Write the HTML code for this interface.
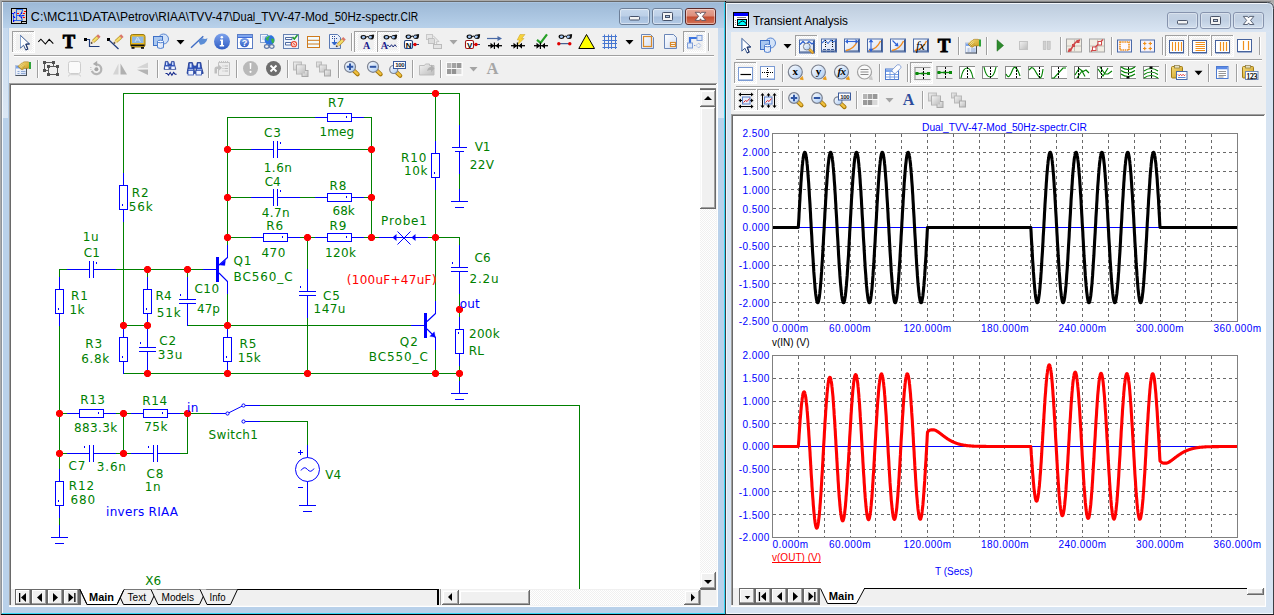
<!DOCTYPE html>
<html><head><meta charset="utf-8"><title>Micro-Cap</title>
<style>
html,body{margin:0;padding:0;background:#ababab;overflow:hidden}
svg{display:block}
.ui{font-family:"Liberation Sans",sans-serif}
.sch{font-family:"DejaVu Sans","Liberation Sans",sans-serif}
.ser{font-family:"Liberation Serif",serif}
text{white-space:pre}
</style></head><body>
<svg width="1274" height="615" viewBox="0 0 1274 615">
<defs>
<linearGradient id="gAct" x1="0" y1="0" x2="0" y2="1"><stop offset="0" stop-color="#9bb7d5"/><stop offset="1" stop-color="#b9d2eb"/></linearGradient>
<linearGradient id="gSide" x1="0" y1="0" x2="0" y2="1"><stop offset="0" stop-color="#c6d9ee"/><stop offset="1" stop-color="#dbe7f4"/></linearGradient>
<linearGradient id="gIna" x1="0" y1="0" x2="0" y2="1"><stop offset="0" stop-color="#bdccdd"/><stop offset="1" stop-color="#d9e5f3"/></linearGradient>
<linearGradient id="gBtnA" x1="0" y1="0" x2="0" y2="1"><stop offset="0" stop-color="#c8d9ed"/><stop offset="0.48" stop-color="#bccfe7"/><stop offset="0.52" stop-color="#a6bedc"/><stop offset="1" stop-color="#b4cbe6"/></linearGradient>
<linearGradient id="gBtnC" x1="0" y1="0" x2="0" y2="1"><stop offset="0" stop-color="#e8a898"/><stop offset="0.48" stop-color="#dc8d7a"/><stop offset="0.52" stop-color="#c44a2e"/><stop offset="1" stop-color="#d4775c"/></linearGradient>
<linearGradient id="gBtnI" x1="0" y1="0" x2="0" y2="1"><stop offset="0" stop-color="#c6d3e3"/><stop offset="0.5" stop-color="#c0cfe2"/><stop offset="1" stop-color="#d3e0ef"/></linearGradient>
<pattern id="dither" width="2" height="2" patternUnits="userSpaceOnUse"><rect width="2" height="2" fill="#ffffff"/><rect width="1" height="1" fill="#f0f0f0"/><rect x="1" y="1" width="1" height="1" fill="#f0f0f0"/></pattern>
</defs>
<rect x="0" y="0" width="1274" height="615" fill="#ababab" />
<rect x="1" y="1" width="725" height="614" fill="#b9d1ea" />
<rect x="1" y="1" width="725" height="28" fill="url(#gAct)" />
<rect x="3" y="28" width="5" height="90" fill="url(#gSide)" />
<rect x="718" y="28" width="6" height="90" fill="url(#gSide)" />
<rect x="1" y="1" width="725" height="1" fill="#696969" />
<rect x="1" y="1" width="1" height="614" fill="#8d949c" />
<rect x="2" y="2" width="723" height="1" fill="#aac4e0" />
<rect x="2" y="2" width="1" height="612" fill="#f4f8fc" />
<rect x="724" y="2" width="1" height="612" fill="#35d6f5" />
<rect x="2" y="613" width="723" height="1" fill="#35d6f5" />
<rect x="725" y="1" width="1" height="614" fill="#000000" />
<rect x="1" y="614" width="725" height="1" fill="#000000" />
<rect x="9" y="28" width="709" height="579" fill="#f0f0f0" />
<rect x="11" y="8" width="16" height="16" fill="#000" />
<rect x="12" y="9" width="14" height="14" fill="#d6d3ce" />
<rect x="21" y="21" width="5" height="2" fill="#000" />
<rect x="22" y="22" width="4" height="1" fill="#d0d0d0" />
<path d="M16.500 9v11.500M16.500 9.500h6.500M22.800 9.500l-1.300 3.500-2 2.500 2 2.500 .800 2M13.500 13v8M13 20.500h9.500M17 15.500h7.500M12 13.500h2" fill="none" stroke="#2d6ae6" stroke-width="1.100"/>
<rect x="12" y="13" width="1.5" height="1" fill="#0000ff" />
<rect x="14" y="12" width="1.3" height="1.3" fill="#0000ff" />
<rect x="13" y="16" width="1.4" height="1.2" fill="#0000ff" />
<rect x="14" y="17" width="1.2" height="1" fill="#0000ff" />
<rect x="13" y="20" width="1.2" height="2" fill="#0000ff" />
<rect x="19" y="15" width="1.2" height="1.5" fill="#0000ff" />
<rect x="21" y="12.4" width="1.2" height="1.6" fill="#0000ff" />
<rect x="21" y="16.5" width="1.2" height="1.6" fill="#0000ff" />
<rect x="22.4" y="15" width="1.3" height="1.2" fill="#0000ff" />
<rect x="17" y="13" width="2" height="1" fill="#ff0000" />
<rect x="24" y="11" width="2" height="1" fill="#ff0000" />
<rect x="23" y="13" width="2" height="1" fill="#ff0000" />
<rect x="23" y="17" width="2" height="1" fill="#ff0000" />
<text x="30.8" y="21" fill="#000" font-size="12" class="ui" text-anchor="start" font-weight="normal" textLength="16.1" lengthAdjust="spacingAndGlyphs">C:\</text>
<text x="46.9" y="21" fill="#000" font-size="12" class="ui" text-anchor="start" font-weight="normal" textLength="35.7" lengthAdjust="spacingAndGlyphs">MC11\</text>
<text x="82.6" y="21" fill="#000" font-size="12" class="ui" text-anchor="start" font-weight="normal" textLength="37.3" lengthAdjust="spacingAndGlyphs">DATA\</text>
<text x="119.9" y="21" fill="#000" font-size="12" class="ui" text-anchor="start" font-weight="normal" textLength="38.4" lengthAdjust="spacingAndGlyphs">Petrov\</text>
<text x="158.3" y="21" fill="#000" font-size="12" class="ui" text-anchor="start" font-weight="normal" textLength="30.7" lengthAdjust="spacingAndGlyphs">RIAA\</text>
<text x="189.0" y="21" fill="#000" font-size="12" class="ui" text-anchor="start" font-weight="normal" textLength="43.6" lengthAdjust="spacingAndGlyphs">TVV-47\</text>
<text x="232.6" y="21" fill="#000" font-size="12" class="ui" text-anchor="start" font-weight="normal" textLength="28.7" lengthAdjust="spacingAndGlyphs">Dual_</text>
<text x="261.3" y="21" fill="#000" font-size="12" class="ui" text-anchor="start" font-weight="normal" textLength="43.6" lengthAdjust="spacingAndGlyphs">TVV-47-</text>
<text x="304.9" y="21" fill="#000" font-size="12" class="ui" text-anchor="start" font-weight="normal" textLength="29.8" lengthAdjust="spacingAndGlyphs">Mod_</text>
<text x="334.7" y="21" fill="#000" font-size="12" class="ui" text-anchor="start" font-weight="normal" textLength="30.6" lengthAdjust="spacingAndGlyphs">50Hz-</text>
<text x="365.3" y="21" fill="#000" font-size="12" class="ui" text-anchor="start" font-weight="normal" textLength="35.3" lengthAdjust="spacingAndGlyphs">spectr.</text>
<text x="400.6" y="21" fill="#000" font-size="12" class="ui" text-anchor="start" font-weight="normal" textLength="17.6" lengthAdjust="spacingAndGlyphs">CIR</text>
<rect x="619.5" y="8.5" width="30" height="16" rx="2.5" fill="url(#gBtnA)" stroke="#6d7f98"/>
<rect x="620.5" y="9.5" width="28" height="14" rx="1.5" fill="none" stroke="#ffffff" stroke-opacity="0.45"/>
<rect x="652.5" y="8.5" width="30" height="16" rx="2.5" fill="url(#gBtnA)" stroke="#6d7f98"/>
<rect x="653.5" y="9.5" width="28" height="14" rx="1.5" fill="none" stroke="#ffffff" stroke-opacity="0.45"/>
<rect x="685.5" y="8.5" width="30" height="16" rx="2.5" fill="url(#gBtnC)" stroke="#5a2a2a"/>
<rect x="686.5" y="9.5" width="28" height="14" rx="1.5" fill="none" stroke="#ffffff" stroke-opacity="0.45"/>
<rect x="629.5" y="16.500" width="10" height="3.500" rx="0.800" fill="#f4f4f4" stroke="#46526a"/>
<rect x="662.5" y="12.500" width="10" height="8" rx="0.800" fill="#f4f4f4" stroke="#46526a"/><rect x="665.5" y="15.500" width="4" height="2" fill="#a9c1de" stroke="#46526a"/>
<path d="M695.200 12.300h4.300l1 1.500 1-1.500h4.300l-3.400 4 3.400 4.100h-4.300l-1-1.600-1 1.600h-4.300l3.400-4.100z" fill="#fff" stroke="#5b4b55" stroke-width="0.9"/>
<rect x="9" y="83" width="709" height="524" fill="#ffffff" />
<rect x="9" y="83" width="708" height="1" fill="#a0a0a0" />
<rect x="9" y="83" width="1" height="523" fill="#a0a0a0" />
<rect x="10" y="84" width="706" height="1" fill="#696969" />
<rect x="10" y="84" width="1" height="521" fill="#696969" />
<rect x="11" y="85" width="705" height="504" fill="#ffffff" />
<rect x="700" y="85" width="16" height="505" fill="url(#dither)" />
<rect x="700" y="85" width="16" height="4" fill="#f4f4f4" />
<rect x="700" y="88" width="16" height="1" fill="#808080" />
<rect x="700" y="89" width="16" height="1" fill="#696969" />
<rect x="700" y="90" width="16" height="17" fill="#f0f0f0" />
<rect x="700" y="90" width="16" height="1" fill="#f8f8f8" />
<rect x="700" y="90" width="1" height="17" fill="#f8f8f8" />
<rect x="701" y="91" width="14" height="1" fill="#ffffff" />
<rect x="701" y="91" width="1" height="15" fill="#ffffff" />
<rect x="700" y="106" width="16" height="1" fill="#696969" />
<rect x="715" y="90" width="1" height="17" fill="#696969" />
<rect x="701" y="105" width="14" height="1" fill="#a0a0a0" />
<rect x="714" y="91" width="1" height="15" fill="#a0a0a0" />
<path d="M704 100h8l-4-4z" fill="#000"/>
<rect x="700" y="107" width="16" height="102" fill="#f0f0f0" />
<rect x="700" y="107" width="16" height="1" fill="#f8f8f8" />
<rect x="700" y="107" width="1" height="102" fill="#f8f8f8" />
<rect x="701" y="108" width="14" height="1" fill="#ffffff" />
<rect x="701" y="108" width="1" height="100" fill="#ffffff" />
<rect x="700" y="208" width="16" height="1" fill="#696969" />
<rect x="715" y="107" width="1" height="102" fill="#696969" />
<rect x="701" y="207" width="14" height="1" fill="#a0a0a0" />
<rect x="714" y="108" width="1" height="100" fill="#a0a0a0" />
<rect x="700" y="572" width="16" height="17" fill="#f0f0f0" />
<rect x="700" y="572" width="16" height="1" fill="#f8f8f8" />
<rect x="700" y="572" width="1" height="17" fill="#f8f8f8" />
<rect x="701" y="573" width="14" height="1" fill="#ffffff" />
<rect x="701" y="573" width="1" height="15" fill="#ffffff" />
<rect x="700" y="588" width="16" height="1" fill="#696969" />
<rect x="715" y="572" width="1" height="17" fill="#696969" />
<rect x="701" y="587" width="14" height="1" fill="#a0a0a0" />
<rect x="714" y="573" width="1" height="15" fill="#a0a0a0" />
<path d="M704 580h8l-4 4z" fill="#000"/>
<rect x="11" y="589" width="706" height="16" fill="#f0f0f0" />
<rect x="11" y="589" width="70" height="1" fill="#f0f0f0" />
<rect x="15" y="589" width="66" height="16" fill="#696969" />
<rect x="16" y="590" width="14" height="14" fill="#f0f0f0" />
<rect x="16" y="590" width="14" height="1" fill="#ffffff" />
<rect x="16" y="590" width="1" height="14" fill="#ffffff" />
<rect x="16" y="603" width="14" height="1" fill="#a0a0a0" />
<rect x="29" y="590" width="1" height="14" fill="#a0a0a0" />
<rect x="32" y="590" width="14" height="14" fill="#f0f0f0" />
<rect x="32" y="590" width="14" height="1" fill="#ffffff" />
<rect x="32" y="590" width="1" height="14" fill="#ffffff" />
<rect x="32" y="603" width="14" height="1" fill="#a0a0a0" />
<rect x="45" y="590" width="1" height="14" fill="#a0a0a0" />
<rect x="48" y="590" width="14" height="14" fill="#f0f0f0" />
<rect x="48" y="590" width="14" height="1" fill="#ffffff" />
<rect x="48" y="590" width="1" height="14" fill="#ffffff" />
<rect x="48" y="603" width="14" height="1" fill="#a0a0a0" />
<rect x="61" y="590" width="1" height="14" fill="#a0a0a0" />
<rect x="64" y="590" width="14" height="14" fill="#f0f0f0" />
<rect x="64" y="590" width="14" height="1" fill="#ffffff" />
<rect x="64" y="590" width="1" height="14" fill="#ffffff" />
<rect x="64" y="603" width="14" height="1" fill="#a0a0a0" />
<rect x="77" y="590" width="1" height="14" fill="#a0a0a0" />
<path d="M19 593h1.300v9h-1.300zM26 593v9l-5-4.500z" fill="#000"/>
<path d="M42 593v9l-5-4.500z" fill="#000"/>
<path d="M53 593v9l5-4.500z" fill="#000"/>
<path d="M68.500 593v9l5-4.500zM74.200 593h1.300v9h-1.300z" fill="#000"/>
<rect x="81" y="589" width="357" height="1" fill="#000" />
<rect x="437" y="589" width="1" height="16" fill="#000" />
<rect x="438" y="589" width="1" height="16" fill="#000" />
<rect x="440" y="589" width="1" height="16" fill="#a0a0a0" />
<rect x="441" y="589" width="1" height="16" fill="#f8f8f8" />
<path d="M116.5 589.5L123.5 604.5H150L157 589.5" fill="#f0f0f0" stroke="#000" stroke-width="1"/>
<text x="127.5" y="600.7" fill="#000" font-size="11" class="ui" text-anchor="start" font-weight="normal" textLength="18.5" lengthAdjust="spacingAndGlyphs">Text</text>
<path d="M151 589.5L158 604.5H199.5L206.5 589.5" fill="#f0f0f0" stroke="#000" stroke-width="1"/>
<text x="161.5" y="600.7" fill="#000" font-size="11" class="ui" text-anchor="start" font-weight="normal" textLength="32.5" lengthAdjust="spacingAndGlyphs">Models</text>
<path d="M200 589.5L207 604.5H230.5L237.5 589.5" fill="#f0f0f0" stroke="#000" stroke-width="1"/>
<text x="209.5" y="600.7" fill="#000" font-size="11" class="ui" text-anchor="start" font-weight="normal" textLength="16" lengthAdjust="spacingAndGlyphs">Info</text>
<path d="M80 589.5L87 604.5H117L124 589.5" fill="#fff" stroke="#000" stroke-width="1"/>
<rect x="81" y="589" width="43" height="1" fill="#fff" />
<path d="M80 589.5L87 604.5H117L124 589.5" fill="none" stroke="#000" stroke-width="1"/>
<text x="89" y="600.7" fill="#000" font-size="11" class="ui" text-anchor="start" font-weight="bold" textLength="25" lengthAdjust="spacingAndGlyphs">Main</text>
<rect x="442" y="590" width="258" height="15" fill="url(#dither)" />
<rect x="442" y="590" width="17" height="15" fill="#f0f0f0" />
<rect x="442" y="590" width="17" height="1" fill="#f8f8f8" />
<rect x="442" y="590" width="1" height="15" fill="#f8f8f8" />
<rect x="443" y="591" width="15" height="1" fill="#ffffff" />
<rect x="443" y="591" width="1" height="13" fill="#ffffff" />
<rect x="442" y="604" width="17" height="1" fill="#696969" />
<rect x="458" y="590" width="1" height="15" fill="#696969" />
<rect x="443" y="603" width="15" height="1" fill="#a0a0a0" />
<rect x="457" y="591" width="1" height="13" fill="#a0a0a0" />
<path d="M452 593v8l-4-4z" fill="#000"/>
<rect x="459" y="590" width="71" height="15" fill="#f0f0f0" />
<rect x="459" y="590" width="71" height="1" fill="#f8f8f8" />
<rect x="459" y="590" width="1" height="15" fill="#f8f8f8" />
<rect x="460" y="591" width="69" height="1" fill="#ffffff" />
<rect x="460" y="591" width="1" height="13" fill="#ffffff" />
<rect x="459" y="604" width="71" height="1" fill="#696969" />
<rect x="529" y="590" width="1" height="15" fill="#696969" />
<rect x="460" y="603" width="69" height="1" fill="#a0a0a0" />
<rect x="528" y="591" width="1" height="13" fill="#a0a0a0" />
<rect x="684" y="590" width="16" height="15" fill="#f0f0f0" />
<rect x="684" y="590" width="16" height="1" fill="#f8f8f8" />
<rect x="684" y="590" width="1" height="15" fill="#f8f8f8" />
<rect x="685" y="591" width="14" height="1" fill="#ffffff" />
<rect x="685" y="591" width="1" height="13" fill="#ffffff" />
<rect x="684" y="604" width="16" height="1" fill="#696969" />
<rect x="699" y="590" width="1" height="15" fill="#696969" />
<rect x="685" y="603" width="14" height="1" fill="#a0a0a0" />
<rect x="698" y="591" width="1" height="13" fill="#a0a0a0" />
<path d="M691 593.5v8l4-4z" fill="#000"/>
<rect x="700" y="590" width="16" height="15" fill="#f0f0f0" />
<rect x="700" y="589" width="16" height="1" fill="#696969" />
<rect x="700" y="589" width="1" height="16" fill="#a0a0a0" />
<rect x="716" y="85" width="1" height="520" fill="#f4f4f4" />
<rect x="9" y="605" width="709" height="1" fill="#f4f4f4" />
<rect x="9" y="606" width="709" height="1" fill="#ffffff" />
<rect x="717" y="83" width="1" height="524" fill="#ffffff" />
<rect x="726" y="1" width="545" height="1" fill="#858585" />
<path d="M725 615V2H1268Q1274 2 1274 8V615Z" fill="#d7e4f2"/>
<path d="M727 32V4H1267Q1272 4 1272 9V32Z" fill="url(#gIna)"/>
<path d="M725.5 615V2.5H1267.5Q1273.5 2.5 1273.5 8.5V615" fill="none" stroke="#3b3f45"/>
<path d="M726.5 613V3.5H1267" fill="none" stroke="#f2f6fb"/>
<rect x="727" y="613" width="546" height="1" fill="#f2f6fb" />
<rect x="725" y="614" width="549" height="1" fill="#1a1c20" />
<rect x="731" y="32" width="535" height="575" fill="#f0f0f0" />
<rect x="733" y="12" width="16" height="16" fill="#000" />
<rect x="734" y="13" width="14" height="3" fill="#0000ff" />
<rect x="734" y="16" width="14" height="11" fill="#ffffff" />
<rect x="737" y="17" width="9" height="1" fill="#808080" />
<rect x="737" y="19" width="10" height="7" fill="#000" />
<rect x="738" y="20" width="8" height="5" fill="#00ffff" />
<path d="M738.5 24q4-6 8 0" fill="none" stroke="#000" stroke-width="1"/>
<rect x="735" y="20" width="1" height="1" fill="#808080" />
<rect x="735" y="22" width="1" height="1" fill="#808080" />
<rect x="735" y="24" width="1" height="1" fill="#808080" />
<text x="753" y="25" fill="#000" font-size="12.3" class="ui" text-anchor="start" font-weight="normal" textLength="95" lengthAdjust="spacingAndGlyphs">Transient Analysis</text>
<rect x="1167.5" y="12.5" width="30" height="16" rx="2.5" fill="url(#gBtnI)" stroke="#8693ad"/>
<rect x="1168.5" y="13.5" width="28" height="14" rx="1.5" fill="none" stroke="#ffffff" stroke-opacity="0.35"/>
<rect x="1200.5" y="12.5" width="30" height="16" rx="2.5" fill="url(#gBtnI)" stroke="#8693ad"/>
<rect x="1201.5" y="13.5" width="28" height="14" rx="1.5" fill="none" stroke="#ffffff" stroke-opacity="0.35"/>
<rect x="1233.5" y="12.5" width="30" height="16" rx="2.5" fill="url(#gBtnI)" stroke="#8693ad"/>
<rect x="1234.5" y="13.5" width="28" height="14" rx="1.5" fill="none" stroke="#ffffff" stroke-opacity="0.35"/>
<rect x="1177.5" y="20.500" width="10" height="3.500" rx="0.800" fill="#f4f4f4" stroke="#4a5468"/>
<rect x="1210.5" y="16.500" width="10" height="8" rx="0.800" fill="#f4f4f4" stroke="#4a5468"/><rect x="1213.5" y="19.5" width="4" height="2" fill="#c0cfe2" stroke="#4a5468"/>
<path d="M1243.300 16.400h4.300l1 1.500 1-1.500h4.300l-3.400 4 3.400 4.100h-4.300l-1-1.600-1 1.600h-4.300l3.400-4.100z" fill="#fff" stroke="#4a5468" stroke-width="0.9"/>
<rect x="731" y="114" width="534" height="1" fill="#a0a0a0" />
<rect x="731" y="114" width="1" height="492" fill="#a0a0a0" />
<rect x="732" y="115" width="532" height="1" fill="#696969" />
<rect x="732" y="115" width="1" height="490" fill="#696969" />
<rect x="733" y="116" width="532" height="473" fill="#ffffff" />
<rect x="731" y="605" width="535" height="1" fill="#f4f4f4" />
<rect x="731" y="606" width="535" height="1" fill="#ffffff" />
<rect x="1265" y="114" width="1" height="493" fill="#ffffff" />
<rect x="733" y="588" width="532" height="17" fill="#f0f0f0" />
<rect x="739" y="588" width="81" height="17" fill="#696969" />
<rect x="740" y="589" width="14" height="14" fill="#f0f0f0" />
<rect x="740" y="589" width="14" height="1" fill="#ffffff" />
<rect x="740" y="589" width="1" height="14" fill="#ffffff" />
<rect x="740" y="602" width="14" height="1" fill="#a0a0a0" />
<rect x="753" y="589" width="1" height="14" fill="#a0a0a0" />
<rect x="756" y="589" width="14" height="14" fill="#f0f0f0" />
<rect x="756" y="589" width="14" height="1" fill="#ffffff" />
<rect x="756" y="589" width="1" height="14" fill="#ffffff" />
<rect x="756" y="602" width="14" height="1" fill="#a0a0a0" />
<rect x="769" y="589" width="1" height="14" fill="#a0a0a0" />
<rect x="772" y="589" width="14" height="14" fill="#f0f0f0" />
<rect x="772" y="589" width="14" height="1" fill="#ffffff" />
<rect x="772" y="589" width="1" height="14" fill="#ffffff" />
<rect x="772" y="602" width="14" height="1" fill="#a0a0a0" />
<rect x="785" y="589" width="1" height="14" fill="#a0a0a0" />
<rect x="788" y="589" width="14" height="14" fill="#f0f0f0" />
<rect x="788" y="589" width="14" height="1" fill="#ffffff" />
<rect x="788" y="589" width="1" height="14" fill="#ffffff" />
<rect x="788" y="602" width="14" height="1" fill="#a0a0a0" />
<rect x="801" y="589" width="1" height="14" fill="#a0a0a0" />
<rect x="804" y="589" width="14" height="14" fill="#f0f0f0" />
<rect x="804" y="589" width="14" height="1" fill="#ffffff" />
<rect x="804" y="589" width="1" height="14" fill="#ffffff" />
<rect x="804" y="602" width="14" height="1" fill="#a0a0a0" />
<rect x="817" y="589" width="1" height="14" fill="#a0a0a0" />
<path d="M744.700 596h5.600l-2.800 3.200z" fill="#000"/>
<path d="M758.800 592h1.300v9h-1.300zM766 592v9l-5-4.500z" fill="#000"/>
<path d="M782 592v9l-5-4.500z" fill="#000"/>
<path d="M793 592v9l5-4.500z" fill="#000"/>
<path d="M808.500 592v9l5-4.500zM814.200 592h1.300v9h-1.300z" fill="#000"/>
<path d="M820.5 588.5L827.5 603.5H856.5L864.5 588.5" fill="#fff" stroke="#000" stroke-width="1"/>
<rect x="821" y="588" width="43" height="1" fill="#fff" />
<text x="828.7" y="599.7" fill="#000" font-size="11" class="ui" text-anchor="start" font-weight="bold" textLength="25.5" lengthAdjust="spacingAndGlyphs">Main</text>
<rect x="864" y="588" width="383" height="1" fill="#000" />
<rect x="1247" y="588" width="17" height="7" fill="#f0f0f0" />
<rect x="1247" y="588" width="17" height="1" fill="#ffffff" />
<rect x="1247" y="588" width="1" height="7" fill="#ffffff" />
<rect x="1247" y="594" width="17" height="1" fill="#696969" />
<rect x="1263" y="588" width="1" height="7" fill="#696969" />
<rect x="1248" y="593" width="15" height="1" fill="#a0a0a0" />
<rect x="1262" y="589" width="1" height="5" fill="#a0a0a0" />
<defs>
<linearGradient id="gLens" x1="0" y1="0" x2="1" y2="1"><stop offset="0" stop-color="#ffffff"/><stop offset="1" stop-color="#a9c9f2"/></linearGradient>
<linearGradient id="gPage" x1="0" y1="0" x2="1" y2="1"><stop offset="0" stop-color="#ffffff"/><stop offset="1" stop-color="#cfdcf2"/></linearGradient>
<linearGradient id="gGray" x1="0" y1="0" x2="1" y2="1"><stop offset="0" stop-color="#f2f2f2"/><stop offset="1" stop-color="#bcbcbc"/></linearGradient>
<linearGradient id="gBall" x1="0" y1="0" x2="0" y2="1"><stop offset="0" stop-color="#7ea3ec"/><stop offset="1" stop-color="#2f5cc4"/></linearGradient>
<linearGradient id="gGold" x1="0" y1="0" x2="1" y2="1"><stop offset="0" stop-color="#f6dc7a"/><stop offset="1" stop-color="#c99a1c"/></linearGradient>
</defs>
<g id="toolbars">
<rect x="14" y="55" width="700" height="1" fill="#a0a0a0" />
<rect x="14" y="56" width="700" height="1" fill="#ffffff" />
<rect x="12" y="31" width="23" height="22" fill="url(#dither)" />
<rect x="16" y="34" width="16" height="16" fill="#f0f0f0" />
<rect x="12" y="31" width="23" height="1" fill="#a0a0a0" />
<rect x="12" y="31" width="1" height="22" fill="#a0a0a0" />
<rect x="12" y="52" width="23" height="1" fill="#ffffff" />
<rect x="34" y="31" width="1" height="22" fill="#ffffff" />
<g transform="translate(20.5,35.4)"><path d="M0 0V12.700L3.100 9.800L5.200 14.500L7.300 13.700L5.400 8.800L9 8.500z" fill="#fdfeff" stroke="#3a5890" stroke-width="1" stroke-linejoin="round"/><path d="M0 0.500V12" stroke="#8aa8d4" stroke-width="1"/><path d="M5.200 14.500L7.300 13.700L5.400 8.800L9 8.500" fill="none" stroke="#22386a" stroke-width="1.100" stroke-linejoin="round"/></g>
<path d="M38.3 41.8L40.9 39.2L45.4 44L49.2 39.3L53.3 43.6" fill="none" stroke="#000" stroke-width="1.05" stroke-linejoin="miter"/>
<text x="68.9" y="47.8" fill="#000" font-size="18.6" class="ser" text-anchor="middle" font-weight="bold" stroke="#000" stroke-width="0.9">T</text>
<rect x="84" y="38" width="3" height="3" fill="#000" />
<path d="M87 39.5h2.5v7h10" fill="none" stroke="#1f3b7a" stroke-width="1.2"/>
<path d="M93.1 41.5L97.7 37.1" stroke="#b8922a" stroke-width="3.6"/><path d="M93.1 41.5L97.7 37.1" stroke="#f3dc6a" stroke-width="2.2"/><path d="M97.6 37.3L99.3 35.6" stroke="#d9776a" stroke-width="3.6"/><path d="M91.3 43.2L93.2 41.4" stroke="#e8cfa0" stroke-width="2.6"/><path d="M91.0 43.5L92.1 42.4" stroke="#333" stroke-width="1.4"/>
<rect x="107" y="38" width="3" height="3" fill="#000" />
<path d="M109.5 40.5L118.5 49" fill="none" stroke="#1f3b7a" stroke-width="1.2"/>
<path d="M115.9 41.5L120.8 37.1" stroke="#b8922a" stroke-width="3.6"/><path d="M115.9 41.5L120.8 37.1" stroke="#f3dc6a" stroke-width="2.2"/><path d="M120.6 37.2L122.4 35.6" stroke="#d9776a" stroke-width="3.6"/><path d="M114.0 43.2L115.9 41.5" stroke="#e8cfa0" stroke-width="2.6"/><path d="M113.7 43.5L114.8 42.5" stroke="#333" stroke-width="1.4"/>
<g transform="translate(130,34)"><rect x="0.5" y="0.5" width="14.5" height="12.5" rx="2" fill="#e9b91f" stroke="#9a7a10"/><rect x="2" y="2.5" width="11.5" height="6.5" fill="#8db6e2"/><path d="M5 8l2.5-5 3 5M6 6h3.5" stroke="#dbe8f6" stroke-width="0.8" fill="none"/><rect x="1" y="10.5" width="13.5" height="1.6" fill="#111"/><rect x="1.5" y="13" width="3" height="1.8" fill="#111"/><rect x="11" y="13" width="3" height="1.8" fill="#111"/></g>
<g transform="translate(153,34)"><circle cx="10.500" cy="5" r="5" fill="#d2e2f8" stroke="#5a86d0"/><rect x="0.500" y="2.500" width="9" height="9" fill="#a9c7f0" stroke="#3f70c6"/><path d="M4.500 7.500v6.200q3 1.600 6 0V7.500z" fill="url(#gPage)" stroke="#4f7fd0"/><ellipse cx="7.500" cy="7.500" rx="3" ry="1.300" fill="#f5f9ff" stroke="#4f7fd0"/></g>
<path d="M176.5 40h8l-4 4.5z" fill="#000"/>
<path d="M191 47.8L203.3 36.2" stroke="#3f6cc4" stroke-width="1.4"/><path d="M198.5 41q2-3.5 4.5-2.5t4.5-.5q-.5 4-3 5.500t-4.500 1z" fill="#5b8dd6"/>
<circle cx="222" cy="41.5" r="8" fill="url(#gBall)"/><path d="M220.200 39.600h2.800v5.400h1.100v1.500h-4.400v-1.500h1.300v-3.900h-.8z" fill="#fff"/><circle cx="221.800" cy="37.200" r="1.250" fill="#fff"/>
<g transform="translate(237,34)"><rect x="0.5" y="0.500" width="15" height="14" fill="#fff" stroke="#5a7cc4"/><rect x="1" y="1" width="14" height="2.500" fill="#7fa6ee"/><path d="M1 3.500h14" stroke="#3f6cd8"/><circle cx="7.500" cy="8.600" r="4.700" fill="url(#gBall)"/></g>
<text x="244.5" y="46" fill="#fff" font-size="9" class="ui" text-anchor="middle" font-weight="bold" >?</text>
<g transform="translate(260,34)"><rect x="0.500" y="0.500" width="7" height="8" fill="#f4f8ff" stroke="#8aa4cf"/><path d="M2 3h4M2 5h4" stroke="#9db4dc" stroke-width="0.800"/><circle cx="9.600" cy="6" r="5" fill="#2f74de"/><path d="M6 3.500q1.500-2 3.500-2.300 1 1.300-.300 2.300t-.200 2.500q-1.500 1.500-3-.500-.500-1 0-2zM11.500 4.500q1.500-.500 2.800 1 .300 2.500-1.300 4-1.500-.500-1.500-2.500-1-1.500 0-2.500z" fill="#38b24a"/><path d="M6.300 3.200q1.700-2 4.300-1.900" fill="none" stroke="#9cc4ff" stroke-width="0.700"/><path d="M4.500 12.500q0-1.800 2.200-1.800t2.300 1.800-2.300 1.800-2.200-1.800zM9.500 12.500q0-1.800 2.300-1.800t2.200 1.800-2.200 1.800-2.300-1.800z" fill="none" stroke="#5f78a8" stroke-width="1.300"/></g>
<g transform="translate(283,34)"><rect x="0.500" y="0.500" width="15" height="14" fill="#eef4fc" stroke="#6682b2"/><path d="M2.500 3.500h6.500v2h-6.500zM2.500 8.500h5.500v2.500h-5.500z" fill="#fff" stroke="#3c5c98" stroke-width="0.900"/><path d="M9.500 3l1.800 2 3.200-4" fill="none" stroke="#1f9a2a" stroke-width="1.500"/><circle cx="11" cy="10.200" r="3.100" fill="#e8442c"/><circle cx="11" cy="10.200" r="1.700" fill="none" stroke="#fff" stroke-width="0.800"/><path d="M9.900 11.300l2.200-2.200" stroke="#fff" stroke-width="0.800"/></g>
<g transform="translate(307,36)"><rect x="0.500" y="0.500" width="12" height="11" fill="#f2fbff" stroke="#cf7a1c"/><path d="M0.500 4.300h12M0.500 8h12" stroke="#cf7a1c"/></g>
<g transform="translate(329,34)"><path d="M0.500 0.500h8l3 3v11h-11z" fill="url(#gPage)" stroke="#5a7ab4"/><path d="M3 2.500h1M5 2.500h1M3 4.500h1M5 4.500h1M7 4.500h1" stroke="#2b4c96" stroke-width="1"/><path d="M5.500 5.500v4.500M3.200 8.500l2.300 2.500 2.300-2.500z" stroke="#2d62c8" fill="#2d62c8" stroke-width="1"/></g>
<path d="M338.2 44.7L343.0 39.9" stroke="#b8922a" stroke-width="3.6"/><path d="M338.2 44.7L343.0 39.9" stroke="#f3dc6a" stroke-width="2.2"/><path d="M342.8 40.0L344.5 38.3" stroke="#d9776a" stroke-width="3.6"/><path d="M336.5 46.5L338.3 44.6" stroke="#e8cfa0" stroke-width="2.6"/><path d="M336.2 46.8L337.3 45.7" stroke="#333" stroke-width="1.4"/>
<rect x="351" y="33" width="1" height="18" fill="#a0a0a0" />
<rect x="352" y="33" width="1" height="18" fill="#ffffff" />
<rect x="354" y="31" width="23" height="22" fill="url(#dither)" />
<rect x="358" y="34" width="16" height="16" fill="#f0f0f0" />
<rect x="354" y="31" width="23" height="1" fill="#a0a0a0" />
<rect x="354" y="31" width="1" height="22" fill="#a0a0a0" />
<rect x="354" y="52" width="23" height="1" fill="#ffffff" />
<rect x="376" y="31" width="1" height="22" fill="#ffffff" />
<rect x="377" y="31" width="23" height="22" fill="url(#dither)" />
<rect x="381" y="34" width="16" height="16" fill="#f0f0f0" />
<rect x="377" y="31" width="23" height="1" fill="#a0a0a0" />
<rect x="377" y="31" width="1" height="22" fill="#a0a0a0" />
<rect x="377" y="52" width="23" height="1" fill="#ffffff" />
<rect x="399" y="31" width="1" height="22" fill="#ffffff" />
<g transform="translate(360,34.5)"><g transform="scale(1.04,0.92)"><path d="M0.500 2.500q0-2 2.500-2t3 1.600q1-.800 2 0 .600-1.600 3-1.600l1.800-.600 .800.600-.300 3q-.200 2-2.700 2t-2.800-2.300q-.800-.800-1.600 0Q6 5.500 3.300 5.500T.500 2.500z" fill="#111"/><path d="M1.900 2.700q0-1.200 1.500-1.200t1.500 1.200-1.500 1.600T1.900 2.700zM8.500 2.700q0-1.200 1.500-1.200t1.500 1.200-1.500 1.600-1.500-1.600z" fill="#a4c8f6"/></g></g>
<text x="366.6" y="48.9" fill="#1c1c8c" font-size="10" class="ser" text-anchor="middle" font-weight="bold" >A</text>
<g transform="translate(383,34.5)"><g transform="scale(1.04,0.92)"><path d="M0.500 2.500q0-2 2.500-2t3 1.600q1-.800 2 0 .600-1.600 3-1.600l1.800-.600 .800.600-.300 3q-.200 2-2.700 2t-2.800-2.300q-.800-.800-1.600 0Q6 5.500 3.300 5.500T.500 2.500z" fill="#111"/><path d="M1.900 2.700q0-1.200 1.500-1.200t1.500 1.200-1.500 1.600T1.900 2.700zM8.500 2.700q0-1.200 1.500-1.200t1.500 1.200-1.500 1.600-1.500-1.600z" fill="#a4c8f6"/></g></g>
<text x="384.3" y="48.9" fill="#1c1c8c" font-size="10" class="ser" text-anchor="middle" font-weight="bold" >A</text>
<path d="M387 45.300h1.300l1.500 1.700 1.700-2.300 1.700 2.300 1.700-2.300 1.600 2" fill="none" stroke="#1c2c7c" stroke-width="1"/>
<g transform="translate(405,34)"><g transform="scale(1.04,0.92)"><path d="M0.500 2.500q0-2 2.500-2t3 1.600q1-.800 2 0 .600-1.600 3-1.600l1.800-.600 .800.600-.300 3q-.200 2-2.700 2t-2.800-2.300q-.800-.800-1.600 0Q6 5.500 3.300 5.500T.500 2.500z" fill="#111"/><path d="M1.900 2.700q0-1.200 1.500-1.200t1.500 1.200-1.500 1.600T1.900 2.700zM8.500 2.700q0-1.200 1.500-1.200t1.500 1.200-1.500 1.600-1.500-1.600z" fill="#a4c8f6"/></g></g>
<rect x="404.500" y="40.500" width="8" height="8" rx="1.500" fill="#fff" stroke="#1f3f7c" stroke-width="1.100"/>
<text x="408.6" y="47.6" fill="#000" font-size="8" class="ui" text-anchor="middle" font-weight="bold" >N</text>
<path d="M413 44.500h6" stroke="#1f3f7c" stroke-width="1"/><circle cx="415" cy="44.500" r="1.700" fill="#e00000"/>
<g transform="translate(426,34)"><rect x="0.500" y="0.500" width="6" height="5" fill="#e6e6e6" stroke="#c8c8c8"/><rect x="2.500" y="4.500" width="6" height="5" fill="#dcdcdc" stroke="#c0c0c0"/><path d="M7 1.500l6 6-3 .500 1.500 3.500" fill="#e8e8e8" stroke="#c4c4c4"/><rect x="7.500" y="10.500" width="8" height="4" fill="#e4e4e4" stroke="#bcbcbc"/></g>
<path d="M449.5 40h8l-4 4.5z" fill="#a4a4a4"/>
<g transform="translate(466,34)"><g transform="scale(1.04,0.92)"><path d="M0.500 2.500q0-2 2.500-2t3 1.600q1-.800 2 0 .600-1.600 3-1.600l1.800-.600 .800.600-.300 3q-.200 2-2.700 2t-2.800-2.300q-.800-.800-1.600 0Q6 5.500 3.300 5.500T.500 2.500z" fill="#111"/><path d="M1.900 2.700q0-1.200 1.500-1.200t1.500 1.200-1.500 1.600T1.900 2.700zM8.500 2.700q0-1.200 1.500-1.200t1.500 1.200-1.500 1.600-1.500-1.600z" fill="#a4c8f6"/></g></g>
<rect x="465.500" y="40.500" width="8" height="8" rx="1.500" fill="#fff" stroke="#a01414" stroke-width="1.100"/>
<text x="469.6" y="47.6" fill="#000" font-size="8" class="ui" text-anchor="middle" font-weight="bold" >V</text>
<path d="M474 44.500h6" stroke="#1f3f7c" stroke-width="1"/><circle cx="476" cy="44.500" r="1.700" fill="#e00000"/>
<path d="M487 38.500h12.500" stroke="#4a6aa6" stroke-width="1.200"/><path d="M502 38.500l-4.500-2.500v5z" fill="#4a6aa6"/>
<path d="M488 45.7h14" stroke="#000" stroke-width="1.3"/><path d="M494.4 42.5v6.4" stroke="#000" stroke-width="1.2"/><path d="M490.5 42.7L494.2 45.7L490.5 48.7zM499 42.7L495.6 45.7L499 48.7z" fill="#000"/>
<path d="M520 34.500h5l-3.300 4h2.300l-6.500 6.500 2-5h-2.300z" fill="#f7d23a" stroke="#c9a020" stroke-width="0.500"/>
<path d="M511 45.7h14" stroke="#000" stroke-width="1.3"/><path d="M517.4 42.5v6.4" stroke="#000" stroke-width="1.2"/><path d="M513.5 42.7L517.2 45.7L513.5 48.7zM522 42.7L518.6 45.7L522 48.7z" fill="#000"/>
<path d="M537 39.800l3.600 3 6.400-8.400" fill="none" stroke="#27a127" stroke-width="2.200"/>
<path d="M534 45.7h14" stroke="#000" stroke-width="1.3"/><path d="M540.4 42.5v6.4" stroke="#000" stroke-width="1.2"/><path d="M536.5 42.7L540.2 45.7L536.5 48.7zM545 42.7L541.6 45.7L545 48.7z" fill="#000"/>
<g transform="translate(558,34)"><g transform="scale(1.04,0.92)"><path d="M0.500 2.500q0-2 2.500-2t3 1.600q1-.800 2 0 .600-1.600 3-1.600l1.800-.600 .800.600-.300 3q-.200 2-2.700 2t-2.800-2.300q-.800-.800-1.600 0Q6 5.500 3.300 5.500T.500 2.500z" fill="#111"/><path d="M1.900 2.700q0-1.200 1.500-1.200t1.500 1.200-1.500 1.600T1.900 2.700zM8.500 2.700q0-1.200 1.500-1.200t1.500 1.200-1.500 1.600-1.500-1.600z" fill="#a4c8f6"/></g></g>
<path d="M558.500 43.700h11.500" stroke="#1f3f7c" stroke-width="1"/><circle cx="558.800" cy="43.700" r="1.700" fill="#e00000"/><circle cx="569.800" cy="43.700" r="1.700" fill="#e00000"/>
<path d="M586.500 34.500L578.800 48.500H594.500z" fill="#ffff00" stroke="#000" stroke-width="1"/>
<path d="M604.500 34.500v14.500M608.500 34.500v14.500M611.500 34.500v14.500M615.500 34.500v14.500M602.500 36.500h14.500M602.500 40.500h14.500M602.500 43.500h14.500M602.500 47.500h14.500" stroke="#4676d0" stroke-width="1"/>
<path d="M625.5 40h8l-4 4.5z" fill="#000"/>
<g transform="translate(641,34)"><path d="M0.500 0.500h9l3 3v11h-12z" fill="url(#gPage)" stroke="#6a86b8"/><rect x="2.500" y="2.500" width="8" height="10" fill="none" stroke="#d98a2a" stroke-width="1.200"/></g>
<g transform="translate(664,34)"><path d="M0.500 0.500h9l3 3v11h-12z" fill="url(#gPage)" stroke="#6a86b8"/><rect x="6.500" y="8.500" width="5" height="4" fill="#fff" stroke="#d98a2a" stroke-width="1.200"/><path d="M7 10.500h4" stroke="#d98a2a"/></g>
<rect x="683" y="31" width="23" height="22" fill="url(#dither)" />
<rect x="687" y="34" width="16" height="16" fill="#f0f0f0" />
<rect x="683" y="31" width="23" height="1" fill="#a0a0a0" />
<rect x="683" y="31" width="1" height="22" fill="#a0a0a0" />
<rect x="683" y="52" width="23" height="1" fill="#ffffff" />
<rect x="705" y="31" width="1" height="22" fill="#ffffff" />
<g transform="translate(687,35)"><path d="M3 8V3h7" fill="none" stroke="#3b74e0" stroke-width="2.200"/><rect x="10" y="0.500" width="5" height="5" fill="#dfe9fa" stroke="#7d9cd6"/><rect x="0.500" y="8" width="5" height="5" fill="#dfe9fa" stroke="#7d9cd6"/><path d="M7 10.500h2M11.500 8l2.500 2.500-2.500 2.500-2.500-2.500z" fill="none" stroke="#6a8fd8" stroke-width="0.900" stroke-dasharray="1 1"/></g>
<rect x="708" y="33" width="1" height="18" fill="#a0a0a0" />
<rect x="709" y="33" width="1" height="18" fill="#ffffff" />
<g transform="translate(14,61)"><rect x="1.500" y="4.500" width="11" height="10" fill="url(#gPage)" stroke="#b4c2dc"/><path d="M12.500 5v10M1.500 14.500h11.500" stroke="#4a525c"/><rect x="2" y="5" width="10" height="2.500" fill="#7aa4ee"/><path d="M3.500 10.500h2M7 10.500h4.500M3.500 12.500h2M7 12.500h4.500" stroke="#8fa8d4" stroke-width="1"/><path d="M8.500 2q.5-1.200 2-1.200h3.500l1.500 .600v5.400l-1.500 .600h-3.500l-2.500 1.500-4-3.500 3-3z" fill="url(#gGold)" stroke="#9a6c10" stroke-width="0.500"/><rect x="15" y="1" width="2" height="7" fill="#2fa23a"/><path d="M5 4.500l3.500 3.500M6.200 3.300l3.800 3.800M7.500 2.300l3.500 3.500M4 5.500l3 3" stroke="#7a5a14" stroke-width="0.600" stroke-dasharray="0.800 0.800"/><path d="M4.500 5l3.500-3.500M5.500 6l3.500-3.500M6.500 7l3.500-3.500" stroke="#fff2a8" stroke-width="0.600"/></g>
<rect x="37" y="60" width="1" height="18" fill="#a0a0a0" />
<rect x="38" y="60" width="1" height="18" fill="#ffffff" />
<path d="M44.500 62.500h9M44.500 62.500v8M53.500 62.500v4M44.500 70.500h4M48.500 66.500h9M48.500 66.500v8M57.500 66.500v8M48.500 74.500h9" fill="none" stroke="#5a5a5a" stroke-width="1"/>
<rect x="43" y="61" width="3" height="3" fill="#505050" />
<rect x="52" y="61" width="3" height="3" fill="#505050" />
<rect x="47" y="65" width="3" height="3" fill="#505050" />
<rect x="56" y="65" width="3" height="3" fill="#505050" />
<rect x="43" y="69" width="3" height="3" fill="#505050" />
<rect x="47" y="73" width="3" height="3" fill="#505050" />
<rect x="56" y="73" width="3" height="3" fill="#505050" />
<rect x="68.500" y="61.500" width="12" height="12" rx="2" fill="#fafafa" stroke="#cdcdcd"/><path d="M68.500 76.500q0-1.800 1.800-1.800h8.400q1.800 0 1.800 1.800" fill="none" stroke="#d0d0d0"/>
<path d="M96.400 64.300A4.900 4.900 0 1 1 91.800 70.900" fill="none" stroke="#b4b4b4" stroke-width="2.200"/><path d="M97.200 60.700l-4.300 3.200 4.300 2.600z" fill="#ababab"/><circle cx="96.400" cy="69.200" r="2" fill="#a4a4a4"/><path d="M90 67.500h1.500M90.300 69.500h1.200" stroke="#c0c0c0" stroke-width="0.8"/>
<path d="M118.500 63.500v11h-5.500z" fill="#d4d4d4"/><path d="M120.500 63.500v11h6.500z" fill="#b0b0b0"/>
<path d="M148 62.500v5.500l-11-.200z" fill="#d4d4d4"/><path d="M148 69.500v5.500l-11-5.300z" fill="#b4b4b4"/>
<rect x="157" y="60" width="1" height="18" fill="#a0a0a0" />
<rect x="158" y="60" width="1" height="18" fill="#ffffff" />
<g transform="translate(164,61)"><g transform="scale(0.88)"><path d="M1.500 0.500h3l1 3.500 1 5.500h-6.500l1-5.500zM8.500 0.500h3l.500 3.500 1.500 5.500h-6.500l1-5.500z" fill="#3558c0" stroke="#1c3488" stroke-width="0.700"/><rect x="5" y="3" width="3.500" height="2.600" fill="#2d4fb0"/><path d="M1.200 6.300h4v2.700h-4zM8.300 6.300h4v2.700h-4z" fill="#f0f5ff"/><path d="M2.300 1.300h1.500v3.200h-1.500zM9.200 1.300h1.500v3.200h-1.500z" fill="#d8e6ff"/></g></g>
<path d="M165.500 73.500h1.500l1.500 1.700 1.700-2.700 1.700 2.700 1.700-2.700 1.500 1.700h1.500" fill="none" stroke="#14288c" stroke-width="1.100"/>
<g transform="translate(187,62)"><g transform="scale(1.2)"><path d="M1.500 0.500h3l1 3.500 1 5.500h-6.500l1-5.500zM8.500 0.500h3l.500 3.500 1.500 5.500h-6.500l1-5.500z" fill="#3558c0" stroke="#1c3488" stroke-width="0.700"/><rect x="5" y="3" width="3.500" height="2.600" fill="#2d4fb0"/><path d="M1.200 6.300h4v2.700h-4zM8.300 6.300h4v2.700h-4z" fill="#f0f5ff"/><path d="M2.300 1.300h1.500v3.200h-1.500zM9.200 1.300h1.500v3.200h-1.500z" fill="#d8e6ff"/></g></g>
<rect x="188" y="70.500" width="5.500" height="4.500" fill="#eef3ff" stroke="#2d4fb0" stroke-width="0.800"/><rect x="196" y="70.500" width="5.500" height="4.500" fill="#eef3ff" stroke="#2d4fb0" stroke-width="0.800"/>
<rect x="208" y="60" width="1" height="18" fill="#a0a0a0" />
<rect x="209" y="60" width="1" height="18" fill="#ffffff" />
<g transform="translate(214,61)"><path d="M4.500 1.500h11v13h-11z" fill="#ececec" stroke="#c2c2c2"/><path d="M8.500 5h1M10.500 5h3.500M8.500 7.500h1M10.500 7.500h3.500M8.500 10h1M10.500 10h3.500" stroke="#bcbcbc"/><path d="M5.500 1.500v-1.500M7.500 1.500v-1.500M9.500 1.500v-1.500M11.500 1.500v-1.500M13.500 1.500v-1.500" stroke="#c4c4c4"/><path d="M0.500 12.500V8q0-2.500 2.500-2.500h1.500v-2l3.500 3.300-3.500 3.200v-2h-1.500v4.500z" fill="#bebebe"/></g>
<rect x="236" y="60" width="1" height="18" fill="#a0a0a0" />
<rect x="237" y="60" width="1" height="18" fill="#ffffff" />
<circle cx="250.500" cy="68.500" r="7.500" fill="#b9b9b9"/><path d="M249.600 63h1.800l-.300 6h-1.200z" fill="#fff"/><circle cx="250.500" cy="71.800" r="1.100" fill="#fff"/>
<circle cx="273.500" cy="68.500" r="7.500" fill="#6e6e6e"/><path d="M270.500 65.500l6 6M276.500 65.500l-6 6" stroke="#fff" stroke-width="1.800"/>
<rect x="287" y="60" width="1" height="18" fill="#a0a0a0" />
<rect x="288" y="60" width="1" height="18" fill="#ffffff" />
<g transform="translate(293,61.5)"><rect x="0.5" y="0.5" width="8" height="8" fill="url(#gGray)" stroke="#bdbdbd"/><rect x="3.5" y="3.5" width="9" height="9" fill="url(#gGray)" stroke="#b0b0b0"/><rect x="9" y="9" width="6" height="6" fill="url(#gGray)" stroke="#a8a8a8"/><rect x="4" y="4" width="8" height="8" fill="url(#gGray)"/></g>
<g transform="translate(316,61.5)"><rect x="0.5" y="0.5" width="5" height="5" fill="url(#gGray)" stroke="#bdbdbd"/><rect x="3.5" y="3.5" width="7" height="7" fill="url(#gGray)" stroke="#b8b8b8"/><rect x="8.5" y="8.5" width="6" height="6" fill="url(#gGray)" stroke="#a8a8a8"/></g>
<rect x="338" y="60" width="1" height="18" fill="#a0a0a0" />
<rect x="339" y="60" width="1" height="18" fill="#ffffff" />
<path d="M354.0 70.8L357.6 74.2" stroke="#a87808" stroke-width="4.2" stroke-linecap="round"/><path d="M354.3 70.9L357.5 73.9" stroke="#efc040" stroke-width="2.4" stroke-linecap="round"/><circle cx="350" cy="66.8" r="5.5" fill="url(#gLens)" stroke="#7c8290" stroke-width="1.2"/><path d="M346.8 66.8h6.4M350 63.599999999999994v6.4" stroke="#2f55a4" stroke-width="2"/>
<path d="M377.0 70.8L380.6 74.2" stroke="#a87808" stroke-width="4.2" stroke-linecap="round"/><path d="M377.3 70.9L380.5 73.9" stroke="#efc040" stroke-width="2.4" stroke-linecap="round"/><circle cx="373" cy="66.8" r="5.5" fill="url(#gLens)" stroke="#7c8290" stroke-width="1.2"/><path d="M369.8 66.8h6.4" stroke="#2f55a4" stroke-width="2"/>
<path d="M396.6 72.4L400.2 75.8" stroke="#a87808" stroke-width="4.2" stroke-linecap="round"/><path d="M396.9 72.5L400.1 75.5" stroke="#efc040" stroke-width="2.4" stroke-linecap="round"/><circle cx="393.7" cy="69.5" r="4" fill="url(#gLens)" stroke="#7c8290" stroke-width="1.2"/>
<rect x="393.5" y="61.5" width="12" height="7" fill="#fff" stroke="#3a5a9c"/>
<text x="399.7" y="67.4" fill="#223" font-size="6" class="ui" text-anchor="middle" font-weight="bold" letter-spacing="-0.3">100</text>
<rect x="412" y="60" width="1" height="18" fill="#a0a0a0" />
<rect x="413" y="60" width="1" height="18" fill="#ffffff" />
<g transform="translate(419,62)"><path d="M0.500 3.500h5l1-1.500h4v1.500h4.500v9.500h-14.500z" fill="url(#gGray)" stroke="#bdbdbd"/><path d="M8 9q1-4 4-4v-2.500l3.500 4-3.500 4v-2.500q-2 0-4 1z" fill="#b0b0b0"/></g>
<rect x="440" y="60" width="1" height="18" fill="#a0a0a0" />
<rect x="441" y="60" width="1" height="18" fill="#ffffff" />
<g transform="translate(447,63)"><rect x="-1" y="-1" width="17" height="14" fill="#fafafa"/><rect x="0" y="0" width="4.4" height="5" fill="#b4b4b4"/><rect x="5" y="0" width="4.4" height="5" fill="#a2a2a2"/><rect x="10" y="0" width="4.4" height="5" fill="#989898"/><rect x="0" y="6" width="4.4" height="5" fill="#9a9a9a"/><rect x="5" y="6" width="4.4" height="5" fill="#929292"/><rect x="10" y="6" width="4.4" height="5" fill="#d8d8d8"/></g>
<path d="M469.5 67h8l-4 4.5z" fill="#a4a4a4"/>
<text x="492.5" y="74.3" fill="#a6a6a6" font-size="16.5" class="ser" text-anchor="middle" font-weight="bold" >A</text>
<rect x="736" y="59" width="526" height="1" fill="#a0a0a0" />
<rect x="736" y="60" width="526" height="1" fill="#ffffff" />
<rect x="736" y="86" width="526" height="1" fill="#a0a0a0" />
<rect x="736" y="87" width="526" height="1" fill="#ffffff" />
<g transform="translate(741.8,38.4)"><path d="M0 0V12.700L3.100 9.800L5.200 14.500L7.300 13.700L5.400 8.800L9 8.500z" fill="#fdfeff" stroke="#3a5890" stroke-width="1" stroke-linejoin="round"/><path d="M0 0.500V12" stroke="#8aa8d4" stroke-width="1"/><path d="M5.200 14.500L7.300 13.700L5.400 8.800L9 8.500" fill="none" stroke="#22386a" stroke-width="1.100" stroke-linejoin="round"/></g>
<g transform="translate(760,38)"><circle cx="10.500" cy="5" r="5" fill="#d2e2f8" stroke="#5a86d0"/><rect x="0.500" y="2.500" width="9" height="9" fill="#a9c7f0" stroke="#3f70c6"/><path d="M4.500 7.500v6.200q3 1.600 6 0V7.500z" fill="url(#gPage)" stroke="#4f7fd0"/><ellipse cx="7.500" cy="7.500" rx="3" ry="1.300" fill="#f5f9ff" stroke="#4f7fd0"/></g>
<path d="M783.5 44h8l-4 4.5z" fill="#000"/>
<rect x="795" y="35" width="23" height="22" fill="url(#dither)" />
<rect x="799" y="38" width="16" height="16" fill="#f0f0f0" />
<rect x="795" y="35" width="23" height="1" fill="#a0a0a0" />
<rect x="795" y="35" width="1" height="22" fill="#a0a0a0" />
<rect x="795" y="56" width="23" height="1" fill="#ffffff" />
<rect x="817" y="35" width="1" height="22" fill="#ffffff" />
<g transform="translate(799,39.5)"><rect x="0.5" y="0.5" width="15" height="13" fill="url(#gPage)" stroke="#4a6aa8"/><path d="M1 12.5h14M14.5 1v12" stroke="#3a5488" stroke-width="1"/><path d="M1 5l3-3 3 3 3-3 3 2.500 2-1.500" fill="none" stroke="#2a5fd0" stroke-width="1.250"/></g>
<path d="M809.300 49.200l3.300 3.200" stroke="#c8881a" stroke-width="2.800" stroke-linecap="round"/><path d="M809.600 49.400l2.800 2.700" stroke="#f2c24a" stroke-width="1.300" stroke-linecap="round"/><circle cx="806.800" cy="46.600" r="3.400" fill="url(#gLens)" stroke="#7c8290" stroke-width="1"/>
<g transform="translate(821,38.5)"><rect x="0.5" y="0.5" width="15" height="13" fill="url(#gPage)" stroke="#4a6aa8"/><path d="M1 12.5h14M14.5 1v12" stroke="#3a5488" stroke-width="1"/><path d="M1 4.500l3-3 3 3.500 3-3.500 2 2 3-1.500" fill="none" stroke="#3b6fd0" stroke-width="1.100"/><path d="M4.500 1v8M11.500 1v8" stroke="#111" stroke-dasharray="1 1" shape-rendering="crispEdges"/><path d="M2 10.500h12M2 12.500h12" stroke="#3a5a98" stroke-dasharray="3 1" shape-rendering="crispEdges"/></g>
<g transform="translate(844,38.5)"><rect x="0.5" y="0.5" width="15" height="13" fill="url(#gPage)" stroke="#4a6aa8"/><path d="M1 12.5h14M14.5 1v12" stroke="#3a5488" stroke-width="1"/><path d="M2 12q8-1.500 11.500-9.500" fill="none" stroke="#f08a1c" stroke-width="1.300"/><path d="M2 3h11" stroke="#2d62d8" stroke-width="1.100"/><path d="M1 3l3-2.200v4.400zM14.500 3l-3-2.200v4.400z" fill="#2d62d8"/></g>
<g transform="translate(867,38.5)"><rect x="0.5" y="0.5" width="15" height="13" fill="url(#gPage)" stroke="#4a6aa8"/><path d="M1 12.5h14M14.5 1v12" stroke="#3a5488" stroke-width="1"/><path d="M2 12q8-1.500 11.500-9.500" fill="none" stroke="#f08a1c" stroke-width="1.300"/><path d="M4 2v10" stroke="#2d62d8" stroke-width="1.100"/><path d="M4 0.500l-2.400 3.200h4.800zM4 13.500l-2.400-3.200h4.800z" fill="#2d62d8"/></g>
<g transform="translate(890,38.5)"><rect x="0.5" y="0.5" width="15" height="13" fill="url(#gPage)" stroke="#4a6aa8"/><path d="M1 12.5h14M14.5 1v12" stroke="#3a5488" stroke-width="1"/><path d="M2 12q8-1.500 11.500-9.500" fill="none" stroke="#f08a1c" stroke-width="1.300"/><path d="M2.500 2l4.500 4.500" stroke="#2d62d8" stroke-width="1.100"/><path d="M8.500 8l-4-.800 3.200-3.200z" fill="#2d62d8"/></g>
<g transform="translate(913,38.5)"><rect x="0.5" y="0.5" width="15" height="13" fill="url(#gPage)" stroke="#4a6aa8"/><path d="M1 12.5h14M14.5 1v12" stroke="#3a5488" stroke-width="1"/><path d="M2 12q8-1.500 11.500-9.500" fill="none" stroke="#f08a1c" stroke-width="1.300"/></g>
<text x="920.3" y="49.5" fill="#000" font-size="12.5" class="ser" text-anchor="middle" font-weight="normal" font-style="italic" letter-spacing="-0.300">fx</text>
<text x="944" y="51.6" fill="#000" font-size="19" class="ser" text-anchor="middle" font-weight="bold" stroke="#000" stroke-width="0.9">T</text>
<rect x="958" y="37" width="1" height="18" fill="#a0a0a0" />
<rect x="959" y="37" width="1" height="18" fill="#ffffff" />
<g transform="translate(964,38.5)"><rect x="1.500" y="4.500" width="11" height="10" fill="url(#gPage)" stroke="#b4c2dc"/><path d="M12.500 5v10M1.500 14.500h11.500" stroke="#4a525c"/><rect x="2" y="5" width="10" height="2.500" fill="#7aa4ee"/><path d="M3.500 10.500h2M7 10.500h4.500M3.500 12.500h2M7 12.500h4.500" stroke="#8fa8d4" stroke-width="1"/><path d="M8.500 2q.5-1.200 2-1.200h3.500l1.500 .600v5.400l-1.500 .600h-3.500l-2.500 1.500-4-3.500 3-3z" fill="url(#gGold)" stroke="#9a6c10" stroke-width="0.500"/><rect x="15" y="1" width="2" height="7" fill="#2fa23a"/><path d="M5 4.500l3.500 3.500M6.200 3.300l3.800 3.800M7.500 2.300l3.500 3.500M4 5.500l3 3" stroke="#7a5a14" stroke-width="0.600" stroke-dasharray="0.800 0.800"/><path d="M4.500 5l3.500-3.500M5.500 6l3.500-3.500M6.500 7l3.500-3.500" stroke="#fff2a8" stroke-width="0.600"/></g>
<rect x="986" y="37" width="1" height="18" fill="#a0a0a0" />
<rect x="987" y="37" width="1" height="18" fill="#ffffff" />
<path d="M997 39.800v11.400l6.600-5.700z" fill="#2c8a2c" stroke="#1f6a1f" stroke-width="0.500"/>
<rect x="1019.500" y="41.500" width="8" height="8" fill="url(#gGray)" stroke="#c4c4c4"/>
<rect x="1043.200" y="41.200" width="2.800" height="8.400" fill="#d0d0d0" stroke="#b8b8b8" stroke-width="0.600"/><rect x="1047.400" y="41.200" width="2.800" height="8.400" fill="#d0d0d0" stroke="#b8b8b8" stroke-width="0.600"/>
<rect x="1060" y="37" width="1" height="18" fill="#a0a0a0" />
<rect x="1061" y="37" width="1" height="18" fill="#ffffff" />
<g transform="translate(1066,38.5)"><rect x="0.500" y="0.500" width="15" height="13" fill="#f1ede3" stroke="#a4a4a4"/><path d="M8.500 1v12M1 7.500h14" stroke="#c4c0b6"/><path d="M2 13q3-1 5-5.500t7-6" fill="none" stroke="#d04848" stroke-width="1.600"/><rect x="2.500" y="10" width="3" height="3" fill="#d04848"/><rect x="6" y="5.500" width="3" height="3" fill="#d04848"/><rect x="10.500" y="1.500" width="3" height="3" fill="#d04848"/></g>
<g transform="translate(1089,38.5)"><rect x="0.500" y="0.500" width="15" height="13" fill="#f1ede3" stroke="#a4a4a4"/><path d="M8.500 1v12M1 7.500h14" stroke="#c4c0b6"/><path d="M2 13l12-12" fill="none" stroke="#d04848" stroke-width="1.400"/><rect x="3.500" y="8.500" width="3.500" height="3.500" fill="#fff" stroke="#d04848"/><rect x="9" y="3" width="3.500" height="3.500" fill="#fff" stroke="#d04848"/></g>
<rect x="1111" y="37" width="1" height="18" fill="#a0a0a0" />
<rect x="1112" y="37" width="1" height="18" fill="#ffffff" />
<g transform="translate(1117,39.5)"><rect x="0.500" y="0.500" width="14" height="12" fill="#f6f2fb" stroke="#4a6aa8"/><rect x="3" y="2.500" width="9" height="8" fill="#fdf8ff" stroke="#f0901c" stroke-width="1.600" stroke-dasharray="1.500 0.700"/></g>
<g transform="translate(1140,39.5)"><rect x="0.500" y="0.500" width="14" height="12" fill="#f6f2fb" stroke="#4a6aa8"/><path d="M3 4h3.400M4.700 2.300v3.400M8.600 4h3.400M10.300 2.300v3.400M3 9h3.400M4.700 7.300v3.400M8.600 9h3.400M10.300 7.300v3.400" stroke="#f0901c" stroke-width="1.200"/></g>
<rect x="1162" y="37" width="1" height="18" fill="#a0a0a0" />
<rect x="1163" y="37" width="1" height="18" fill="#ffffff" />
<rect x="1165" y="35" width="23" height="22" fill="url(#dither)" />
<rect x="1169" y="38" width="16" height="16" fill="#f0f0f0" />
<rect x="1165" y="35" width="23" height="1" fill="#a0a0a0" />
<rect x="1165" y="35" width="1" height="22" fill="#a0a0a0" />
<rect x="1165" y="56" width="23" height="1" fill="#ffffff" />
<rect x="1187" y="35" width="1" height="22" fill="#ffffff" />
<rect x="1188" y="35" width="23" height="22" fill="url(#dither)" />
<rect x="1192" y="38" width="16" height="16" fill="#f0f0f0" />
<rect x="1188" y="35" width="23" height="1" fill="#a0a0a0" />
<rect x="1188" y="35" width="1" height="22" fill="#a0a0a0" />
<rect x="1188" y="56" width="23" height="1" fill="#ffffff" />
<rect x="1210" y="35" width="1" height="22" fill="#ffffff" />
<rect x="1211" y="35" width="23" height="22" fill="url(#dither)" />
<rect x="1215" y="38" width="16" height="16" fill="#f0f0f0" />
<rect x="1211" y="35" width="23" height="1" fill="#a0a0a0" />
<rect x="1211" y="35" width="1" height="22" fill="#a0a0a0" />
<rect x="1211" y="56" width="23" height="1" fill="#ffffff" />
<rect x="1233" y="35" width="1" height="22" fill="#ffffff" />
<g transform="translate(1169,40)"><rect x="0.500" y="0.500" width="14" height="12" fill="#fff" stroke="#46629c"/><path d="M0.500 13.500h14.500" stroke="#9fb0cf"/><path d="M3.500 2v9M6.500 2v9M9.500 2v9M12.500 2v9" stroke="#f0901c" stroke-width="1.100"/></g>
<g transform="translate(1192,40)"><rect x="0.500" y="0.500" width="14" height="12" fill="#fff" stroke="#46629c"/><path d="M0.500 13.500h14.500" stroke="#9fb0cf"/><path d="M3.500 2.500h9.500M3.500 4.500h9.500M3.500 6.500h9.500M3.500 8.500h9.500M3.500 10.500h9.500" stroke="#f0901c" stroke-width="1"/></g>
<g transform="translate(1215,40)"><rect x="0.500" y="0.500" width="14" height="12" fill="#fff" stroke="#46629c"/><path d="M0.500 13.500h14.500" stroke="#9fb0cf"/><path d="M5.500 2v9M8.500 2v9M11.500 2v9" stroke="#f0901c" stroke-width="1.200"/></g>
<g transform="translate(1237,39)"><rect x="0.500" y="0.500" width="14" height="12" fill="#fff" stroke="#46629c"/><path d="M0.500 13.500h14.500" stroke="#9fb0cf"/><path d="M6.500 2v9M11.500 2v9" stroke="#f0901c" stroke-width="1.200"/></g>
<rect x="1259" y="37" width="1" height="18" fill="#a0a0a0" />
<rect x="1260" y="37" width="1" height="18" fill="#ffffff" />
<rect x="734" y="62" width="23" height="22" fill="url(#dither)" />
<rect x="738" y="65" width="16" height="16" fill="#f0f0f0" />
<rect x="734" y="62" width="23" height="1" fill="#a0a0a0" />
<rect x="734" y="62" width="1" height="22" fill="#a0a0a0" />
<rect x="734" y="83" width="23" height="1" fill="#ffffff" />
<rect x="756" y="62" width="1" height="22" fill="#ffffff" />
<g transform="translate(738,67)"><rect x="0.500" y="0.500" width="14" height="13" fill="#fff" stroke="#7b9bd4"/><path d="M1 12.500h13" stroke="#b9c9e6"/><path d="M2.500 7.500h10.500" stroke="#000" stroke-width="1.200"/></g>
<g transform="translate(760,66)"><rect x="0.500" y="0.500" width="14" height="13" fill="#fff" stroke="#7b9bd4"/><path d="M1 12.500h13" stroke="#b9c9e6"/><path d="M2 6.500h11M7.500 2v10" stroke="#000" stroke-width="1" stroke-dasharray="1 1" shape-rendering="crispEdges"/></g>
<rect x="782" y="64" width="1" height="18" fill="#a0a0a0" />
<rect x="783" y="64" width="1" height="18" fill="#ffffff" />
<path d="M799.8 79.1L802.4 76.5L803.2 79.7z" fill="#e89a18" stroke="#e89a18" stroke-width="0.8" stroke-linejoin="round"/><circle cx="795.3" cy="72" r="7" fill="url(#gLens)" stroke="#7c8290" stroke-width="1.2"/>
<text x="795.3" y="75.3" fill="#000" font-size="11" class="ser" text-anchor="middle" font-weight="bold" >x</text>
<path d="M822.9 79.1L825.5 76.5L826.3 79.7z" fill="#e89a18" stroke="#e89a18" stroke-width="0.8" stroke-linejoin="round"/><circle cx="818.4" cy="72" r="7" fill="url(#gLens)" stroke="#7c8290" stroke-width="1.2"/>
<text x="818.4" y="75.3" fill="#000" font-size="11" class="ser" text-anchor="middle" font-weight="bold" >y</text>
<path d="M846.0 79.1L848.6 76.5L849.4 79.7z" fill="#e89a18" stroke="#e89a18" stroke-width="0.8" stroke-linejoin="round"/><circle cx="841.5" cy="72" r="7" fill="url(#gLens)" stroke="#7c8290" stroke-width="1.2"/>
<text x="841.5" y="75.3" fill="#000" font-size="11" class="ser" text-anchor="middle" font-weight="bold" font-style="italic" letter-spacing="-0.500">fx</text>
<path d="M869.0 79.1L871.6 76.5L872.4 79.7z" fill="#c8c8c8" stroke="#c8c8c8" stroke-width="0.8" stroke-linejoin="round"/><circle cx="864.5" cy="72" r="7" fill="#fafafa" stroke="#a2a2a2" stroke-width="1.2"/>
<path d="M860.500 69.500h8M860.500 72h8M860.500 74.500h8" stroke="#8c8c8c" stroke-width="1.100"/>
<rect x="879" y="64" width="1" height="18" fill="#a0a0a0" />
<rect x="880" y="64" width="1" height="18" fill="#ffffff" />
<g transform="translate(885,68.5)"><rect x="0.500" y="0.500" width="13" height="10.500" fill="#fff" stroke="#4d7ad0"/><rect x="1" y="1" width="12" height="2.500" fill="#7ea6ea"/><path d="M1 6h12M1 8.500h12M5 3.500v7.500M9.500 3.500v7.500" stroke="#6d96e0" stroke-width="0.900"/></g>
<path d="M891.800 70.200l5.400-5.300q2.200-.900 3.600 1.300 .600 1.300-.400 2.300l-5.300 5.200q-2.500-.300-3.300-3.500z" fill="#fdfdff" stroke="#7f9cd2" stroke-width="0.900"/>
<rect x="907" y="64" width="1" height="18" fill="#a0a0a0" />
<rect x="908" y="64" width="1" height="18" fill="#ffffff" />
<rect x="910" y="62" width="23" height="22" fill="url(#dither)" />
<rect x="914" y="65" width="16" height="16" fill="#f0f0f0" />
<rect x="910" y="62" width="23" height="1" fill="#a0a0a0" />
<rect x="910" y="62" width="1" height="22" fill="#a0a0a0" />
<rect x="910" y="83" width="23" height="1" fill="#ffffff" />
<rect x="932" y="62" width="1" height="22" fill="#ffffff" />
<g transform="translate(914.5,67)"><path d="M0.500 0v13" stroke="#8a8a8a"/><path d="M0 0.500h16M0 12.500h16" stroke="#9a9a9a"/><path d="M1 6.500h14" stroke="#0a8a0a" stroke-width="1.300"/><rect x="1" y="5" width="3" height="3" fill="#0a8a0a"/><rect x="12.500" y="5" width="3" height="3" fill="#0a8a0a"/><rect x="7" y="5.500" width="2" height="2" fill="#0a8a0a"/><path d="M8.500 1v11" stroke="#000" stroke-dasharray="2 1" shape-rendering="crispEdges"/></g>
<g transform="translate(936.5,66)"><path d="M0.500 0v13" stroke="#8a8a8a"/><path d="M0 0.500h16M0 12.500h16" stroke="#9a9a9a"/><path d="M1 6.500h14" stroke="#0a8a0a" stroke-width="1.300"/><rect x="1" y="5" width="3" height="3" fill="#0a8a0a"/><rect x="12.500" y="5" width="3" height="3" fill="#0a8a0a"/><rect x="7" y="5.500" width="2" height="2" fill="#0a8a0a"/><path d="M8.500 1v11" stroke="#000" stroke-dasharray="2 1" shape-rendering="crispEdges"/></g>
<g transform="translate(959,66)"><rect x="0" y="0" width="16" height="13" fill="#fff"/><path d="M0 0.5h16M0 12.5h16" stroke="#8a8a8a"/><path d="M0.5 0v13" stroke="#8a8a8a"/><path d="M2 12q2-10 6-10t6 10" fill="none" stroke="#008000" stroke-width="1.150"/><path d="M8.5 1v11" stroke="#000" stroke-dasharray="2 1" shape-rendering="crispEdges"/></g>
<g transform="translate(982,66)"><rect x="0" y="0" width="16" height="13" fill="#fff"/><path d="M0 0.5h16M0 12.5h16" stroke="#8a8a8a"/><path d="M0.5 0v13" stroke="#8a8a8a"/><path d="M2 1q2 10 6 10t6-10" fill="none" stroke="#008000" stroke-width="1.150"/><path d="M8.5 1v11" stroke="#000" stroke-dasharray="2 1" shape-rendering="crispEdges"/></g>
<g transform="translate(1005,66)"><rect x="0" y="0" width="16" height="13" fill="#fff"/><path d="M0 0.5h16M0 12.5h16" stroke="#8a8a8a"/><path d="M0.5 0v13" stroke="#8a8a8a"/><path d="M1 8q2 4 3.500 2t3-6 3.500-2 4 8" fill="none" stroke="#008000" stroke-width="1.150"/><path d="M11.5 1v11" stroke="#000" stroke-dasharray="2 1" shape-rendering="crispEdges"/></g>
<g transform="translate(1028,66)"><rect x="0" y="0" width="16" height="13" fill="#fff"/><path d="M0 0.5h16M0 12.5h16" stroke="#8a8a8a"/><path d="M0.5 0v13" stroke="#8a8a8a"/><path d="M1 4l2.500-2.500q2 0 3.500 3t4 6.500 4-8" fill="none" stroke="#008000" stroke-width="1.150"/><path d="M11.5 1v11" stroke="#000" stroke-dasharray="2 1" shape-rendering="crispEdges"/></g>
<g transform="translate(1051,66)"><rect x="0" y="0" width="16" height="13" fill="#fff"/><path d="M0 0.5h16M0 12.5h16" stroke="#8a8a8a"/><path d="M0.5 0v13" stroke="#8a8a8a"/><path d="M1 12h2l9-10h3" fill="none" stroke="#008000" stroke-width="1.150"/><path d="M7.5 1v11" stroke="#000" stroke-dasharray="2 1" shape-rendering="crispEdges"/></g>
<g transform="translate(1074,66)"><rect x="0" y="0" width="16" height="13" fill="#fff"/><path d="M0 0.5h16M0 12.5h16" stroke="#8a8a8a"/><path d="M0.5 0v13" stroke="#8a8a8a"/><path d="M1 9l4-6.500 4 3 3-1.500 3 3M3 12l5-7 3 5.500" fill="none" stroke="#008000" stroke-width="1.150"/><path d="M4.5 1v11" stroke="#000" stroke-dasharray="2 1" shape-rendering="crispEdges"/></g>
<g transform="translate(1097,66)"><rect x="0" y="0" width="16" height="13" fill="#fff"/><path d="M0 0.5h16M0 12.5h16" stroke="#8a8a8a"/><path d="M0.5 0v13" stroke="#8a8a8a"/><path d="M1 3l5 7 5-8M3 1l5 7h3l4-3" fill="none" stroke="#008000" stroke-width="1.150"/><path d="M4.5 1v11" stroke="#000" stroke-dasharray="2 1" shape-rendering="crispEdges"/></g>
<g transform="translate(1120,66)"><rect x="0" y="0" width="16" height="13" fill="#fff"/><path d="M0 0.5h16M0 12.5h16" stroke="#8a8a8a"/><path d="M0.5 0v13" stroke="#8a8a8a"/><path d="M1 1q7 5 14 0M1 4.500q7 5 14 0M1 8q7 5 14 0" fill="none" stroke="#008000" stroke-width="1.150"/><path d="M8.5 1v11" stroke="#000" stroke-dasharray="2 1" shape-rendering="crispEdges"/><rect x="6.500" y="10.500" width="3" height="2" fill="#000"/></g>
<g transform="translate(1143,66)"><rect x="0" y="0" width="16" height="13" fill="#fff"/><path d="M0 0.5h16M0 12.5h16" stroke="#8a8a8a"/><path d="M0.5 0v13" stroke="#8a8a8a"/><path d="M1 5q7-5 14 0M1 8.500q7-5 14 0M1 12q7-5 14 0" fill="none" stroke="#008000" stroke-width="1.150"/><path d="M8.5 1v11" stroke="#000" stroke-dasharray="2 1" shape-rendering="crispEdges"/><rect x="6.500" y="0.500" width="3" height="2" fill="#000"/></g>
<rect x="1165" y="64" width="1" height="18" fill="#a0a0a0" />
<rect x="1166" y="64" width="1" height="18" fill="#ffffff" />
<g transform="translate(1171,65)"><rect x="0.500" y="1.500" width="11" height="11.500" rx="1" fill="url(#gGold)" stroke="#a07c18"/><rect x="3.500" y="0.500" width="5" height="2.500" fill="#e8e0c0" stroke="#8a7a40" stroke-width="0.700"/><rect x="5.500" y="6.500" width="10.500" height="8" fill="#fff" stroke="#4a6aa8"/><path d="M7 9.500l1.200 1.200 1.300-1.400 1.300 1.400 1.300-1.400 1.300 1.400 1-1" fill="none" stroke="#e02020" stroke-width="0.900"/><path d="M7 12.500h7.500" stroke="#4d7ad0" stroke-width="0.900"/></g>
<path d="M1194.5 70.8h8l-4 4.5z" fill="#000"/>
<rect x="1208" y="64" width="1" height="18" fill="#a0a0a0" />
<rect x="1209" y="64" width="1" height="18" fill="#ffffff" />
<g transform="translate(1216,66)"><rect x="0.500" y="0.500" width="11.500" height="12" fill="#fff" stroke="#4d7ad0"/><rect x="1" y="1" width="10.500" height="2.300" fill="#5b8ae8"/><path d="M2.500 5.500h7.500M2.500 7.500h7.500M2.500 9.500h7.500M2.500 11h5" stroke="#8a8a8a" stroke-width="0.900"/></g>
<rect x="1236" y="64" width="1" height="18" fill="#a0a0a0" />
<rect x="1237" y="64" width="1" height="18" fill="#ffffff" />
<g transform="translate(1242,65)"><rect x="0.500" y="1.500" width="11" height="11.500" rx="1" fill="url(#gGold)" stroke="#a07c18"/><rect x="3.500" y="0.500" width="5" height="2.500" fill="#e8e0c0" stroke="#8a7a40" stroke-width="0.700"/><rect x="3.500" y="6.500" width="12.500" height="8" fill="#fff" stroke="#7088b8"/></g>
<text x="1251.8" y="78.5" fill="#000" font-size="7.5" class="ser" text-anchor="middle" font-weight="normal" letter-spacing="-0.200" stroke="#000" stroke-width="0.250">123</text>
<rect x="734" y="89" width="23" height="22" fill="url(#dither)" />
<rect x="738" y="92" width="16" height="16" fill="#f0f0f0" />
<rect x="734" y="89" width="23" height="1" fill="#a0a0a0" />
<rect x="734" y="89" width="1" height="22" fill="#a0a0a0" />
<rect x="734" y="110" width="23" height="1" fill="#ffffff" />
<rect x="756" y="89" width="1" height="22" fill="#ffffff" />
<rect x="757" y="89" width="23" height="22" fill="url(#dither)" />
<rect x="761" y="92" width="16" height="16" fill="#f0f0f0" />
<rect x="757" y="89" width="23" height="1" fill="#a0a0a0" />
<rect x="757" y="89" width="1" height="22" fill="#a0a0a0" />
<rect x="757" y="110" width="23" height="1" fill="#ffffff" />
<rect x="779" y="89" width="1" height="22" fill="#ffffff" />
<g transform="translate(738.5,93)"><path d="M1 1.5h13" stroke="#000"/><path d="M0 1.5l2.500-2v4zM15 1.5l-2.500-2v4z" fill="#000"/><path d="M1 7.5h13" stroke="#000"/><path d="M0 7.5l2.500-2v4zM15 7.5l-2.500-2v4z" fill="#000"/><path d="M1 13.5h13" stroke="#000"/><path d="M0 13.5l2.500-2v4zM15 13.5l-2.500-2v4z" fill="#000"/><rect x="4" y="4" width="7.500" height="7" fill="#e6eefb" stroke="#5a7fc8"/><path d="M5 9.5l2-2 1.500 1 2.500-3" fill="none" stroke="#e02828" stroke-width="1"/></g>
<g transform="translate(761,93)"><path d="M1.5 1v13" stroke="#000"/><path d="M1.5 0l-2 2.500h4zM1.5 15l-2-2.500h4z" fill="#000"/><path d="M7.5 1v13" stroke="#000"/><path d="M7.5 0l-2 2.500h4zM7.5 15l-2-2.500h4z" fill="#000"/><path d="M13.5 1v13" stroke="#000"/><path d="M13.5 0l-2 2.500h4zM13.5 15l-2-2.500h4z" fill="#000"/><rect x="3.5" y="4" width="7.500" height="7" fill="#e6eefb" stroke="#5a7fc8"/><path d="M4.5 9.5l2-2 1.500 1 2.500-3" fill="none" stroke="#e02828" stroke-width="1"/></g>
<rect x="782" y="91" width="1" height="18" fill="#a0a0a0" />
<rect x="783" y="91" width="1" height="18" fill="#ffffff" />
<path d="M797.8 101.8L801.4 105.2" stroke="#a87808" stroke-width="4.2" stroke-linecap="round"/><path d="M798.1 101.9L801.3 104.9" stroke="#efc040" stroke-width="2.4" stroke-linecap="round"/><circle cx="794" cy="98" r="5.3" fill="url(#gLens)" stroke="#7c8290" stroke-width="1.2"/><path d="M790.8 98h6.4M794 94.8v6.4" stroke="#2f55a4" stroke-width="2"/>
<path d="M820.8 101.8L824.4 105.2" stroke="#a87808" stroke-width="4.2" stroke-linecap="round"/><path d="M821.1 101.9L824.3 104.9" stroke="#efc040" stroke-width="2.4" stroke-linecap="round"/><circle cx="817" cy="98" r="5.3" fill="url(#gLens)" stroke="#7c8290" stroke-width="1.2"/><path d="M813.8 98h6.4" stroke="#2f55a4" stroke-width="2"/>
<path d="M840.9 103.7L844.5 107.1" stroke="#a87808" stroke-width="4.2" stroke-linecap="round"/><path d="M841.2 103.8L844.4 106.8" stroke="#efc040" stroke-width="2.4" stroke-linecap="round"/><circle cx="838" cy="100.8" r="4" fill="url(#gLens)" stroke="#7c8290" stroke-width="1.2"/>
<rect x="838.5" y="93.0" width="12" height="7" fill="#fff" stroke="#3a5a9c"/>
<text x="844.7" y="98.9" fill="#223" font-size="6" class="ui" text-anchor="middle" font-weight="bold" letter-spacing="-0.3">100</text>
<rect x="856" y="91" width="1" height="18" fill="#a0a0a0" />
<rect x="857" y="91" width="1" height="18" fill="#ffffff" />
<g transform="translate(863,94)"><rect x="-1" y="-1" width="17" height="14" fill="#fafafa"/><rect x="0" y="0" width="4.4" height="5" fill="#b4b4b4"/><rect x="5" y="0" width="4.4" height="5" fill="#a2a2a2"/><rect x="10" y="0" width="4.4" height="5" fill="#989898"/><rect x="0" y="6" width="4.4" height="5" fill="#9a9a9a"/><rect x="5" y="6" width="4.4" height="5" fill="#929292"/><rect x="10" y="6" width="4.4" height="5" fill="#d8d8d8"/></g>
<path d="M885.5 98h8l-4 4.5z" fill="#a4a4a4"/>
<text x="908.5" y="105" fill="#2d4c9c" font-size="16" class="ser" text-anchor="middle" font-weight="bold" >A</text>
<rect x="922" y="91" width="1" height="18" fill="#a0a0a0" />
<rect x="923" y="91" width="1" height="18" fill="#ffffff" />
<g transform="translate(928,92.5)"><rect x="0.5" y="0.5" width="8" height="8" fill="url(#gGray)" stroke="#bdbdbd"/><rect x="3.5" y="3.5" width="9" height="9" fill="url(#gGray)" stroke="#b0b0b0"/><rect x="9" y="9" width="6" height="6" fill="url(#gGray)" stroke="#a8a8a8"/><rect x="4" y="4" width="8" height="8" fill="url(#gGray)"/></g>
<g transform="translate(951,92.5)"><rect x="0.5" y="0.5" width="5" height="5" fill="url(#gGray)" stroke="#bdbdbd"/><rect x="3.5" y="3.5" width="7" height="7" fill="url(#gGray)" stroke="#b8b8b8"/><rect x="8.5" y="8.5" width="6" height="6" fill="url(#gGray)" stroke="#a8a8a8"/></g>
</g>
<g id="schematic">
<rect x="123" y="93" width="337" height="1" fill="#008000" />
<rect x="123" y="93" width="1" height="81" fill="#008000" />
<rect x="123" y="221" width="1" height="105" fill="#008000" />
<rect x="459" y="93" width="1" height="33" fill="#008000" />
<rect x="459" y="173" width="1" height="17" fill="#008000" />
<rect x="435" y="93" width="1" height="49" fill="#008000" />
<rect x="435" y="189" width="1" height="113" fill="#008000" />
<rect x="227" y="117" width="89" height="1" fill="#008000" />
<rect x="363" y="117" width="9" height="1" fill="#008000" />
<rect x="371" y="117" width="1" height="121" fill="#008000" />
<rect x="227" y="117" width="1" height="129" fill="#008000" />
<rect x="227" y="149" width="25" height="1" fill="#008000" />
<rect x="299" y="149" width="73" height="1" fill="#008000" />
<rect x="227" y="197" width="25" height="1" fill="#008000" />
<rect x="299" y="197" width="17" height="1" fill="#008000" />
<rect x="363" y="197" width="9" height="1" fill="#008000" />
<rect x="227" y="237" width="25" height="1" fill="#008000" />
<rect x="299" y="237" width="17" height="1" fill="#008000" />
<rect x="363" y="237" width="17" height="1" fill="#008000" />
<rect x="427" y="237" width="33" height="1" fill="#008000" />
<rect x="459" y="237" width="1" height="9" fill="#008000" />
<rect x="459" y="293" width="1" height="25" fill="#008000" />
<rect x="459" y="365" width="1" height="17" fill="#008000" />
<rect x="307" y="237" width="1" height="33" fill="#008000" />
<rect x="307" y="317" width="1" height="57" fill="#008000" />
<rect x="59" y="269" width="9" height="1" fill="#008000" />
<rect x="115" y="269" width="89" height="1" fill="#008000" />
<rect x="59" y="269" width="1" height="9" fill="#008000" />
<rect x="59" y="325" width="1" height="145" fill="#008000" />
<rect x="59" y="517" width="1" height="9" fill="#008000" />
<rect x="147" y="269" width="1" height="9" fill="#008000" />
<rect x="187" y="269" width="1" height="9" fill="#008000" />
<rect x="187" y="325" width="225" height="1" fill="#008000" />
<rect x="123" y="325" width="25" height="1" fill="#008000" />
<rect x="227" y="293" width="1" height="33" fill="#008000" />
<rect x="123" y="373" width="337" height="1" fill="#008000" />
<rect x="435" y="349" width="1" height="25" fill="#008000" />
<rect x="59" y="413" width="9" height="1" fill="#008000" />
<rect x="115" y="413" width="17" height="1" fill="#008000" />
<rect x="179" y="413" width="33" height="1" fill="#008000" />
<rect x="59" y="453" width="9" height="1" fill="#008000" />
<rect x="115" y="453" width="17" height="1" fill="#008000" />
<rect x="179" y="453" width="9" height="1" fill="#008000" />
<rect x="187" y="413" width="1" height="41" fill="#008000" />
<rect x="123" y="413" width="1" height="41" fill="#008000" />
<rect x="259" y="405" width="321" height="1" fill="#008000" />
<rect x="579" y="405" width="1" height="184" fill="#008000" />
<rect x="259" y="421" width="49" height="1" fill="#008000" />
<rect x="307" y="421" width="1" height="25" fill="#008000" />
<rect x="123" y="173" width="1" height="13" fill="#0000ff" />
<rect x="123" y="209" width="1" height="13" fill="#0000ff" />
<rect x="119.5" y="185.5" width="8" height="24" fill="#fff" stroke="#0000ff" stroke-width="1"/>
<rect x="122" y="204" width="1" height="2" fill="#0000ff" />
<rect x="435" y="141" width="1" height="13" fill="#0000ff" />
<rect x="435" y="177" width="1" height="13" fill="#0000ff" />
<rect x="431.5" y="153.5" width="8" height="24" fill="#fff" stroke="#0000ff" stroke-width="1"/>
<rect x="434" y="172" width="1" height="2" fill="#0000ff" />
<rect x="315" y="117" width="13" height="1" fill="#0000ff" />
<rect x="351" y="117" width="13" height="1" fill="#0000ff" />
<rect x="327.5" y="113.5" width="24" height="8" fill="#fff" stroke="#0000ff" stroke-width="1"/>
<rect x="346" y="116" width="1" height="2" fill="#0000ff" />
<rect x="251" y="149" width="23" height="1" fill="#0000ff" />
<rect x="277" y="149" width="23" height="1" fill="#0000ff" />
<rect x="273" y="141" width="1" height="17" fill="#0000ff" />
<rect x="277" y="141" width="1" height="17" fill="#0000ff" />
<rect x="280" y="142" width="1" height="2" fill="#0000ff" />
<rect x="251" y="197" width="23" height="1" fill="#0000ff" />
<rect x="277" y="197" width="23" height="1" fill="#0000ff" />
<rect x="273" y="189" width="1" height="17" fill="#0000ff" />
<rect x="277" y="189" width="1" height="17" fill="#0000ff" />
<rect x="280" y="190" width="1" height="2" fill="#0000ff" />
<rect x="315" y="197" width="13" height="1" fill="#0000ff" />
<rect x="351" y="197" width="13" height="1" fill="#0000ff" />
<rect x="327.5" y="193.5" width="24" height="8" fill="#fff" stroke="#0000ff" stroke-width="1"/>
<rect x="346" y="196" width="1" height="2" fill="#0000ff" />
<rect x="251" y="237" width="13" height="1" fill="#0000ff" />
<rect x="287" y="237" width="13" height="1" fill="#0000ff" />
<rect x="263.5" y="233.5" width="24" height="8" fill="#fff" stroke="#0000ff" stroke-width="1"/>
<rect x="282" y="236" width="1" height="2" fill="#0000ff" />
<rect x="315" y="237" width="13" height="1" fill="#0000ff" />
<rect x="351" y="237" width="13" height="1" fill="#0000ff" />
<rect x="327.5" y="233.5" width="24" height="8" fill="#fff" stroke="#0000ff" stroke-width="1"/>
<rect x="346" y="236" width="1" height="2" fill="#0000ff" />
<rect x="459" y="245" width="1" height="23" fill="#0000ff" />
<rect x="459" y="271" width="1" height="23" fill="#0000ff" />
<rect x="451" y="267" width="17" height="1" fill="#0000ff" />
<rect x="451" y="271" width="17" height="1" fill="#0000ff" />
<rect x="452" y="262" width="1" height="2" fill="#0000ff" />
<rect x="459" y="317" width="1" height="13" fill="#0000ff" />
<rect x="459" y="353" width="1" height="13" fill="#0000ff" />
<rect x="455.5" y="329.5" width="8" height="24" fill="#fff" stroke="#0000ff" stroke-width="1"/>
<rect x="458" y="332" width="1" height="2" fill="#0000ff" />
<rect x="307" y="269" width="1" height="23" fill="#0000ff" />
<rect x="307" y="295" width="1" height="23" fill="#0000ff" />
<rect x="299" y="291" width="17" height="1" fill="#0000ff" />
<rect x="299" y="295" width="17" height="1" fill="#0000ff" />
<rect x="300" y="286" width="1" height="2" fill="#0000ff" />
<rect x="67" y="269" width="23" height="1" fill="#0000ff" />
<rect x="93" y="269" width="23" height="1" fill="#0000ff" />
<rect x="89" y="261" width="1" height="17" fill="#0000ff" />
<rect x="93" y="261" width="1" height="17" fill="#0000ff" />
<rect x="96" y="262" width="1" height="2" fill="#0000ff" />
<rect x="59" y="277" width="1" height="13" fill="#0000ff" />
<rect x="59" y="313" width="1" height="13" fill="#0000ff" />
<rect x="55.5" y="289.5" width="8" height="24" fill="#fff" stroke="#0000ff" stroke-width="1"/>
<rect x="58" y="308" width="1" height="2" fill="#0000ff" />
<rect x="147" y="277" width="1" height="13" fill="#0000ff" />
<rect x="147" y="313" width="1" height="13" fill="#0000ff" />
<rect x="143.5" y="289.5" width="8" height="24" fill="#fff" stroke="#0000ff" stroke-width="1"/>
<rect x="146" y="308" width="1" height="2" fill="#0000ff" />
<rect x="187" y="277" width="1" height="23" fill="#0000ff" />
<rect x="187" y="303" width="1" height="23" fill="#0000ff" />
<rect x="179" y="299" width="17" height="1" fill="#0000ff" />
<rect x="179" y="303" width="17" height="1" fill="#0000ff" />
<rect x="180" y="294" width="1" height="2" fill="#0000ff" />
<rect x="123" y="325" width="1" height="13" fill="#0000ff" />
<rect x="123" y="361" width="1" height="13" fill="#0000ff" />
<rect x="119.5" y="337.5" width="8" height="24" fill="#fff" stroke="#0000ff" stroke-width="1"/>
<rect x="122" y="356" width="1" height="2" fill="#0000ff" />
<rect x="147" y="325" width="1" height="23" fill="#0000ff" />
<rect x="147" y="351" width="1" height="23" fill="#0000ff" />
<rect x="139" y="347" width="17" height="1" fill="#0000ff" />
<rect x="139" y="351" width="17" height="1" fill="#0000ff" />
<rect x="140" y="342" width="1" height="2" fill="#0000ff" />
<rect x="227" y="325" width="1" height="13" fill="#0000ff" />
<rect x="227" y="361" width="1" height="13" fill="#0000ff" />
<rect x="223.5" y="337.5" width="8" height="24" fill="#fff" stroke="#0000ff" stroke-width="1"/>
<rect x="226" y="356" width="1" height="2" fill="#0000ff" />
<rect x="67" y="413" width="13" height="1" fill="#0000ff" />
<rect x="103" y="413" width="13" height="1" fill="#0000ff" />
<rect x="79.5" y="409.5" width="24" height="8" fill="#fff" stroke="#0000ff" stroke-width="1"/>
<rect x="98" y="412" width="1" height="2" fill="#0000ff" />
<rect x="131" y="413" width="13" height="1" fill="#0000ff" />
<rect x="167" y="413" width="13" height="1" fill="#0000ff" />
<rect x="143.5" y="409.5" width="24" height="8" fill="#fff" stroke="#0000ff" stroke-width="1"/>
<rect x="162" y="412" width="1" height="2" fill="#0000ff" />
<rect x="67" y="453" width="23" height="1" fill="#0000ff" />
<rect x="93" y="453" width="23" height="1" fill="#0000ff" />
<rect x="89" y="445" width="1" height="17" fill="#0000ff" />
<rect x="93" y="445" width="1" height="17" fill="#0000ff" />
<rect x="84" y="446" width="1" height="2" fill="#0000ff" />
<rect x="131" y="453" width="23" height="1" fill="#0000ff" />
<rect x="157" y="453" width="23" height="1" fill="#0000ff" />
<rect x="153" y="445" width="1" height="17" fill="#0000ff" />
<rect x="157" y="445" width="1" height="17" fill="#0000ff" />
<rect x="148" y="446" width="1" height="2" fill="#0000ff" />
<rect x="59" y="469" width="1" height="13" fill="#0000ff" />
<rect x="59" y="505" width="1" height="13" fill="#0000ff" />
<rect x="55.5" y="481.5" width="8" height="24" fill="#fff" stroke="#0000ff" stroke-width="1"/>
<rect x="58" y="500" width="1" height="2" fill="#0000ff" />
<rect x="459" y="189" width="1" height="13" fill="#0000ff" />
<rect x="451" y="201" width="17" height="1" fill="#0000ff" />
<rect x="455" y="207" width="9" height="1" fill="#0000ff" />
<rect x="459" y="381" width="1" height="13" fill="#0000ff" />
<rect x="451" y="393" width="17" height="1" fill="#0000ff" />
<rect x="455" y="399" width="9" height="1" fill="#0000ff" />
<rect x="59" y="525" width="1" height="13" fill="#0000ff" />
<rect x="51" y="537" width="17" height="1" fill="#0000ff" />
<rect x="55" y="543" width="9" height="1" fill="#0000ff" />
<rect x="307" y="493" width="1" height="13" fill="#0000ff" />
<rect x="299" y="505" width="17" height="1" fill="#0000ff" />
<rect x="303" y="511" width="9" height="1" fill="#0000ff" />
<rect x="459" y="125" width="1" height="23" fill="#0000ff" />
<rect x="452" y="147" width="15" height="1" fill="#0000ff" />
<rect x="455" y="151" width="9" height="1" fill="#0000ff" />
<rect x="459" y="151" width="1" height="23" fill="#0000ff" />
<rect x="379" y="237" width="49" height="1" fill="#0000ff" />
<path d="M397.5 231.5L410.5 244.5M410.5 231.5L397.5 244.5" stroke="#0000ff" stroke-width="1" fill="none"/>
<path d="M392.5 237.5L396.5 234V241Z" fill="#0000ff"/><path d="M411.5 237.5L415.5 234V241Z" fill="#0000ff"/>
<rect x="203" y="269" width="14" height="1" fill="#0000ff" />
<rect x="216" y="257" width="3" height="25" fill="#0000ff" />
<rect x="227" y="245" width="1" height="13" fill="#0000ff" />
<rect x="227" y="281" width="1" height="13" fill="#0000ff" />
<path d="M227.5 257.5L219 265M219 273L227.5 281.5" stroke="#0000ff" stroke-width="1.1" fill="none"/>
<path d="M219.5 265L225.5 260.2L224.8 265.6Z" fill="#0000ff" stroke="#0000ff" stroke-width="0.3"/>
<rect x="411" y="325" width="14" height="1" fill="#0000ff" />
<rect x="424" y="313" width="3" height="25" fill="#0000ff" />
<rect x="435" y="301" width="1" height="13" fill="#0000ff" />
<rect x="435" y="337" width="1" height="13" fill="#0000ff" />
<path d="M435.5 313.5L427 321.5M427 329L435.5 337.5" stroke="#0000ff" stroke-width="1.1" fill="none"/>
<path d="M435.3 337.3L429.8 336.3L434.3 331.8Z" fill="#0000ff" stroke="#0000ff" stroke-width="0.3"/>
<rect x="211" y="413" width="15" height="1" fill="#0000ff" />
<rect x="245" y="405" width="15" height="1" fill="#0000ff" />
<rect x="245" y="421" width="15" height="1" fill="#0000ff" />
<circle cx="227.5" cy="413.5" r="1.6" fill="#fff" stroke="#0000ff"/><circle cx="243.5" cy="405.5" r="1.6" fill="#fff" stroke="#0000ff"/><circle cx="243.5" cy="421.5" r="1.6" fill="#fff" stroke="#0000ff"/>
<path d="M229 412.7L242 406.2" stroke="#0000ff" fill="none"/>
<rect x="307" y="445" width="1" height="13" fill="#0000ff" />
<rect x="307" y="481" width="1" height="13" fill="#0000ff" />
<circle cx="307.5" cy="469.5" r="12" fill="#fff" stroke="#0000ff"/>
<path d="M301 470.5q3.2-5 6.5-1t6.5-1" fill="none" stroke="#0000ff"/>
<rect x="298" y="452" width="5" height="1" fill="#0000ff" />
<rect x="300" y="450" width="1" height="5" fill="#0000ff" />
<rect x="298" y="487" width="5" height="1" fill="#0000ff" />
<path d="M434 90h3l2 2v3l-2 2h-3l-2-2v-3z" fill="#ff0000"/>
<rect x="432" y="92" width="7" height="3" fill="#ff0000" />
<rect x="434" y="90" width="3" height="7" fill="#ff0000" />
<rect x="433" y="91" width="5" height="5" fill="#ff0000" />
<path d="M226 146h3l2 2v3l-2 2h-3l-2-2v-3z" fill="#ff0000"/>
<rect x="224" y="148" width="7" height="3" fill="#ff0000" />
<rect x="226" y="146" width="3" height="7" fill="#ff0000" />
<rect x="225" y="147" width="5" height="5" fill="#ff0000" />
<path d="M370 146h3l2 2v3l-2 2h-3l-2-2v-3z" fill="#ff0000"/>
<rect x="368" y="148" width="7" height="3" fill="#ff0000" />
<rect x="370" y="146" width="3" height="7" fill="#ff0000" />
<rect x="369" y="147" width="5" height="5" fill="#ff0000" />
<path d="M226 194h3l2 2v3l-2 2h-3l-2-2v-3z" fill="#ff0000"/>
<rect x="224" y="196" width="7" height="3" fill="#ff0000" />
<rect x="226" y="194" width="3" height="7" fill="#ff0000" />
<rect x="225" y="195" width="5" height="5" fill="#ff0000" />
<path d="M370 194h3l2 2v3l-2 2h-3l-2-2v-3z" fill="#ff0000"/>
<rect x="368" y="196" width="7" height="3" fill="#ff0000" />
<rect x="370" y="194" width="3" height="7" fill="#ff0000" />
<rect x="369" y="195" width="5" height="5" fill="#ff0000" />
<path d="M226 234h3l2 2v3l-2 2h-3l-2-2v-3z" fill="#ff0000"/>
<rect x="224" y="236" width="7" height="3" fill="#ff0000" />
<rect x="226" y="234" width="3" height="7" fill="#ff0000" />
<rect x="225" y="235" width="5" height="5" fill="#ff0000" />
<path d="M306 234h3l2 2v3l-2 2h-3l-2-2v-3z" fill="#ff0000"/>
<rect x="304" y="236" width="7" height="3" fill="#ff0000" />
<rect x="306" y="234" width="3" height="7" fill="#ff0000" />
<rect x="305" y="235" width="5" height="5" fill="#ff0000" />
<path d="M370 234h3l2 2v3l-2 2h-3l-2-2v-3z" fill="#ff0000"/>
<rect x="368" y="236" width="7" height="3" fill="#ff0000" />
<rect x="370" y="234" width="3" height="7" fill="#ff0000" />
<rect x="369" y="235" width="5" height="5" fill="#ff0000" />
<path d="M434 234h3l2 2v3l-2 2h-3l-2-2v-3z" fill="#ff0000"/>
<rect x="432" y="236" width="7" height="3" fill="#ff0000" />
<rect x="434" y="234" width="3" height="7" fill="#ff0000" />
<rect x="433" y="235" width="5" height="5" fill="#ff0000" />
<path d="M146 266h3l2 2v3l-2 2h-3l-2-2v-3z" fill="#ff0000"/>
<rect x="144" y="268" width="7" height="3" fill="#ff0000" />
<rect x="146" y="266" width="3" height="7" fill="#ff0000" />
<rect x="145" y="267" width="5" height="5" fill="#ff0000" />
<path d="M186 266h3l2 2v3l-2 2h-3l-2-2v-3z" fill="#ff0000"/>
<rect x="184" y="268" width="7" height="3" fill="#ff0000" />
<rect x="186" y="266" width="3" height="7" fill="#ff0000" />
<rect x="185" y="267" width="5" height="5" fill="#ff0000" />
<path d="M122 322h3l2 2v3l-2 2h-3l-2-2v-3z" fill="#ff0000"/>
<rect x="120" y="324" width="7" height="3" fill="#ff0000" />
<rect x="122" y="322" width="3" height="7" fill="#ff0000" />
<rect x="121" y="323" width="5" height="5" fill="#ff0000" />
<path d="M146 322h3l2 2v3l-2 2h-3l-2-2v-3z" fill="#ff0000"/>
<rect x="144" y="324" width="7" height="3" fill="#ff0000" />
<rect x="146" y="322" width="3" height="7" fill="#ff0000" />
<rect x="145" y="323" width="5" height="5" fill="#ff0000" />
<path d="M226 322h3l2 2v3l-2 2h-3l-2-2v-3z" fill="#ff0000"/>
<rect x="224" y="324" width="7" height="3" fill="#ff0000" />
<rect x="226" y="322" width="3" height="7" fill="#ff0000" />
<rect x="225" y="323" width="5" height="5" fill="#ff0000" />
<path d="M146 370h3l2 2v3l-2 2h-3l-2-2v-3z" fill="#ff0000"/>
<rect x="144" y="372" width="7" height="3" fill="#ff0000" />
<rect x="146" y="370" width="3" height="7" fill="#ff0000" />
<rect x="145" y="371" width="5" height="5" fill="#ff0000" />
<path d="M226 370h3l2 2v3l-2 2h-3l-2-2v-3z" fill="#ff0000"/>
<rect x="224" y="372" width="7" height="3" fill="#ff0000" />
<rect x="226" y="370" width="3" height="7" fill="#ff0000" />
<rect x="225" y="371" width="5" height="5" fill="#ff0000" />
<path d="M306 370h3l2 2v3l-2 2h-3l-2-2v-3z" fill="#ff0000"/>
<rect x="304" y="372" width="7" height="3" fill="#ff0000" />
<rect x="306" y="370" width="3" height="7" fill="#ff0000" />
<rect x="305" y="371" width="5" height="5" fill="#ff0000" />
<path d="M434 370h3l2 2v3l-2 2h-3l-2-2v-3z" fill="#ff0000"/>
<rect x="432" y="372" width="7" height="3" fill="#ff0000" />
<rect x="434" y="370" width="3" height="7" fill="#ff0000" />
<rect x="433" y="371" width="5" height="5" fill="#ff0000" />
<path d="M458 370h3l2 2v3l-2 2h-3l-2-2v-3z" fill="#ff0000"/>
<rect x="456" y="372" width="7" height="3" fill="#ff0000" />
<rect x="458" y="370" width="3" height="7" fill="#ff0000" />
<rect x="457" y="371" width="5" height="5" fill="#ff0000" />
<path d="M458 306h3l2 2v3l-2 2h-3l-2-2v-3z" fill="#ff0000"/>
<rect x="456" y="308" width="7" height="3" fill="#ff0000" />
<rect x="458" y="306" width="3" height="7" fill="#ff0000" />
<rect x="457" y="307" width="5" height="5" fill="#ff0000" />
<path d="M58 410h3l2 2v3l-2 2h-3l-2-2v-3z" fill="#ff0000"/>
<rect x="56" y="412" width="7" height="3" fill="#ff0000" />
<rect x="58" y="410" width="3" height="7" fill="#ff0000" />
<rect x="57" y="411" width="5" height="5" fill="#ff0000" />
<path d="M122 410h3l2 2v3l-2 2h-3l-2-2v-3z" fill="#ff0000"/>
<rect x="120" y="412" width="7" height="3" fill="#ff0000" />
<rect x="122" y="410" width="3" height="7" fill="#ff0000" />
<rect x="121" y="411" width="5" height="5" fill="#ff0000" />
<path d="M186 410h3l2 2v3l-2 2h-3l-2-2v-3z" fill="#ff0000"/>
<rect x="184" y="412" width="7" height="3" fill="#ff0000" />
<rect x="186" y="410" width="3" height="7" fill="#ff0000" />
<rect x="185" y="411" width="5" height="5" fill="#ff0000" />
<path d="M58 450h3l2 2v3l-2 2h-3l-2-2v-3z" fill="#ff0000"/>
<rect x="56" y="452" width="7" height="3" fill="#ff0000" />
<rect x="58" y="450" width="3" height="7" fill="#ff0000" />
<rect x="57" y="451" width="5" height="5" fill="#ff0000" />
<path d="M122 450h3l2 2v3l-2 2h-3l-2-2v-3z" fill="#ff0000"/>
<rect x="120" y="452" width="7" height="3" fill="#ff0000" />
<rect x="122" y="450" width="3" height="7" fill="#ff0000" />
<rect x="121" y="451" width="5" height="5" fill="#ff0000" />
<text x="328.1" y="106.5" fill="#008000" font-size="12" class="sch" text-anchor="start" font-weight="normal" letter-spacing="0.30">R7</text>
<text x="319.6" y="135.5" fill="#008000" font-size="12" class="sch" text-anchor="start" font-weight="normal" letter-spacing="0.03">1meg</text>
<text x="264.0" y="136.5" fill="#008000" font-size="12" class="sch" text-anchor="start" font-weight="normal" letter-spacing="0.90">C3</text>
<text x="263.7" y="171.5" fill="#008000" font-size="12" class="sch" text-anchor="start" font-weight="normal" letter-spacing="0.53">1.6n</text>
<text x="264.8" y="185.5" fill="#008000" font-size="12" class="sch" text-anchor="start" font-weight="normal" letter-spacing="-0.15">C4</text>
<text x="261.8" y="216.5" fill="#008000" font-size="12" class="sch" text-anchor="start" font-weight="normal" letter-spacing="0.40">4.7n</text>
<text x="329.6" y="190.0" fill="#008000" font-size="12" class="sch" text-anchor="start" font-weight="normal" letter-spacing="0.90">R8</text>
<text x="332.6" y="214.5" fill="#008000" font-size="12" class="sch" text-anchor="start" font-weight="normal" letter-spacing="-0.10">68k</text>
<text x="266.3" y="230.0" fill="#008000" font-size="12" class="sch" text-anchor="start" font-weight="normal" letter-spacing="0.90">R6</text>
<text x="261.4" y="256.5" fill="#008000" font-size="12" class="sch" text-anchor="start" font-weight="normal" letter-spacing="0.55">470</text>
<text x="329.6" y="230.0" fill="#008000" font-size="12" class="sch" text-anchor="start" font-weight="normal" letter-spacing="0.90">R9</text>
<text x="325.0" y="256.5" fill="#008000" font-size="12" class="sch" text-anchor="start" font-weight="normal" letter-spacing="0.40">120k</text>
<text x="381.1" y="224.5" fill="#008000" font-size="12" class="sch" text-anchor="start" font-weight="normal" letter-spacing="0.84">Probe1</text>
<text x="401.1" y="161.5" fill="#008000" font-size="12" class="sch" text-anchor="start" font-weight="normal" letter-spacing="0.90">R10</text>
<text x="404.0" y="175.0" fill="#008000" font-size="12" class="sch" text-anchor="start" font-weight="normal" letter-spacing="0.60">10k</text>
<text x="474.8" y="150.5" fill="#008000" font-size="12" class="sch" text-anchor="start" font-weight="normal" letter-spacing="-0.15">V1</text>
<text x="469.8" y="168.5" fill="#008000" font-size="12" class="sch" text-anchor="start" font-weight="normal" letter-spacing="0.30">22V</text>
<text x="131.8" y="197.0" fill="#008000" font-size="12" class="sch" text-anchor="start" font-weight="normal" letter-spacing="0.90">R2</text>
<text x="128.8" y="211.0" fill="#008000" font-size="12" class="sch" text-anchor="start" font-weight="normal" letter-spacing="0.80">56k</text>
<text x="82.7" y="241.0" fill="#008000" font-size="12" class="sch" text-anchor="start" font-weight="normal" letter-spacing="0.70">1u</text>
<text x="83.7" y="256.5" fill="#008000" font-size="12" class="sch" text-anchor="start" font-weight="normal" letter-spacing="0.20">C1</text>
<text x="71.0" y="299.5" fill="#008000" font-size="12" class="sch" text-anchor="start" font-weight="normal" letter-spacing="0.90">R1</text>
<text x="69.6" y="313.5" fill="#008000" font-size="12" class="sch" text-anchor="start" font-weight="normal" letter-spacing="0.30">1k</text>
<text x="155.4" y="300.0" fill="#008000" font-size="12" class="sch" text-anchor="start" font-weight="normal" letter-spacing="0.20">R4</text>
<text x="156.8" y="317.0" fill="#008000" font-size="12" class="sch" text-anchor="start" font-weight="normal" letter-spacing="0.80">51k</text>
<text x="194.4" y="293.0" fill="#008000" font-size="12" class="sch" text-anchor="start" font-weight="normal" letter-spacing="0.50">C10</text>
<text x="197.1" y="313.0" fill="#008000" font-size="12" class="sch" text-anchor="start" font-weight="normal" letter-spacing="-0.00">47p</text>
<text x="233.5" y="265.0" fill="#008000" font-size="12" class="sch" text-anchor="start" font-weight="normal" letter-spacing="0.90">Q1</text>
<text x="233.5" y="280.5" fill="#008000" font-size="12" class="sch" text-anchor="start" font-weight="normal" letter-spacing="0.90">BC560_C</text>
<text x="323.0" y="299.5" fill="#008000" font-size="12" class="sch" text-anchor="start" font-weight="normal" letter-spacing="0.90">C5</text>
<text x="313.6" y="313.0" fill="#008000" font-size="12" class="sch" text-anchor="start" font-weight="normal" letter-spacing="0.40">147u</text>
<text x="474.4" y="262.0" fill="#008000" font-size="12" class="sch" text-anchor="start" font-weight="normal" letter-spacing="0.20">C6</text>
<text x="469.5" y="282.5" fill="#008000" font-size="12" class="sch" text-anchor="start" font-weight="normal" letter-spacing="0.77">2.2u</text>
<text x="469.0" y="338.0" fill="#008000" font-size="12" class="sch" text-anchor="start" font-weight="normal" letter-spacing="0.30">200k</text>
<text x="468.7" y="354.5" fill="#008000" font-size="12" class="sch" text-anchor="start" font-weight="normal" letter-spacing="0.20">RL</text>
<text x="399.8" y="346.0" fill="#008000" font-size="12" class="sch" text-anchor="start" font-weight="normal" letter-spacing="0.90">Q2</text>
<text x="368.8" y="360.5" fill="#008000" font-size="12" class="sch" text-anchor="start" font-weight="normal" letter-spacing="0.90">BC550_C</text>
<text x="85.2" y="347.5" fill="#008000" font-size="12" class="sch" text-anchor="start" font-weight="normal" letter-spacing="0.90">R3</text>
<text x="81.3" y="362.5" fill="#008000" font-size="12" class="sch" text-anchor="start" font-weight="normal" letter-spacing="0.60">6.8k</text>
<text x="159.2" y="345.0" fill="#008000" font-size="12" class="sch" text-anchor="start" font-weight="normal" letter-spacing="0.90">C2</text>
<text x="157.8" y="359.0" fill="#008000" font-size="12" class="sch" text-anchor="start" font-weight="normal" letter-spacing="0.90">33u</text>
<text x="239.4" y="347.5" fill="#008000" font-size="12" class="sch" text-anchor="start" font-weight="normal" letter-spacing="0.90">R5</text>
<text x="237.8" y="361.5" fill="#008000" font-size="12" class="sch" text-anchor="start" font-weight="normal" letter-spacing="0.30">15k</text>
<text x="80.2" y="403.5" fill="#008000" font-size="12" class="sch" text-anchor="start" font-weight="normal" letter-spacing="0.60">R13</text>
<text x="73.9" y="431.5" fill="#008000" font-size="12" class="sch" text-anchor="start" font-weight="normal" letter-spacing="0.40">883.3k</text>
<text x="142.2" y="404.5" fill="#008000" font-size="12" class="sch" text-anchor="start" font-weight="normal" letter-spacing="0.70">R14</text>
<text x="144.2" y="430.5" fill="#008000" font-size="12" class="sch" text-anchor="start" font-weight="normal" letter-spacing="0.50">75k</text>
<text x="208.6" y="439.0" fill="#008000" font-size="12" class="sch" text-anchor="start" font-weight="normal" letter-spacing="0.33">Switch1</text>
<text x="68.5" y="470.0" fill="#008000" font-size="12" class="sch" text-anchor="start" font-weight="normal" letter-spacing="0.90">C7</text>
<text x="96.8" y="470.5" fill="#008000" font-size="12" class="sch" text-anchor="start" font-weight="normal" letter-spacing="0.83">3.6n</text>
<text x="146.6" y="477.5" fill="#008000" font-size="12" class="sch" text-anchor="start" font-weight="normal" letter-spacing="0.80">C8</text>
<text x="144.8" y="491.0" fill="#008000" font-size="12" class="sch" text-anchor="start" font-weight="normal" letter-spacing="0.60">1n</text>
<text x="68.8" y="489.5" fill="#008000" font-size="12" class="sch" text-anchor="start" font-weight="normal" letter-spacing="0.90">R12</text>
<text x="70.4" y="503.5" fill="#008000" font-size="12" class="sch" text-anchor="start" font-weight="normal" letter-spacing="0.90">680</text>
<text x="325.2" y="478.5" fill="#008000" font-size="12" class="sch" text-anchor="start" font-weight="normal" letter-spacing="0.20">V4</text>
<text x="145.2" y="584.5" fill="#008000" font-size="12" class="sch" text-anchor="start" font-weight="normal" letter-spacing="0.20">X6</text>
<text x="346.8" y="283.5" fill="#ff0000" font-size="12" class="sch" text-anchor="start" font-weight="normal" letter-spacing="0.27">(100uF+47uF)</text>
<text x="459.8" y="308.0" fill="#0000ff" font-size="12" class="sch" text-anchor="start" font-weight="normal" letter-spacing="0.10">out</text>
<text x="187.1" y="411.5" fill="#0000ff" font-size="12" class="sch" text-anchor="start" font-weight="normal" letter-spacing="0.30">in</text>
<text x="106.1" y="515.5" fill="#0000ff" font-size="12" class="sch" text-anchor="start" font-weight="normal" letter-spacing="0.29">invers RIAA</text>
</g>
<g id="plots">
<text x="922" y="131" fill="#0000ff" font-size="10" class="ui" text-anchor="start" font-weight="normal" textLength="165" lengthAdjust="spacingAndGlyphs">Dual_TVV-47-Mod_50Hz-spectr.CIR</text>
<line x1="798.5" y1="134" x2="798.5" y2="321" stroke="#6a6a6a" stroke-width="1" stroke-dasharray="3 3" shape-rendering="crispEdges"/>
<line x1="824.5" y1="134" x2="824.5" y2="321" stroke="#6a6a6a" stroke-width="1" stroke-dasharray="3 3" shape-rendering="crispEdges"/>
<line x1="850.5" y1="134" x2="850.5" y2="321" stroke="#6a6a6a" stroke-width="1" stroke-dasharray="3 3" shape-rendering="crispEdges"/>
<line x1="875.5" y1="134" x2="875.5" y2="321" stroke="#6a6a6a" stroke-width="1" stroke-dasharray="3 3" shape-rendering="crispEdges"/>
<line x1="901.5" y1="134" x2="901.5" y2="321" stroke="#6a6a6a" stroke-width="1" stroke-dasharray="3 3" shape-rendering="crispEdges"/>
<line x1="927.5" y1="134" x2="927.5" y2="321" stroke="#6a6a6a" stroke-width="1" stroke-dasharray="3 3" shape-rendering="crispEdges"/>
<line x1="953.5" y1="134" x2="953.5" y2="321" stroke="#6a6a6a" stroke-width="1" stroke-dasharray="3 3" shape-rendering="crispEdges"/>
<line x1="979.5" y1="134" x2="979.5" y2="321" stroke="#6a6a6a" stroke-width="1" stroke-dasharray="3 3" shape-rendering="crispEdges"/>
<line x1="1004.5" y1="134" x2="1004.5" y2="321" stroke="#6a6a6a" stroke-width="1" stroke-dasharray="3 3" shape-rendering="crispEdges"/>
<line x1="1030.5" y1="134" x2="1030.5" y2="321" stroke="#6a6a6a" stroke-width="1" stroke-dasharray="3 3" shape-rendering="crispEdges"/>
<line x1="1056.5" y1="134" x2="1056.5" y2="321" stroke="#6a6a6a" stroke-width="1" stroke-dasharray="3 3" shape-rendering="crispEdges"/>
<line x1="1082.5" y1="134" x2="1082.5" y2="321" stroke="#6a6a6a" stroke-width="1" stroke-dasharray="3 3" shape-rendering="crispEdges"/>
<line x1="1108.5" y1="134" x2="1108.5" y2="321" stroke="#6a6a6a" stroke-width="1" stroke-dasharray="3 3" shape-rendering="crispEdges"/>
<line x1="1134.5" y1="134" x2="1134.5" y2="321" stroke="#6a6a6a" stroke-width="1" stroke-dasharray="3 3" shape-rendering="crispEdges"/>
<line x1="1160.5" y1="134" x2="1160.5" y2="321" stroke="#6a6a6a" stroke-width="1" stroke-dasharray="3 3" shape-rendering="crispEdges"/>
<line x1="1185.5" y1="134" x2="1185.5" y2="321" stroke="#6a6a6a" stroke-width="1" stroke-dasharray="3 3" shape-rendering="crispEdges"/>
<line x1="1211.5" y1="134" x2="1211.5" y2="321" stroke="#6a6a6a" stroke-width="1" stroke-dasharray="3 3" shape-rendering="crispEdges"/>
<line x1="773" y1="152.5" x2="1237" y2="152.5" stroke="#6a6a6a" stroke-width="1" stroke-dasharray="3 3" shape-rendering="crispEdges"/>
<line x1="773" y1="171.5" x2="1237" y2="171.5" stroke="#6a6a6a" stroke-width="1" stroke-dasharray="3 3" shape-rendering="crispEdges"/>
<line x1="773" y1="189.5" x2="1237" y2="189.5" stroke="#6a6a6a" stroke-width="1" stroke-dasharray="3 3" shape-rendering="crispEdges"/>
<line x1="773" y1="208.5" x2="1237" y2="208.5" stroke="#6a6a6a" stroke-width="1" stroke-dasharray="3 3" shape-rendering="crispEdges"/>
<line x1="773" y1="227.5" x2="1237" y2="227.5" stroke="#6a6a6a" stroke-width="1" stroke-dasharray="3 3" shape-rendering="crispEdges"/>
<line x1="773" y1="246.5" x2="1237" y2="246.5" stroke="#6a6a6a" stroke-width="1" stroke-dasharray="3 3" shape-rendering="crispEdges"/>
<line x1="773" y1="265.5" x2="1237" y2="265.5" stroke="#6a6a6a" stroke-width="1" stroke-dasharray="3 3" shape-rendering="crispEdges"/>
<line x1="773" y1="283.5" x2="1237" y2="283.5" stroke="#6a6a6a" stroke-width="1" stroke-dasharray="3 3" shape-rendering="crispEdges"/>
<line x1="773" y1="302.5" x2="1237" y2="302.5" stroke="#6a6a6a" stroke-width="1" stroke-dasharray="3 3" shape-rendering="crispEdges"/>
<rect x="772" y="227" width="466" height="1" fill="#0000ff" />
<polyline points="772.5,227.5 772.8,227.5 773.0,227.5 773.3,227.5 773.5,227.5 773.8,227.5 774.0,227.5 774.3,227.5 774.6,227.5 774.8,227.5 775.1,227.5 775.3,227.5 775.6,227.5 775.9,227.5 776.1,227.5 776.4,227.5 776.6,227.5 776.9,227.5 777.1,227.5 777.4,227.5 777.7,227.5 777.9,227.5 778.2,227.5 778.4,227.5 778.7,227.5 779.0,227.5 779.2,227.5 779.5,227.5 779.7,227.5 780.0,227.5 780.2,227.5 780.5,227.5 780.8,227.5 781.0,227.5 781.3,227.5 781.5,227.5 781.8,227.5 782.1,227.5 782.3,227.5 782.6,227.5 782.8,227.5 783.1,227.5 783.4,227.5 783.6,227.5 783.9,227.5 784.1,227.5 784.4,227.5 784.6,227.5 784.9,227.5 785.2,227.5 785.4,227.5 785.7,227.5 785.9,227.5 786.2,227.5 786.5,227.5 786.7,227.5 787.0,227.5 787.2,227.5 787.5,227.5 787.7,227.5 788.0,227.5 788.3,227.5 788.5,227.5 788.8,227.5 789.0,227.5 789.3,227.5 789.5,227.5 789.8,227.5 790.1,227.5 790.3,227.5 790.6,227.5 790.8,227.5 791.1,227.5 791.4,227.5 791.6,227.5 791.9,227.5 792.1,227.5 792.4,227.5 792.6,227.5 792.9,227.5 793.2,227.5 793.4,227.5 793.7,227.5 793.9,227.5 794.2,227.5 794.5,227.5 794.7,227.5 795.0,227.5 795.2,227.5 795.5,227.5 795.8,227.5 796.0,227.5 796.3,227.5 796.5,227.5 796.8,227.5 797.0,227.5 797.3,227.5 797.6,227.5 797.8,227.5 798.1,227.5 798.3,227.5 798.6,222.8 798.9,218.1 799.1,213.4 799.4,208.8 799.6,204.3 799.9,199.8 800.1,195.5 800.4,191.3 800.7,187.2 800.9,183.3 801.2,179.6 801.4,176.0 801.7,172.7 802.0,169.6 802.2,166.7 802.5,164.0 802.7,161.6 803.0,159.5 803.2,157.6 803.5,156.0 803.8,154.7 804.0,153.6 804.3,152.9 804.5,152.4 804.8,152.3 805.0,152.4 805.3,152.9 805.6,153.6 805.8,154.7 806.1,156.0 806.3,157.6 806.6,159.5 806.9,161.6 807.1,164.0 807.4,166.7 807.6,169.6 807.9,172.7 808.1,176.0 808.4,179.6 808.7,183.3 808.9,187.2 809.2,191.3 809.4,195.5 809.7,199.8 810.0,204.3 810.2,208.8 810.5,213.4 810.7,218.1 811.0,222.8 811.2,227.5 811.5,232.2 811.8,236.9 812.0,241.6 812.3,246.2 812.5,250.7 812.8,255.2 813.1,259.5 813.3,263.7 813.6,267.8 813.8,271.7 814.1,275.4 814.4,279.0 814.6,282.3 814.9,285.4 815.1,288.3 815.4,291.0 815.6,293.4 815.9,295.5 816.2,297.4 816.4,299.0 816.7,300.3 816.9,301.4 817.2,302.1 817.5,302.6 817.7,302.7 818.0,302.6 818.2,302.1 818.5,301.4 818.7,300.3 819.0,299.0 819.3,297.4 819.5,295.5 819.8,293.4 820.0,291.0 820.3,288.3 820.5,285.4 820.8,282.3 821.1,279.0 821.3,275.4 821.6,271.7 821.8,267.8 822.1,263.7 822.4,259.5 822.6,255.2 822.9,250.7 823.1,246.2 823.4,241.6 823.6,236.9 823.9,232.2 824.2,227.5 824.4,222.8 824.7,218.1 824.9,213.4 825.2,208.8 825.5,204.3 825.7,199.8 826.0,195.5 826.2,191.3 826.5,187.2 826.8,183.3 827.0,179.6 827.3,176.0 827.5,172.7 827.8,169.6 828.0,166.7 828.3,164.0 828.6,161.6 828.8,159.5 829.1,157.6 829.3,156.0 829.6,154.7 829.9,153.6 830.1,152.9 830.4,152.4 830.6,152.3 830.9,152.4 831.1,152.9 831.4,153.6 831.7,154.7 831.9,156.0 832.2,157.6 832.4,159.5 832.7,161.6 833.0,164.0 833.2,166.7 833.5,169.6 833.7,172.7 834.0,176.0 834.2,179.6 834.5,183.3 834.8,187.2 835.0,191.3 835.3,195.5 835.5,199.8 835.8,204.3 836.0,208.8 836.3,213.4 836.6,218.1 836.8,222.8 837.1,227.5 837.3,232.2 837.6,236.9 837.9,241.6 838.1,246.2 838.4,250.7 838.6,255.2 838.9,259.5 839.1,263.7 839.4,267.8 839.7,271.7 839.9,275.4 840.2,279.0 840.4,282.3 840.7,285.4 841.0,288.3 841.2,291.0 841.5,293.4 841.7,295.5 842.0,297.4 842.2,299.0 842.5,300.3 842.8,301.4 843.0,302.1 843.3,302.6 843.5,302.7 843.8,302.6 844.1,302.1 844.3,301.4 844.6,300.3 844.8,299.0 845.1,297.4 845.4,295.5 845.6,293.4 845.9,291.0 846.1,288.3 846.4,285.4 846.6,282.3 846.9,279.0 847.2,275.4 847.4,271.7 847.7,267.8 847.9,263.7 848.2,259.5 848.5,255.2 848.7,250.7 849.0,246.2 849.2,241.6 849.5,236.9 849.7,232.2 850.0,227.5 850.3,222.8 850.5,218.1 850.8,213.4 851.0,208.8 851.3,204.3 851.5,199.8 851.8,195.5 852.1,191.3 852.3,187.2 852.6,183.3 852.8,179.6 853.1,176.0 853.4,172.7 853.6,169.6 853.9,166.7 854.1,164.0 854.4,161.6 854.6,159.5 854.9,157.6 855.2,156.0 855.4,154.7 855.7,153.6 855.9,152.9 856.2,152.4 856.5,152.3 856.7,152.4 857.0,152.9 857.2,153.6 857.5,154.7 857.8,156.0 858.0,157.6 858.3,159.5 858.5,161.6 858.8,164.0 859.0,166.7 859.3,169.6 859.6,172.7 859.8,176.0 860.1,179.6 860.3,183.3 860.6,187.2 860.9,191.3 861.1,195.5 861.4,199.8 861.6,204.3 861.9,208.8 862.1,213.4 862.4,218.1 862.7,222.8 862.9,227.5 863.2,232.2 863.4,236.9 863.7,241.6 864.0,246.2 864.2,250.7 864.5,255.2 864.7,259.5 865.0,263.7 865.2,267.8 865.5,271.7 865.8,275.4 866.0,279.0 866.3,282.3 866.5,285.4 866.8,288.3 867.0,291.0 867.3,293.4 867.6,295.5 867.8,297.4 868.1,299.0 868.3,300.3 868.6,301.4 868.9,302.1 869.1,302.6 869.4,302.7 869.6,302.6 869.9,302.1 870.1,301.4 870.4,300.3 870.7,299.0 870.9,297.4 871.2,295.5 871.4,293.4 871.7,291.0 872.0,288.3 872.2,285.4 872.5,282.3 872.7,279.0 873.0,275.4 873.2,271.7 873.5,267.8 873.8,263.7 874.0,259.5 874.3,255.2 874.5,250.7 874.8,246.2 875.1,241.6 875.3,236.9 875.6,232.2 875.8,227.5 876.1,222.8 876.4,218.1 876.6,213.4 876.9,208.8 877.1,204.3 877.4,199.8 877.6,195.5 877.9,191.3 878.2,187.2 878.4,183.3 878.7,179.6 878.9,176.0 879.2,172.7 879.5,169.6 879.7,166.7 880.0,164.0 880.2,161.6 880.5,159.5 880.7,157.6 881.0,156.0 881.3,154.7 881.5,153.6 881.8,152.9 882.0,152.4 882.3,152.3 882.5,152.4 882.8,152.9 883.1,153.6 883.3,154.7 883.6,156.0 883.8,157.6 884.1,159.5 884.4,161.6 884.6,164.0 884.9,166.7 885.1,169.6 885.4,172.7 885.6,176.0 885.9,179.6 886.2,183.3 886.4,187.2 886.7,191.3 886.9,195.5 887.2,199.8 887.5,204.3 887.7,208.8 888.0,213.4 888.2,218.1 888.5,222.8 888.8,227.5 889.0,232.2 889.3,236.9 889.5,241.6 889.8,246.2 890.0,250.7 890.3,255.2 890.6,259.5 890.8,263.7 891.1,267.8 891.3,271.7 891.6,275.4 891.9,279.0 892.1,282.3 892.4,285.4 892.6,288.3 892.9,291.0 893.1,293.4 893.4,295.5 893.7,297.4 893.9,299.0 894.2,300.3 894.4,301.4 894.7,302.1 895.0,302.6 895.2,302.7 895.5,302.6 895.7,302.1 896.0,301.4 896.2,300.3 896.5,299.0 896.8,297.4 897.0,295.5 897.3,293.4 897.5,291.0 897.8,288.3 898.0,285.4 898.3,282.3 898.6,279.0 898.8,275.4 899.1,271.7 899.3,267.8 899.6,263.7 899.9,259.5 900.1,255.2 900.4,250.7 900.6,246.2 900.9,241.6 901.1,236.9 901.4,232.2 901.7,227.5 901.9,222.8 902.2,218.1 902.4,213.4 902.7,208.8 903.0,204.3 903.2,199.8 903.5,195.5 903.7,191.3 904.0,187.2 904.2,183.3 904.5,179.6 904.8,176.0 905.0,172.7 905.3,169.6 905.5,166.7 905.8,164.0 906.1,161.6 906.3,159.5 906.6,157.6 906.8,156.0 907.1,154.7 907.4,153.6 907.6,152.9 907.9,152.4 908.1,152.3 908.4,152.4 908.6,152.9 908.9,153.6 909.2,154.7 909.4,156.0 909.7,157.6 909.9,159.5 910.2,161.6 910.5,164.0 910.7,166.7 911.0,169.6 911.2,172.7 911.5,176.0 911.7,179.6 912.0,183.3 912.3,187.2 912.5,191.3 912.8,195.5 913.0,199.8 913.3,204.3 913.5,208.8 913.8,213.4 914.1,218.1 914.3,222.8 914.6,227.5 914.8,232.2 915.1,236.9 915.4,241.6 915.6,246.2 915.9,250.7 916.1,255.2 916.4,259.5 916.6,263.7 916.9,267.8 917.2,271.7 917.4,275.4 917.7,279.0 917.9,282.3 918.2,285.4 918.5,288.3 918.7,291.0 919.0,293.4 919.2,295.5 919.5,297.4 919.8,299.0 920.0,300.3 920.3,301.4 920.5,302.1 920.8,302.6 921.0,302.7 921.3,302.6 921.6,302.1 921.8,301.4 922.1,300.3 922.3,299.0 922.6,297.4 922.9,295.5 923.1,293.4 923.4,291.0 923.6,288.3 923.9,285.4 924.1,282.3 924.4,279.0 924.7,275.4 924.9,271.7 925.2,267.8 925.4,263.7 925.7,259.5 926.0,255.2 926.2,250.7 926.5,246.2 926.7,241.6 927.0,236.9 927.2,232.2 927.5,227.5 927.8,227.5 928.0,227.5 928.3,227.5 928.5,227.5 928.8,227.5 929.0,227.5 929.3,227.5 929.6,227.5 929.8,227.5 930.1,227.5 930.3,227.5 930.6,227.5 930.9,227.5 931.1,227.5 931.4,227.5 931.6,227.5 931.9,227.5 932.1,227.5 932.4,227.5 932.7,227.5 932.9,227.5 933.2,227.5 933.4,227.5 933.7,227.5 934.0,227.5 934.2,227.5 934.5,227.5 934.7,227.5 935.0,227.5 935.2,227.5 935.5,227.5 935.8,227.5 936.0,227.5 936.3,227.5 936.5,227.5 936.8,227.5 937.1,227.5 937.3,227.5 937.6,227.5 937.8,227.5 938.1,227.5 938.4,227.5 938.6,227.5 938.9,227.5 939.1,227.5 939.4,227.5 939.6,227.5 939.9,227.5 940.2,227.5 940.4,227.5 940.7,227.5 940.9,227.5 941.2,227.5 941.5,227.5 941.7,227.5 942.0,227.5 942.2,227.5 942.5,227.5 942.7,227.5 943.0,227.5 943.3,227.5 943.5,227.5 943.8,227.5 944.0,227.5 944.3,227.5 944.5,227.5 944.8,227.5 945.1,227.5 945.3,227.5 945.6,227.5 945.8,227.5 946.1,227.5 946.4,227.5 946.6,227.5 946.9,227.5 947.1,227.5 947.4,227.5 947.6,227.5 947.9,227.5 948.2,227.5 948.4,227.5 948.7,227.5 948.9,227.5 949.2,227.5 949.5,227.5 949.7,227.5 950.0,227.5 950.2,227.5 950.5,227.5 950.8,227.5 951.0,227.5 951.3,227.5 951.5,227.5 951.8,227.5 952.0,227.5 952.3,227.5 952.6,227.5 952.8,227.5 953.1,227.5 953.3,227.5 953.6,227.5 953.9,227.5 954.1,227.5 954.4,227.5 954.6,227.5 954.9,227.5 955.1,227.5 955.4,227.5 955.7,227.5 955.9,227.5 956.2,227.5 956.4,227.5 956.7,227.5 957.0,227.5 957.2,227.5 957.5,227.5 957.7,227.5 958.0,227.5 958.2,227.5 958.5,227.5 958.8,227.5 959.0,227.5 959.3,227.5 959.5,227.5 959.8,227.5 960.0,227.5 960.3,227.5 960.6,227.5 960.8,227.5 961.1,227.5 961.3,227.5 961.6,227.5 961.9,227.5 962.1,227.5 962.4,227.5 962.6,227.5 962.9,227.5 963.1,227.5 963.4,227.5 963.7,227.5 963.9,227.5 964.2,227.5 964.4,227.5 964.7,227.5 965.0,227.5 965.2,227.5 965.5,227.5 965.7,227.5 966.0,227.5 966.2,227.5 966.5,227.5 966.8,227.5 967.0,227.5 967.3,227.5 967.5,227.5 967.8,227.5 968.1,227.5 968.3,227.5 968.6,227.5 968.8,227.5 969.1,227.5 969.4,227.5 969.6,227.5 969.9,227.5 970.1,227.5 970.4,227.5 970.6,227.5 970.9,227.5 971.2,227.5 971.4,227.5 971.7,227.5 971.9,227.5 972.2,227.5 972.5,227.5 972.7,227.5 973.0,227.5 973.2,227.5 973.5,227.5 973.7,227.5 974.0,227.5 974.3,227.5 974.5,227.5 974.8,227.5 975.0,227.5 975.3,227.5 975.5,227.5 975.8,227.5 976.1,227.5 976.3,227.5 976.6,227.5 976.8,227.5 977.1,227.5 977.4,227.5 977.6,227.5 977.9,227.5 978.1,227.5 978.4,227.5 978.6,227.5 978.9,227.5 979.2,227.5 979.4,227.5 979.7,227.5 979.9,227.5 980.2,227.5 980.5,227.5 980.7,227.5 981.0,227.5 981.2,227.5 981.5,227.5 981.8,227.5 982.0,227.5 982.3,227.5 982.5,227.5 982.8,227.5 983.0,227.5 983.3,227.5 983.6,227.5 983.8,227.5 984.1,227.5 984.3,227.5 984.6,227.5 984.9,227.5 985.1,227.5 985.4,227.5 985.6,227.5 985.9,227.5 986.1,227.5 986.4,227.5 986.7,227.5 986.9,227.5 987.2,227.5 987.4,227.5 987.7,227.5 988.0,227.5 988.2,227.5 988.5,227.5 988.7,227.5 989.0,227.5 989.2,227.5 989.5,227.5 989.8,227.5 990.0,227.5 990.3,227.5 990.5,227.5 990.8,227.5 991.0,227.5 991.3,227.5 991.6,227.5 991.8,227.5 992.1,227.5 992.3,227.5 992.6,227.5 992.9,227.5 993.1,227.5 993.4,227.5 993.6,227.5 993.9,227.5 994.1,227.5 994.4,227.5 994.7,227.5 994.9,227.5 995.2,227.5 995.4,227.5 995.7,227.5 996.0,227.5 996.2,227.5 996.5,227.5 996.7,227.5 997.0,227.5 997.2,227.5 997.5,227.5 997.8,227.5 998.0,227.5 998.3,227.5 998.5,227.5 998.8,227.5 999.1,227.5 999.3,227.5 999.6,227.5 999.8,227.5 1000.1,227.5 1000.4,227.5 1000.6,227.5 1000.9,227.5 1001.1,227.5 1001.4,227.5 1001.6,227.5 1001.9,227.5 1002.2,227.5 1002.4,227.5 1002.7,227.5 1002.9,227.5 1003.2,227.5 1003.5,227.5 1003.7,227.5 1004.0,227.5 1004.2,227.5 1004.5,227.5 1004.7,227.5 1005.0,227.5 1005.3,227.5 1005.5,227.5 1005.8,227.5 1006.0,227.5 1006.3,227.5 1006.5,227.5 1006.8,227.5 1007.1,227.5 1007.3,227.5 1007.6,227.5 1007.8,227.5 1008.1,227.5 1008.4,227.5 1008.6,227.5 1008.9,227.5 1009.1,227.5 1009.4,227.5 1009.6,227.5 1009.9,227.5 1010.2,227.5 1010.4,227.5 1010.7,227.5 1010.9,227.5 1011.2,227.5 1011.5,227.5 1011.7,227.5 1012.0,227.5 1012.2,227.5 1012.5,227.5 1012.8,227.5 1013.0,227.5 1013.3,227.5 1013.5,227.5 1013.8,227.5 1014.0,227.5 1014.3,227.5 1014.6,227.5 1014.8,227.5 1015.1,227.5 1015.3,227.5 1015.6,227.5 1015.9,227.5 1016.1,227.5 1016.4,227.5 1016.6,227.5 1016.9,227.5 1017.1,227.5 1017.4,227.5 1017.7,227.5 1017.9,227.5 1018.2,227.5 1018.4,227.5 1018.7,227.5 1019.0,227.5 1019.2,227.5 1019.5,227.5 1019.7,227.5 1020.0,227.5 1020.2,227.5 1020.5,227.5 1020.8,227.5 1021.0,227.5 1021.3,227.5 1021.5,227.5 1021.8,227.5 1022.0,227.5 1022.3,227.5 1022.6,227.5 1022.8,227.5 1023.1,227.5 1023.3,227.5 1023.6,227.5 1023.9,227.5 1024.1,227.5 1024.4,227.5 1024.6,227.5 1024.9,227.5 1025.2,227.5 1025.4,227.5 1025.7,227.5 1025.9,227.5 1026.2,227.5 1026.4,227.5 1026.7,227.5 1027.0,227.5 1027.2,227.5 1027.5,227.5 1027.7,227.5 1028.0,227.5 1028.2,227.5 1028.5,227.5 1028.8,227.5 1029.0,227.5 1029.3,227.5 1029.5,227.5 1029.8,227.5 1030.1,227.5 1030.3,227.5 1030.6,227.5 1030.8,227.5 1031.1,232.2 1031.3,236.9 1031.6,241.6 1031.9,246.2 1032.1,250.7 1032.4,255.2 1032.6,259.5 1032.9,263.7 1033.2,267.8 1033.4,271.7 1033.7,275.4 1033.9,279.0 1034.2,282.3 1034.5,285.4 1034.7,288.3 1035.0,291.0 1035.2,293.4 1035.5,295.5 1035.7,297.4 1036.0,299.0 1036.3,300.3 1036.5,301.4 1036.8,302.1 1037.0,302.6 1037.3,302.7 1037.5,302.6 1037.8,302.1 1038.1,301.4 1038.3,300.3 1038.6,299.0 1038.8,297.4 1039.1,295.5 1039.4,293.4 1039.6,291.0 1039.9,288.3 1040.1,285.4 1040.4,282.3 1040.7,279.0 1040.9,275.4 1041.2,271.7 1041.4,267.8 1041.7,263.7 1041.9,259.5 1042.2,255.2 1042.5,250.7 1042.7,246.2 1043.0,241.6 1043.2,236.9 1043.5,232.2 1043.8,227.5 1044.0,222.8 1044.3,218.1 1044.5,213.4 1044.8,208.8 1045.0,204.3 1045.3,199.8 1045.6,195.5 1045.8,191.3 1046.1,187.2 1046.3,183.3 1046.6,179.6 1046.8,176.0 1047.1,172.7 1047.4,169.6 1047.6,166.7 1047.9,164.0 1048.1,161.6 1048.4,159.5 1048.7,157.6 1048.9,156.0 1049.2,154.7 1049.4,153.6 1049.7,152.9 1050.0,152.4 1050.2,152.3 1050.5,152.4 1050.7,152.9 1051.0,153.6 1051.2,154.7 1051.5,156.0 1051.8,157.6 1052.0,159.5 1052.3,161.6 1052.5,164.0 1052.8,166.7 1053.0,169.6 1053.3,172.7 1053.6,176.0 1053.8,179.6 1054.1,183.3 1054.3,187.2 1054.6,191.3 1054.9,195.5 1055.1,199.8 1055.4,204.3 1055.6,208.8 1055.9,213.4 1056.2,218.1 1056.4,222.8 1056.7,227.5 1056.9,232.2 1057.2,236.9 1057.4,241.6 1057.7,246.2 1058.0,250.7 1058.2,255.2 1058.5,259.5 1058.7,263.7 1059.0,267.8 1059.2,271.7 1059.5,275.4 1059.8,279.0 1060.0,282.3 1060.3,285.4 1060.5,288.3 1060.8,291.0 1061.1,293.4 1061.3,295.5 1061.6,297.4 1061.8,299.0 1062.1,300.3 1062.3,301.4 1062.6,302.1 1062.9,302.6 1063.1,302.7 1063.4,302.6 1063.6,302.1 1063.9,301.4 1064.2,300.3 1064.4,299.0 1064.7,297.4 1064.9,295.5 1065.2,293.4 1065.5,291.0 1065.7,288.3 1066.0,285.4 1066.2,282.3 1066.5,279.0 1066.7,275.4 1067.0,271.7 1067.3,267.8 1067.5,263.7 1067.8,259.5 1068.0,255.2 1068.3,250.7 1068.5,246.2 1068.8,241.6 1069.1,236.9 1069.3,232.2 1069.6,227.5 1069.8,222.8 1070.1,218.1 1070.4,213.4 1070.6,208.8 1070.9,204.3 1071.1,199.8 1071.4,195.5 1071.7,191.3 1071.9,187.2 1072.2,183.3 1072.4,179.6 1072.7,176.0 1072.9,172.7 1073.2,169.6 1073.5,166.7 1073.7,164.0 1074.0,161.6 1074.2,159.5 1074.5,157.6 1074.8,156.0 1075.0,154.7 1075.3,153.6 1075.5,152.9 1075.8,152.4 1076.0,152.3 1076.3,152.4 1076.6,152.9 1076.8,153.6 1077.1,154.7 1077.3,156.0 1077.6,157.6 1077.8,159.5 1078.1,161.6 1078.4,164.0 1078.6,166.7 1078.9,169.6 1079.1,172.7 1079.4,176.0 1079.7,179.6 1079.9,183.3 1080.2,187.2 1080.4,191.3 1080.7,195.5 1081.0,199.8 1081.2,204.3 1081.5,208.8 1081.7,213.4 1082.0,218.1 1082.2,222.8 1082.5,227.5 1082.8,232.2 1083.0,236.9 1083.3,241.6 1083.5,246.2 1083.8,250.7 1084.0,255.2 1084.3,259.5 1084.6,263.7 1084.8,267.8 1085.1,271.7 1085.3,275.4 1085.6,279.0 1085.9,282.3 1086.1,285.4 1086.4,288.3 1086.6,291.0 1086.9,293.4 1087.2,295.5 1087.4,297.4 1087.7,299.0 1087.9,300.3 1088.2,301.4 1088.4,302.1 1088.7,302.6 1089.0,302.7 1089.2,302.6 1089.5,302.1 1089.7,301.4 1090.0,300.3 1090.2,299.0 1090.5,297.4 1090.8,295.5 1091.0,293.4 1091.3,291.0 1091.5,288.3 1091.8,285.4 1092.1,282.3 1092.3,279.0 1092.6,275.4 1092.8,271.7 1093.1,267.8 1093.3,263.7 1093.6,259.5 1093.9,255.2 1094.1,250.7 1094.4,246.2 1094.6,241.6 1094.9,236.9 1095.2,232.2 1095.4,227.5 1095.7,222.8 1095.9,218.1 1096.2,213.4 1096.5,208.8 1096.7,204.3 1097.0,199.8 1097.2,195.5 1097.5,191.3 1097.7,187.2 1098.0,183.3 1098.3,179.6 1098.5,176.0 1098.8,172.7 1099.0,169.6 1099.3,166.7 1099.5,164.0 1099.8,161.6 1100.1,159.5 1100.3,157.6 1100.6,156.0 1100.8,154.7 1101.1,153.6 1101.4,152.9 1101.6,152.4 1101.9,152.3 1102.1,152.4 1102.4,152.9 1102.7,153.6 1102.9,154.7 1103.2,156.0 1103.4,157.6 1103.7,159.5 1103.9,161.6 1104.2,164.0 1104.5,166.7 1104.7,169.6 1105.0,172.7 1105.2,176.0 1105.5,179.6 1105.8,183.3 1106.0,187.2 1106.3,191.3 1106.5,195.5 1106.8,199.8 1107.0,204.3 1107.3,208.8 1107.6,213.4 1107.8,218.1 1108.1,222.8 1108.3,227.5 1108.6,232.2 1108.8,236.9 1109.1,241.6 1109.4,246.2 1109.6,250.7 1109.9,255.2 1110.1,259.5 1110.4,263.7 1110.7,267.8 1110.9,271.7 1111.2,275.4 1111.4,279.0 1111.7,282.3 1112.0,285.4 1112.2,288.3 1112.5,291.0 1112.7,293.4 1113.0,295.5 1113.2,297.4 1113.5,299.0 1113.8,300.3 1114.0,301.4 1114.3,302.1 1114.5,302.6 1114.8,302.7 1115.0,302.6 1115.3,302.1 1115.6,301.4 1115.8,300.3 1116.1,299.0 1116.3,297.4 1116.6,295.5 1116.9,293.4 1117.1,291.0 1117.4,288.3 1117.6,285.4 1117.9,282.3 1118.2,279.0 1118.4,275.4 1118.7,271.7 1118.9,267.8 1119.2,263.7 1119.4,259.5 1119.7,255.2 1120.0,250.7 1120.2,246.2 1120.5,241.6 1120.7,236.9 1121.0,232.2 1121.2,227.5 1121.5,222.8 1121.8,218.1 1122.0,213.4 1122.3,208.8 1122.5,204.3 1122.8,199.8 1123.1,195.5 1123.3,191.3 1123.6,187.2 1123.8,183.3 1124.1,179.6 1124.3,176.0 1124.6,172.7 1124.9,169.6 1125.1,166.7 1125.4,164.0 1125.6,161.6 1125.9,159.5 1126.2,157.6 1126.4,156.0 1126.7,154.7 1126.9,153.6 1127.2,152.9 1127.5,152.4 1127.7,152.3 1128.0,152.4 1128.2,152.9 1128.5,153.6 1128.7,154.7 1129.0,156.0 1129.3,157.6 1129.5,159.5 1129.8,161.6 1130.0,164.0 1130.3,166.7 1130.5,169.6 1130.8,172.7 1131.1,176.0 1131.3,179.6 1131.6,183.3 1131.8,187.2 1132.1,191.3 1132.4,195.5 1132.6,199.8 1132.9,204.3 1133.1,208.8 1133.4,213.4 1133.7,218.1 1133.9,222.8 1134.2,227.5 1134.4,232.2 1134.7,236.9 1134.9,241.6 1135.2,246.2 1135.5,250.7 1135.7,255.2 1136.0,259.5 1136.2,263.7 1136.5,267.8 1136.8,271.7 1137.0,275.4 1137.3,279.0 1137.5,282.3 1137.8,285.4 1138.0,288.3 1138.3,291.0 1138.6,293.4 1138.8,295.5 1139.1,297.4 1139.3,299.0 1139.6,300.3 1139.8,301.4 1140.1,302.1 1140.4,302.6 1140.6,302.7 1140.9,302.6 1141.1,302.1 1141.4,301.4 1141.7,300.3 1141.9,299.0 1142.2,297.4 1142.4,295.5 1142.7,293.4 1143.0,291.0 1143.2,288.3 1143.5,285.4 1143.7,282.3 1144.0,279.0 1144.2,275.4 1144.5,271.7 1144.8,267.8 1145.0,263.7 1145.3,259.5 1145.5,255.2 1145.8,250.7 1146.0,246.2 1146.3,241.6 1146.6,236.9 1146.8,232.2 1147.1,227.5 1147.3,222.8 1147.6,218.1 1147.9,213.4 1148.1,208.8 1148.4,204.3 1148.6,199.8 1148.9,195.5 1149.2,191.3 1149.4,187.2 1149.7,183.3 1149.9,179.6 1150.2,176.0 1150.4,172.7 1150.7,169.6 1151.0,166.7 1151.2,164.0 1151.5,161.6 1151.7,159.5 1152.0,157.6 1152.2,156.0 1152.5,154.7 1152.8,153.6 1153.0,152.9 1153.3,152.4 1153.5,152.3 1153.8,152.4 1154.1,152.9 1154.3,153.6 1154.6,154.7 1154.8,156.0 1155.1,157.6 1155.3,159.5 1155.6,161.6 1155.9,164.0 1156.1,166.7 1156.4,169.6 1156.6,172.7 1156.9,176.0 1157.2,179.6 1157.4,183.3 1157.7,187.2 1157.9,191.3 1158.2,195.5 1158.5,199.8 1158.7,204.3 1159.0,208.8 1159.2,213.4 1159.5,218.1 1159.7,222.8 1160.0,227.5 1160.3,227.5 1160.5,227.5 1160.8,227.5 1161.0,227.5 1161.3,227.5 1161.5,227.5 1161.8,227.5 1162.1,227.5 1162.3,227.5 1162.6,227.5 1162.8,227.5 1163.1,227.5 1163.4,227.5 1163.6,227.5 1163.9,227.5 1164.1,227.5 1164.4,227.5 1164.7,227.5 1164.9,227.5 1165.2,227.5 1165.4,227.5 1165.7,227.5 1165.9,227.5 1166.2,227.5 1166.5,227.5 1166.7,227.5 1167.0,227.5 1167.2,227.5 1167.5,227.5 1167.8,227.5 1168.0,227.5 1168.3,227.5 1168.5,227.5 1168.8,227.5 1169.0,227.5 1169.3,227.5 1169.6,227.5 1169.8,227.5 1170.1,227.5 1170.3,227.5 1170.6,227.5 1170.8,227.5 1171.1,227.5 1171.4,227.5 1171.6,227.5 1171.9,227.5 1172.1,227.5 1172.4,227.5 1172.7,227.5 1172.9,227.5 1173.2,227.5 1173.4,227.5 1173.7,227.5 1174.0,227.5 1174.2,227.5 1174.5,227.5 1174.7,227.5 1175.0,227.5 1175.2,227.5 1175.5,227.5 1175.8,227.5 1176.0,227.5 1176.3,227.5 1176.5,227.5 1176.8,227.5 1177.0,227.5 1177.3,227.5 1177.6,227.5 1177.8,227.5 1178.1,227.5 1178.3,227.5 1178.6,227.5 1178.9,227.5 1179.1,227.5 1179.4,227.5 1179.6,227.5 1179.9,227.5 1180.2,227.5 1180.4,227.5 1180.7,227.5 1180.9,227.5 1181.2,227.5 1181.4,227.5 1181.7,227.5 1182.0,227.5 1182.2,227.5 1182.5,227.5 1182.7,227.5 1183.0,227.5 1183.2,227.5 1183.5,227.5 1183.8,227.5 1184.0,227.5 1184.3,227.5 1184.5,227.5 1184.8,227.5 1185.1,227.5 1185.3,227.5 1185.6,227.5 1185.8,227.5 1186.1,227.5 1186.3,227.5 1186.6,227.5 1186.9,227.5 1187.1,227.5 1187.4,227.5 1187.6,227.5 1187.9,227.5 1188.2,227.5 1188.4,227.5 1188.7,227.5 1188.9,227.5 1189.2,227.5 1189.5,227.5 1189.7,227.5 1190.0,227.5 1190.2,227.5 1190.5,227.5 1190.7,227.5 1191.0,227.5 1191.3,227.5 1191.5,227.5 1191.8,227.5 1192.0,227.5 1192.3,227.5 1192.5,227.5 1192.8,227.5 1193.1,227.5 1193.3,227.5 1193.6,227.5 1193.8,227.5 1194.1,227.5 1194.4,227.5 1194.6,227.5 1194.9,227.5 1195.1,227.5 1195.4,227.5 1195.7,227.5 1195.9,227.5 1196.2,227.5 1196.4,227.5 1196.7,227.5 1196.9,227.5 1197.2,227.5 1197.5,227.5 1197.7,227.5 1198.0,227.5 1198.2,227.5 1198.5,227.5 1198.8,227.5 1199.0,227.5 1199.3,227.5 1199.5,227.5 1199.8,227.5 1200.0,227.5 1200.3,227.5 1200.6,227.5 1200.8,227.5 1201.1,227.5 1201.3,227.5 1201.6,227.5 1201.8,227.5 1202.1,227.5 1202.4,227.5 1202.6,227.5 1202.9,227.5 1203.1,227.5 1203.4,227.5 1203.7,227.5 1203.9,227.5 1204.2,227.5 1204.4,227.5 1204.7,227.5 1205.0,227.5 1205.2,227.5 1205.5,227.5 1205.7,227.5 1206.0,227.5 1206.2,227.5 1206.5,227.5 1206.8,227.5 1207.0,227.5 1207.3,227.5 1207.5,227.5 1207.8,227.5 1208.0,227.5 1208.3,227.5 1208.6,227.5 1208.8,227.5 1209.1,227.5 1209.3,227.5 1209.6,227.5 1209.9,227.5 1210.1,227.5 1210.4,227.5 1210.6,227.5 1210.9,227.5 1211.2,227.5 1211.4,227.5 1211.7,227.5 1211.9,227.5 1212.2,227.5 1212.4,227.5 1212.7,227.5 1213.0,227.5 1213.2,227.5 1213.5,227.5 1213.7,227.5 1214.0,227.5 1214.2,227.5 1214.5,227.5 1214.8,227.5 1215.0,227.5 1215.3,227.5 1215.5,227.5 1215.8,227.5 1216.1,227.5 1216.3,227.5 1216.6,227.5 1216.8,227.5 1217.1,227.5 1217.3,227.5 1217.6,227.5 1217.9,227.5 1218.1,227.5 1218.4,227.5 1218.6,227.5 1218.9,227.5 1219.2,227.5 1219.4,227.5 1219.7,227.5 1219.9,227.5 1220.2,227.5 1220.5,227.5 1220.7,227.5 1221.0,227.5 1221.2,227.5 1221.5,227.5 1221.7,227.5 1222.0,227.5 1222.3,227.5 1222.5,227.5 1222.8,227.5 1223.0,227.5 1223.3,227.5 1223.5,227.5 1223.8,227.5 1224.1,227.5 1224.3,227.5 1224.6,227.5 1224.8,227.5 1225.1,227.5 1225.4,227.5 1225.6,227.5 1225.9,227.5 1226.1,227.5 1226.4,227.5 1226.7,227.5 1226.9,227.5 1227.2,227.5 1227.4,227.5 1227.7,227.5 1227.9,227.5 1228.2,227.5 1228.5,227.5 1228.7,227.5 1229.0,227.5 1229.2,227.5 1229.5,227.5 1229.8,227.5 1230.0,227.5 1230.3,227.5 1230.5,227.5 1230.8,227.5 1231.0,227.5 1231.3,227.5 1231.6,227.5 1231.8,227.5 1232.1,227.5 1232.3,227.5 1232.6,227.5 1232.8,227.5 1233.1,227.5 1233.4,227.5 1233.6,227.5 1233.9,227.5 1234.1,227.5 1234.4,227.5 1234.7,227.5 1234.9,227.5 1235.2,227.5 1235.4,227.5 1235.7,227.5 1236.0,227.5 1236.2,227.5 1236.5,227.5 1236.7,227.5 1237.0,227.5 1237.2,227.5 1237.5,227.5" fill="none" stroke="#000000" stroke-width="3.1" stroke-linejoin="round" stroke-linecap="butt"/>
<rect x="772.5" y="133.5" width="465" height="188" fill="none" stroke="#808080" stroke-width="1" shape-rendering="crispEdges"/>
<text x="769.9" y="137.4" fill="#0000ff" font-size="10" class="ui" text-anchor="end" font-weight="normal" letter-spacing="0.45">2.500</text>
<text x="769.9" y="156.2" fill="#0000ff" font-size="10" class="ui" text-anchor="end" font-weight="normal" letter-spacing="0.45">2.000</text>
<text x="769.9" y="175.0" fill="#0000ff" font-size="10" class="ui" text-anchor="end" font-weight="normal" letter-spacing="0.45">1.500</text>
<text x="769.9" y="193.8" fill="#0000ff" font-size="10" class="ui" text-anchor="end" font-weight="normal" letter-spacing="0.45">1.000</text>
<text x="769.9" y="212.6" fill="#0000ff" font-size="10" class="ui" text-anchor="end" font-weight="normal" letter-spacing="0.45">0.500</text>
<text x="769.9" y="231.4" fill="#0000ff" font-size="10" class="ui" text-anchor="end" font-weight="normal" letter-spacing="0.45">0.000</text>
<text x="769.9" y="250.2" fill="#0000ff" font-size="10" class="ui" text-anchor="end" font-weight="normal" letter-spacing="0.45">-0.500</text>
<text x="769.9" y="269.0" fill="#0000ff" font-size="10" class="ui" text-anchor="end" font-weight="normal" letter-spacing="0.45">-1.000</text>
<text x="769.9" y="287.8" fill="#0000ff" font-size="10" class="ui" text-anchor="end" font-weight="normal" letter-spacing="0.45">-1.500</text>
<text x="769.9" y="306.6" fill="#0000ff" font-size="10" class="ui" text-anchor="end" font-weight="normal" letter-spacing="0.45">-2.000</text>
<text x="769.9" y="325.4" fill="#0000ff" font-size="10" class="ui" text-anchor="end" font-weight="normal" letter-spacing="0.45">-2.500</text>
<text x="772.5" y="332" fill="#0000ff" font-size="10" class="ui" text-anchor="start" font-weight="normal" letter-spacing="0.45">0.000m</text>
<text x="850.0" y="332" fill="#0000ff" font-size="10" class="ui" text-anchor="middle" font-weight="normal" letter-spacing="0.45">60.000m</text>
<text x="927.5" y="332" fill="#0000ff" font-size="10" class="ui" text-anchor="middle" font-weight="normal" letter-spacing="0.45">120.000m</text>
<text x="1005.0" y="332" fill="#0000ff" font-size="10" class="ui" text-anchor="middle" font-weight="normal" letter-spacing="0.45">180.000m</text>
<text x="1082.5" y="332" fill="#0000ff" font-size="10" class="ui" text-anchor="middle" font-weight="normal" letter-spacing="0.45">240.000m</text>
<text x="1160.0" y="332" fill="#0000ff" font-size="10" class="ui" text-anchor="middle" font-weight="normal" letter-spacing="0.45">300.000m</text>
<text x="1237.5" y="332" fill="#0000ff" font-size="10" class="ui" text-anchor="middle" font-weight="normal" letter-spacing="0.45">360.000m</text>
<text x="772" y="345.5" fill="#000" font-size="10" class="ui" text-anchor="start" font-weight="normal" textLength="37.5" lengthAdjust="spacingAndGlyphs">v(IN) (V)</text>
<line x1="798.5" y1="356" x2="798.5" y2="537" stroke="#6a6a6a" stroke-width="1" stroke-dasharray="3 3" shape-rendering="crispEdges"/>
<line x1="824.5" y1="356" x2="824.5" y2="537" stroke="#6a6a6a" stroke-width="1" stroke-dasharray="3 3" shape-rendering="crispEdges"/>
<line x1="850.5" y1="356" x2="850.5" y2="537" stroke="#6a6a6a" stroke-width="1" stroke-dasharray="3 3" shape-rendering="crispEdges"/>
<line x1="875.5" y1="356" x2="875.5" y2="537" stroke="#6a6a6a" stroke-width="1" stroke-dasharray="3 3" shape-rendering="crispEdges"/>
<line x1="901.5" y1="356" x2="901.5" y2="537" stroke="#6a6a6a" stroke-width="1" stroke-dasharray="3 3" shape-rendering="crispEdges"/>
<line x1="927.5" y1="356" x2="927.5" y2="537" stroke="#6a6a6a" stroke-width="1" stroke-dasharray="3 3" shape-rendering="crispEdges"/>
<line x1="953.5" y1="356" x2="953.5" y2="537" stroke="#6a6a6a" stroke-width="1" stroke-dasharray="3 3" shape-rendering="crispEdges"/>
<line x1="979.5" y1="356" x2="979.5" y2="537" stroke="#6a6a6a" stroke-width="1" stroke-dasharray="3 3" shape-rendering="crispEdges"/>
<line x1="1004.5" y1="356" x2="1004.5" y2="537" stroke="#6a6a6a" stroke-width="1" stroke-dasharray="3 3" shape-rendering="crispEdges"/>
<line x1="1030.5" y1="356" x2="1030.5" y2="537" stroke="#6a6a6a" stroke-width="1" stroke-dasharray="3 3" shape-rendering="crispEdges"/>
<line x1="1056.5" y1="356" x2="1056.5" y2="537" stroke="#6a6a6a" stroke-width="1" stroke-dasharray="3 3" shape-rendering="crispEdges"/>
<line x1="1082.5" y1="356" x2="1082.5" y2="537" stroke="#6a6a6a" stroke-width="1" stroke-dasharray="3 3" shape-rendering="crispEdges"/>
<line x1="1108.5" y1="356" x2="1108.5" y2="537" stroke="#6a6a6a" stroke-width="1" stroke-dasharray="3 3" shape-rendering="crispEdges"/>
<line x1="1134.5" y1="356" x2="1134.5" y2="537" stroke="#6a6a6a" stroke-width="1" stroke-dasharray="3 3" shape-rendering="crispEdges"/>
<line x1="1160.5" y1="356" x2="1160.5" y2="537" stroke="#6a6a6a" stroke-width="1" stroke-dasharray="3 3" shape-rendering="crispEdges"/>
<line x1="1185.5" y1="356" x2="1185.5" y2="537" stroke="#6a6a6a" stroke-width="1" stroke-dasharray="3 3" shape-rendering="crispEdges"/>
<line x1="1211.5" y1="356" x2="1211.5" y2="537" stroke="#6a6a6a" stroke-width="1" stroke-dasharray="3 3" shape-rendering="crispEdges"/>
<line x1="773" y1="378.5" x2="1237" y2="378.5" stroke="#6a6a6a" stroke-width="1" stroke-dasharray="3 3" shape-rendering="crispEdges"/>
<line x1="773" y1="401.5" x2="1237" y2="401.5" stroke="#6a6a6a" stroke-width="1" stroke-dasharray="3 3" shape-rendering="crispEdges"/>
<line x1="773" y1="423.5" x2="1237" y2="423.5" stroke="#6a6a6a" stroke-width="1" stroke-dasharray="3 3" shape-rendering="crispEdges"/>
<line x1="773" y1="446.5" x2="1237" y2="446.5" stroke="#6a6a6a" stroke-width="1" stroke-dasharray="3 3" shape-rendering="crispEdges"/>
<line x1="773" y1="469.5" x2="1237" y2="469.5" stroke="#6a6a6a" stroke-width="1" stroke-dasharray="3 3" shape-rendering="crispEdges"/>
<line x1="773" y1="491.5" x2="1237" y2="491.5" stroke="#6a6a6a" stroke-width="1" stroke-dasharray="3 3" shape-rendering="crispEdges"/>
<line x1="773" y1="514.5" x2="1237" y2="514.5" stroke="#6a6a6a" stroke-width="1" stroke-dasharray="3 3" shape-rendering="crispEdges"/>
<rect x="772" y="446" width="466" height="1" fill="#0000ff" />
<polyline points="772.5,446.5 772.8,446.5 773.0,446.5 773.3,446.5 773.5,446.5 773.8,446.5 774.0,446.5 774.3,446.5 774.6,446.5 774.8,446.5 775.1,446.5 775.3,446.5 775.6,446.5 775.9,446.5 776.1,446.5 776.4,446.5 776.6,446.5 776.9,446.5 777.1,446.5 777.4,446.5 777.7,446.5 777.9,446.5 778.2,446.5 778.4,446.5 778.7,446.5 779.0,446.5 779.2,446.5 779.5,446.5 779.7,446.5 780.0,446.5 780.2,446.5 780.5,446.5 780.8,446.5 781.0,446.5 781.3,446.5 781.5,446.5 781.8,446.5 782.1,446.5 782.3,446.5 782.6,446.5 782.8,446.5 783.1,446.5 783.4,446.5 783.6,446.5 783.9,446.5 784.1,446.5 784.4,446.5 784.6,446.5 784.9,446.5 785.2,446.5 785.4,446.5 785.7,446.5 785.9,446.5 786.2,446.5 786.5,446.5 786.7,446.5 787.0,446.5 787.2,446.5 787.5,446.5 787.7,446.5 788.0,446.5 788.3,446.5 788.5,446.5 788.8,446.5 789.0,446.5 789.3,446.5 789.5,446.5 789.8,446.5 790.1,446.5 790.3,446.5 790.6,446.5 790.8,446.5 791.1,446.5 791.4,446.5 791.6,446.5 791.9,446.5 792.1,446.5 792.4,446.5 792.6,446.5 792.9,446.5 793.2,446.5 793.4,446.5 793.7,446.5 793.9,446.5 794.2,446.5 794.5,446.5 794.7,446.5 795.0,446.5 795.2,446.5 795.5,446.5 795.8,446.5 796.0,446.5 796.3,446.5 796.5,446.5 796.8,446.5 797.0,446.5 797.3,446.5 797.6,446.5 797.8,446.5 798.1,446.5 798.3,446.5 798.6,442.6 798.9,438.8 799.1,435.0 799.4,431.2 799.6,427.5 799.9,423.9 800.1,420.4 800.4,417.1 800.7,413.9 800.9,410.9 801.2,408.0 801.4,405.4 801.7,402.9 802.0,400.7 802.2,398.7 802.5,396.9 802.7,395.4 803.0,394.2 803.2,393.2 803.5,392.4 803.8,392.0 804.0,391.8 804.3,391.9 804.5,392.2 804.8,392.9 805.0,393.8 805.3,395.0 805.6,396.4 805.8,398.1 806.1,400.0 806.3,402.2 806.6,404.7 806.9,407.3 807.1,410.2 807.4,413.3 807.6,416.5 807.9,420.0 808.1,423.6 808.4,427.3 808.7,431.2 808.9,435.2 809.2,439.3 809.4,443.5 809.7,447.8 810.0,452.1 810.2,456.4 810.5,460.8 810.7,465.2 811.0,469.5 811.2,473.8 811.5,478.1 811.8,482.2 812.0,486.3 812.3,490.3 812.5,494.1 812.8,497.8 813.1,501.4 813.3,504.8 813.6,508.0 813.8,511.0 814.1,513.8 814.4,516.4 814.6,518.7 814.9,520.8 815.1,522.7 815.4,524.3 815.6,525.6 815.9,526.6 816.2,527.4 816.4,527.9 816.7,528.1 816.9,528.1 817.2,527.7 817.5,527.1 817.7,526.2 818.0,525.0 818.2,523.5 818.5,521.7 818.7,519.7 819.0,517.5 819.3,515.0 819.5,512.2 819.8,509.2 820.0,506.0 820.3,502.6 820.5,499.1 820.8,495.3 821.1,491.4 821.3,487.3 821.6,483.1 821.8,478.7 822.1,474.3 822.4,469.8 822.6,465.2 822.9,460.6 823.1,455.9 823.4,451.2 823.6,446.6 823.9,441.9 824.2,437.3 824.4,432.8 824.7,428.3 824.9,423.9 825.2,419.7 825.5,415.5 825.7,411.5 826.0,407.7 826.2,404.0 826.5,400.6 826.8,397.3 827.0,394.2 827.3,391.4 827.5,388.8 827.8,386.4 828.0,384.3 828.3,382.5 828.6,380.9 828.8,379.6 829.1,378.6 829.3,377.9 829.6,377.4 829.9,377.3 830.1,377.4 830.4,377.8 830.6,378.6 830.9,379.5 831.1,380.8 831.4,382.4 831.7,384.2 831.9,386.2 832.2,388.6 832.4,391.1 832.7,393.9 833.0,396.9 833.2,400.2 833.5,403.6 833.7,407.2 834.0,410.9 834.2,414.9 834.5,418.9 834.8,423.1 835.0,427.4 835.3,431.7 835.5,436.2 835.8,440.7 836.0,445.2 836.3,449.7 836.6,454.2 836.8,458.7 837.1,463.2 837.3,467.6 837.6,472.0 837.9,476.2 838.1,480.4 838.4,484.4 838.6,488.3 838.9,492.0 839.1,495.5 839.4,498.9 839.7,502.1 839.9,505.0 840.2,507.8 840.4,510.2 840.7,512.5 841.0,514.5 841.2,516.2 841.5,517.7 841.7,518.9 842.0,519.8 842.2,520.5 842.5,520.8 842.8,520.9 843.0,520.7 843.3,520.2 843.5,519.4 843.8,518.3 844.1,517.0 844.3,515.3 844.6,513.5 844.8,511.3 845.1,508.9 845.4,506.3 845.6,503.4 845.9,500.3 846.1,497.0 846.4,493.6 846.6,489.9 846.9,486.1 847.2,482.1 847.4,478.0 847.7,473.7 847.9,469.4 848.2,465.0 848.5,460.5 848.7,455.9 849.0,451.4 849.2,446.8 849.5,442.2 849.7,437.6 850.0,433.1 850.3,428.6 850.5,424.2 850.8,419.9 851.0,415.7 851.3,411.7 851.5,407.8 851.8,404.0 852.1,400.4 852.3,397.0 852.6,393.8 852.8,390.8 853.1,388.0 853.4,385.5 853.6,383.2 853.9,381.1 854.1,379.4 854.4,377.8 854.6,376.6 854.9,375.6 855.2,375.0 855.4,374.6 855.7,374.5 855.9,374.7 856.2,375.1 856.5,375.9 856.7,376.9 857.0,378.2 857.2,379.8 857.5,381.7 857.8,383.8 858.0,386.2 858.3,388.8 858.5,391.6 858.8,394.7 859.0,397.9 859.3,401.4 859.6,405.0 859.8,408.8 860.1,412.8 860.3,416.9 860.6,421.1 860.9,425.4 861.1,429.8 861.4,434.3 861.6,438.8 861.9,443.3 862.1,447.9 862.4,452.4 862.7,457.0 862.9,461.5 863.2,465.9 863.4,470.3 863.7,474.6 864.0,478.7 864.2,482.8 864.5,486.7 864.7,490.4 865.0,494.0 865.2,497.4 865.5,500.6 865.8,503.6 866.0,506.3 866.3,508.9 866.5,511.1 866.8,513.2 867.0,514.9 867.3,516.4 867.6,517.6 867.8,518.6 868.1,519.2 868.3,519.6 868.6,519.7 868.9,519.5 869.1,519.0 869.4,518.2 869.6,517.2 869.9,515.8 870.1,514.2 870.4,512.4 870.7,510.2 870.9,507.9 871.2,505.2 871.4,502.4 871.7,499.3 872.0,496.0 872.2,492.6 872.5,488.9 872.7,485.1 873.0,481.1 873.2,477.0 873.5,472.8 873.8,468.5 874.0,464.1 874.3,459.6 874.5,455.1 874.8,450.5 875.1,445.9 875.3,441.4 875.6,436.8 875.8,432.3 876.1,427.8 876.4,423.5 876.6,419.2 876.9,415.0 877.1,410.9 877.4,407.0 877.6,403.3 877.9,399.7 878.2,396.3 878.4,393.1 878.7,390.1 878.9,387.3 879.2,384.8 879.5,382.5 879.7,380.5 880.0,378.7 880.2,377.2 880.5,376.0 880.7,375.0 881.0,374.4 881.3,374.0 881.5,373.9 881.8,374.1 882.0,374.6 882.3,375.3 882.5,376.4 882.8,377.7 883.1,379.3 883.3,381.2 883.6,383.3 883.8,385.7 884.1,388.3 884.4,391.1 884.6,394.2 884.9,397.4 885.1,400.9 885.4,404.6 885.6,408.4 885.9,412.3 886.2,416.4 886.4,420.6 886.7,425.0 886.9,429.4 887.2,433.8 887.5,438.4 887.7,442.9 888.0,447.5 888.2,452.0 888.5,456.6 888.8,461.1 889.0,465.5 889.3,469.9 889.5,474.2 889.8,478.4 890.0,482.4 890.3,486.3 890.6,490.1 890.8,493.7 891.1,497.1 891.3,500.3 891.6,503.2 891.9,506.0 892.1,508.5 892.4,510.8 892.6,512.8 892.9,514.6 893.1,516.1 893.4,517.3 893.7,518.3 893.9,518.9 894.2,519.3 894.4,519.4 894.7,519.2 895.0,518.7 895.2,517.9 895.5,516.9 895.7,515.6 896.0,514.0 896.2,512.1 896.5,510.0 896.8,507.6 897.0,505.0 897.3,502.1 897.5,499.1 897.8,495.8 898.0,492.3 898.3,488.7 898.6,484.9 898.8,480.9 899.1,476.8 899.3,472.6 899.6,468.3 899.9,463.9 900.1,459.4 900.4,454.9 900.6,450.3 900.9,445.7 901.1,441.2 901.4,436.6 901.7,432.1 901.9,427.7 902.2,423.3 902.4,419.0 902.7,414.8 903.0,410.8 903.2,406.9 903.5,403.1 903.7,399.5 904.0,396.1 904.2,392.9 904.5,389.9 904.8,387.2 905.0,384.6 905.3,382.4 905.5,380.3 905.8,378.6 906.1,377.1 906.3,375.8 906.6,374.9 906.8,374.2 907.1,373.8 907.4,373.8 907.6,374.0 907.9,374.4 908.1,375.2 908.4,376.2 908.6,377.6 908.9,379.2 909.2,381.0 909.4,383.2 909.7,385.5 909.9,388.1 910.2,391.0 910.5,394.1 910.7,397.3 911.0,400.8 911.2,404.4 911.5,408.2 911.7,412.2 912.0,416.3 912.3,420.5 912.5,424.8 912.8,429.2 913.0,433.7 913.3,438.2 913.5,442.8 913.8,447.4 914.1,451.9 914.3,456.5 914.6,461.0 914.8,465.4 915.1,469.8 915.4,474.1 915.6,478.3 915.9,482.3 916.1,486.2 916.4,490.0 916.6,493.6 916.9,497.0 917.2,500.2 917.4,503.2 917.7,505.9 917.9,508.4 918.2,510.7 918.5,512.8 918.7,514.5 919.0,516.0 919.2,517.2 919.5,518.2 919.8,518.9 920.0,519.2 920.3,519.3 920.5,519.1 920.8,518.6 921.0,517.9 921.3,516.8 921.6,515.5 921.8,513.9 922.1,512.0 922.3,509.9 922.6,507.5 922.9,504.9 923.1,502.1 923.4,499.0 923.6,495.7 923.9,492.3 924.1,488.6 924.4,484.8 924.7,480.9 924.9,476.8 925.2,472.5 925.4,468.2 925.7,463.8 926.0,459.3 926.2,454.8 926.5,450.3 926.7,445.7 927.0,441.1 927.2,436.6 927.5,432.1 927.8,431.8 928.0,431.5 928.3,431.3 928.5,431.0 928.8,430.8 929.0,430.7 929.3,430.5 929.6,430.4 929.8,430.2 930.1,430.1 930.3,430.0 930.6,430.0 930.9,429.9 931.1,429.9 931.4,429.9 931.6,429.9 931.9,429.9 932.1,429.9 932.4,429.9 932.7,429.9 932.9,429.9 933.2,429.9 933.4,429.9 933.7,429.9 934.0,429.9 934.2,429.9 934.5,430.0 934.7,430.1 935.0,430.2 935.2,430.3 935.5,430.4 935.8,430.5 936.0,430.6 936.3,430.8 936.5,430.9 936.8,431.1 937.1,431.2 937.3,431.4 937.6,431.6 937.8,431.7 938.1,431.9 938.4,432.1 938.6,432.3 938.9,432.5 939.1,432.6 939.4,432.8 939.6,433.0 939.9,433.2 940.2,433.4 940.4,433.6 940.7,433.8 940.9,434.0 941.2,434.2 941.5,434.4 941.7,434.6 942.0,434.8 942.2,435.0 942.5,435.2 942.7,435.4 943.0,435.6 943.3,435.8 943.5,436.0 943.8,436.2 944.0,436.4 944.3,436.5 944.5,436.7 944.8,436.9 945.1,437.1 945.3,437.3 945.6,437.5 945.8,437.7 946.1,437.8 946.4,438.0 946.6,438.2 946.9,438.4 947.1,438.6 947.4,438.7 947.6,438.9 947.9,439.1 948.2,439.2 948.4,439.4 948.7,439.5 948.9,439.7 949.2,439.9 949.5,440.0 949.7,440.2 950.0,440.3 950.2,440.5 950.5,440.6 950.8,440.7 951.0,440.9 951.3,441.0 951.5,441.2 951.8,441.3 952.0,441.4 952.3,441.6 952.6,441.7 952.8,441.8 953.1,441.9 953.3,442.0 953.6,442.2 953.9,442.3 954.1,442.4 954.4,442.5 954.6,442.6 954.9,442.7 955.1,442.8 955.4,442.9 955.7,443.0 955.9,443.1 956.2,443.2 956.4,443.3 956.7,443.4 957.0,443.5 957.2,443.5 957.5,443.6 957.7,443.7 958.0,443.8 958.2,443.9 958.5,444.0 958.8,444.0 959.0,444.1 959.3,444.2 959.5,444.2 959.8,444.3 960.0,444.4 960.3,444.4 960.6,444.5 960.8,444.6 961.1,444.6 961.3,444.7 961.6,444.7 961.9,444.8 962.1,444.8 962.4,444.9 962.6,444.9 962.9,445.0 963.1,445.0 963.4,445.1 963.7,445.1 963.9,445.2 964.2,445.2 964.4,445.3 964.7,445.3 965.0,445.3 965.2,445.4 965.5,445.4 965.7,445.4 966.0,445.5 966.2,445.5 966.5,445.6 966.8,445.6 967.0,445.6 967.3,445.6 967.5,445.7 967.8,445.7 968.1,445.7 968.3,445.8 968.6,445.8 968.8,445.8 969.1,445.8 969.4,445.9 969.6,445.9 969.9,445.9 970.1,445.9 970.4,445.9 970.6,446.0 970.9,446.0 971.2,446.0 971.4,446.0 971.7,446.0 971.9,446.0 972.2,446.1 972.5,446.1 972.7,446.1 973.0,446.1 973.2,446.1 973.5,446.1 973.7,446.2 974.0,446.2 974.3,446.2 974.5,446.2 974.8,446.2 975.0,446.2 975.3,446.2 975.5,446.2 975.8,446.2 976.1,446.3 976.3,446.3 976.6,446.3 976.8,446.3 977.1,446.3 977.4,446.3 977.6,446.3 977.9,446.3 978.1,446.3 978.4,446.3 978.6,446.3 978.9,446.3 979.2,446.3 979.4,446.4 979.7,446.4 979.9,446.4 980.2,446.4 980.5,446.4 980.7,446.4 981.0,446.4 981.2,446.4 981.5,446.4 981.8,446.4 982.0,446.4 982.3,446.4 982.5,446.4 982.8,446.4 983.0,446.4 983.3,446.4 983.6,446.4 983.8,446.4 984.1,446.4 984.3,446.4 984.6,446.4 984.9,446.4 985.1,446.4 985.4,446.4 985.6,446.4 985.9,446.4 986.1,446.5 986.4,446.5 986.7,446.5 986.9,446.5 987.2,446.5 987.4,446.5 987.7,446.5 988.0,446.5 988.2,446.5 988.5,446.5 988.7,446.5 989.0,446.5 989.2,446.5 989.5,446.5 989.8,446.5 990.0,446.5 990.3,446.5 990.5,446.5 990.8,446.5 991.0,446.5 991.3,446.5 991.6,446.5 991.8,446.5 992.1,446.5 992.3,446.5 992.6,446.5 992.9,446.5 993.1,446.5 993.4,446.5 993.6,446.5 993.9,446.5 994.1,446.5 994.4,446.5 994.7,446.5 994.9,446.5 995.2,446.5 995.4,446.5 995.7,446.5 996.0,446.5 996.2,446.5 996.5,446.5 996.7,446.5 997.0,446.5 997.2,446.5 997.5,446.5 997.8,446.5 998.0,446.5 998.3,446.5 998.5,446.5 998.8,446.5 999.1,446.5 999.3,446.5 999.6,446.5 999.8,446.5 1000.1,446.5 1000.4,446.5 1000.6,446.5 1000.9,446.5 1001.1,446.5 1001.4,446.5 1001.6,446.5 1001.9,446.5 1002.2,446.5 1002.4,446.5 1002.7,446.5 1002.9,446.5 1003.2,446.5 1003.5,446.5 1003.7,446.5 1004.0,446.5 1004.2,446.5 1004.5,446.5 1004.7,446.5 1005.0,446.5 1005.3,446.5 1005.5,446.5 1005.8,446.5 1006.0,446.5 1006.3,446.5 1006.5,446.5 1006.8,446.5 1007.1,446.5 1007.3,446.5 1007.6,446.5 1007.8,446.5 1008.1,446.5 1008.4,446.5 1008.6,446.5 1008.9,446.5 1009.1,446.5 1009.4,446.5 1009.6,446.5 1009.9,446.5 1010.2,446.5 1010.4,446.5 1010.7,446.5 1010.9,446.5 1011.2,446.5 1011.5,446.5 1011.7,446.5 1012.0,446.5 1012.2,446.5 1012.5,446.5 1012.8,446.5 1013.0,446.5 1013.3,446.5 1013.5,446.5 1013.8,446.5 1014.0,446.5 1014.3,446.5 1014.6,446.5 1014.8,446.5 1015.1,446.5 1015.3,446.5 1015.6,446.5 1015.9,446.5 1016.1,446.5 1016.4,446.5 1016.6,446.5 1016.9,446.5 1017.1,446.5 1017.4,446.5 1017.7,446.5 1017.9,446.5 1018.2,446.5 1018.4,446.5 1018.7,446.5 1019.0,446.5 1019.2,446.5 1019.5,446.5 1019.7,446.5 1020.0,446.5 1020.2,446.5 1020.5,446.5 1020.8,446.5 1021.0,446.5 1021.3,446.5 1021.5,446.5 1021.8,446.5 1022.0,446.5 1022.3,446.5 1022.6,446.5 1022.8,446.5 1023.1,446.5 1023.3,446.5 1023.6,446.5 1023.9,446.5 1024.1,446.5 1024.4,446.5 1024.6,446.5 1024.9,446.5 1025.2,446.5 1025.4,446.5 1025.7,446.5 1025.9,446.5 1026.2,446.5 1026.4,446.5 1026.7,446.5 1027.0,446.5 1027.2,446.5 1027.5,446.5 1027.7,446.5 1028.0,446.5 1028.2,446.5 1028.5,446.5 1028.8,446.5 1029.0,446.5 1029.3,446.5 1029.5,446.5 1029.8,446.5 1030.1,446.5 1030.3,446.5 1030.6,446.5 1030.8,446.5 1031.1,450.4 1031.3,454.2 1031.6,458.0 1031.9,461.8 1032.1,465.5 1032.4,469.1 1032.6,472.6 1032.9,475.9 1033.2,479.1 1033.4,482.1 1033.7,485.0 1033.9,487.6 1034.2,490.1 1034.5,492.3 1034.7,494.3 1035.0,496.1 1035.2,497.6 1035.5,498.8 1035.7,499.8 1036.0,500.6 1036.3,501.0 1036.5,501.2 1036.8,501.1 1037.0,500.8 1037.3,500.1 1037.5,499.2 1037.8,498.0 1038.1,496.6 1038.3,494.9 1038.6,493.0 1038.8,490.8 1039.1,488.3 1039.4,485.7 1039.6,482.8 1039.9,479.7 1040.1,476.5 1040.4,473.0 1040.7,469.4 1040.9,465.7 1041.2,461.8 1041.4,457.8 1041.7,453.7 1041.9,449.5 1042.2,445.2 1042.5,440.9 1042.7,436.6 1043.0,432.2 1043.2,427.8 1043.5,423.5 1043.8,419.2 1044.0,414.9 1044.3,410.8 1044.5,406.7 1044.8,402.7 1045.0,398.9 1045.3,395.2 1045.6,391.6 1045.8,388.2 1046.1,385.0 1046.3,382.0 1046.6,379.2 1046.8,376.6 1047.1,374.3 1047.4,372.2 1047.6,370.3 1047.9,368.7 1048.1,367.4 1048.4,366.4 1048.7,365.6 1048.9,365.1 1049.2,364.9 1049.4,364.9 1049.7,365.3 1050.0,365.9 1050.2,366.8 1050.5,368.0 1050.7,369.5 1051.0,371.3 1051.2,373.3 1051.5,375.5 1051.8,378.0 1052.0,380.8 1052.3,383.8 1052.5,387.0 1052.8,390.4 1053.0,393.9 1053.3,397.7 1053.6,401.6 1053.8,405.7 1054.1,409.9 1054.3,414.3 1054.6,418.7 1054.9,423.2 1055.1,427.8 1055.4,432.4 1055.6,437.1 1055.9,441.8 1056.2,446.4 1056.4,451.1 1056.7,455.7 1056.9,460.2 1057.2,464.7 1057.4,469.1 1057.7,473.3 1058.0,477.5 1058.2,481.5 1058.5,485.3 1058.7,489.0 1059.0,492.4 1059.2,495.7 1059.5,498.8 1059.8,501.6 1060.0,504.2 1060.3,506.6 1060.5,508.7 1060.8,510.5 1061.1,512.1 1061.3,513.4 1061.6,514.4 1061.8,515.1 1062.1,515.6 1062.3,515.7 1062.6,515.6 1062.9,515.2 1063.1,514.4 1063.4,513.5 1063.6,512.2 1063.9,510.6 1064.2,508.8 1064.4,506.8 1064.7,504.4 1064.9,501.9 1065.2,499.1 1065.5,496.1 1065.7,492.8 1066.0,489.4 1066.2,485.8 1066.5,482.1 1066.7,478.1 1067.0,474.1 1067.3,469.9 1067.5,465.6 1067.8,461.3 1068.0,456.8 1068.3,452.3 1068.5,447.8 1068.8,443.3 1069.1,438.8 1069.3,434.3 1069.6,429.8 1069.8,425.4 1070.1,421.0 1070.4,416.8 1070.6,412.6 1070.9,408.6 1071.1,404.7 1071.4,401.0 1071.7,397.5 1071.9,394.1 1072.2,390.9 1072.4,388.0 1072.7,385.2 1072.9,382.8 1073.2,380.5 1073.5,378.5 1073.7,376.8 1074.0,375.3 1074.2,374.1 1074.5,373.2 1074.8,372.5 1075.0,372.2 1075.3,372.1 1075.5,372.3 1075.8,372.8 1076.0,373.6 1076.3,374.7 1076.6,376.0 1076.8,377.7 1077.1,379.5 1077.3,381.7 1077.6,384.1 1077.8,386.7 1078.1,389.6 1078.4,392.7 1078.6,396.0 1078.9,399.4 1079.1,403.1 1079.4,406.9 1079.7,410.9 1079.9,415.0 1080.2,419.3 1080.4,423.6 1080.7,428.0 1081.0,432.5 1081.2,437.1 1081.5,441.6 1081.7,446.2 1082.0,450.8 1082.2,455.4 1082.5,459.9 1082.8,464.4 1083.0,468.8 1083.3,473.1 1083.5,477.3 1083.8,481.3 1084.0,485.2 1084.3,489.0 1084.6,492.6 1084.8,496.0 1085.1,499.2 1085.3,502.2 1085.6,505.0 1085.9,507.5 1086.1,509.8 1086.4,511.9 1086.6,513.6 1086.9,515.2 1087.2,516.4 1087.4,517.4 1087.7,518.0 1087.9,518.4 1088.2,518.5 1088.4,518.3 1088.7,517.9 1089.0,517.1 1089.2,516.1 1089.5,514.8 1089.7,513.2 1090.0,511.3 1090.2,509.2 1090.5,506.8 1090.8,504.2 1091.0,501.4 1091.3,498.3 1091.5,495.1 1091.8,491.6 1092.1,488.0 1092.3,484.2 1092.6,480.2 1092.8,476.1 1093.1,471.9 1093.3,467.6 1093.6,463.2 1093.9,458.7 1094.1,454.2 1094.4,449.7 1094.6,445.1 1094.9,440.6 1095.2,436.0 1095.4,431.5 1095.7,427.1 1095.9,422.7 1096.2,418.4 1096.5,414.3 1096.7,410.2 1097.0,406.3 1097.2,402.6 1097.5,399.0 1097.7,395.6 1098.0,392.4 1098.3,389.4 1098.5,386.7 1098.8,384.1 1099.0,381.9 1099.3,379.8 1099.5,378.1 1099.8,376.6 1100.1,375.4 1100.3,374.4 1100.6,373.8 1100.8,373.4 1101.1,373.3 1101.4,373.5 1101.6,374.0 1101.9,374.8 1102.1,375.8 1102.4,377.2 1102.7,378.8 1102.9,380.6 1103.2,382.8 1103.4,385.1 1103.7,387.8 1103.9,390.6 1104.2,393.7 1104.5,397.0 1104.7,400.4 1105.0,404.1 1105.2,407.9 1105.5,411.9 1105.8,416.0 1106.0,420.2 1106.3,424.5 1106.5,428.9 1106.8,433.4 1107.0,437.9 1107.3,442.5 1107.6,447.1 1107.8,451.6 1108.1,456.2 1108.3,460.7 1108.6,465.2 1108.8,469.5 1109.1,473.8 1109.4,478.0 1109.6,482.1 1109.9,486.0 1110.1,489.7 1110.4,493.3 1110.7,496.7 1110.9,499.9 1111.2,502.9 1111.4,505.7 1111.7,508.2 1112.0,510.5 1112.2,512.5 1112.5,514.3 1112.7,515.8 1113.0,517.0 1113.2,518.0 1113.5,518.6 1113.8,519.0 1114.0,519.1 1114.3,518.9 1114.5,518.4 1114.8,517.7 1115.0,516.6 1115.3,515.3 1115.6,513.7 1115.8,511.8 1116.1,509.7 1116.3,507.3 1116.6,504.7 1116.9,501.9 1117.1,498.8 1117.4,495.6 1117.6,492.1 1117.9,488.4 1118.2,484.6 1118.4,480.7 1118.7,476.6 1118.9,472.4 1119.2,468.0 1119.4,463.6 1119.7,459.2 1120.0,454.6 1120.2,450.1 1120.5,445.5 1120.7,441.0 1121.0,436.4 1121.2,431.9 1121.5,427.5 1121.8,423.1 1122.0,418.8 1122.3,414.6 1122.5,410.6 1122.8,406.7 1123.1,402.9 1123.3,399.3 1123.6,395.9 1123.8,392.7 1124.1,389.8 1124.3,387.0 1124.6,384.5 1124.9,382.2 1125.1,380.2 1125.4,378.4 1125.6,376.9 1125.9,375.7 1126.2,374.7 1126.4,374.1 1126.7,373.7 1126.9,373.6 1127.2,373.8 1127.5,374.3 1127.7,375.1 1128.0,376.1 1128.2,377.4 1128.5,379.0 1128.7,380.9 1129.0,383.0 1129.3,385.4 1129.5,388.0 1129.8,390.9 1130.0,393.9 1130.3,397.2 1130.5,400.7 1130.8,404.3 1131.1,408.1 1131.3,412.1 1131.6,416.2 1131.8,420.4 1132.1,424.7 1132.4,429.1 1132.6,433.6 1132.9,438.1 1133.1,442.7 1133.4,447.3 1133.7,451.8 1133.9,456.4 1134.2,460.9 1134.4,465.3 1134.7,469.7 1134.9,474.0 1135.2,478.2 1135.5,482.2 1135.7,486.1 1136.0,489.9 1136.2,493.5 1136.5,496.9 1136.8,500.1 1137.0,503.1 1137.3,505.8 1137.5,508.4 1137.8,510.6 1138.0,512.7 1138.3,514.4 1138.6,515.9 1138.8,517.2 1139.1,518.1 1139.3,518.8 1139.6,519.2 1139.8,519.2 1140.1,519.0 1140.4,518.6 1140.6,517.8 1140.9,516.8 1141.1,515.4 1141.4,513.8 1141.7,512.0 1141.9,509.8 1142.2,507.5 1142.4,504.9 1142.7,502.0 1143.0,498.9 1143.2,495.7 1143.5,492.2 1143.7,488.6 1144.0,484.8 1144.2,480.8 1144.5,476.7 1144.8,472.5 1145.0,468.2 1145.3,463.8 1145.5,459.3 1145.8,454.8 1146.0,450.2 1146.3,445.6 1146.6,441.1 1146.8,436.5 1147.1,432.0 1147.3,427.6 1147.6,423.2 1147.9,418.9 1148.1,414.7 1148.4,410.7 1148.6,406.8 1148.9,403.0 1149.2,399.4 1149.4,396.0 1149.7,392.8 1149.9,389.8 1150.2,387.1 1150.4,384.6 1150.7,382.3 1151.0,380.2 1151.2,378.5 1151.5,377.0 1151.7,375.8 1152.0,374.8 1152.2,374.1 1152.5,373.8 1152.8,373.7 1153.0,373.9 1153.3,374.4 1153.5,375.1 1153.8,376.2 1154.1,377.5 1154.3,379.1 1154.6,381.0 1154.8,383.1 1155.1,385.5 1155.3,388.1 1155.6,390.9 1155.9,394.0 1156.1,397.3 1156.4,400.7 1156.6,404.4 1156.9,408.2 1157.2,412.1 1157.4,416.2 1157.7,420.5 1157.9,424.8 1158.2,429.2 1158.5,433.7 1158.7,438.2 1159.0,442.7 1159.2,447.3 1159.5,451.9 1159.7,456.4 1160.0,460.9 1160.3,461.2 1160.5,461.5 1160.8,461.7 1161.0,462.0 1161.3,462.2 1161.5,462.3 1161.8,462.5 1162.1,462.6 1162.3,462.8 1162.6,462.9 1162.8,463.0 1163.1,463.0 1163.4,463.1 1163.6,463.1 1163.9,463.1 1164.1,463.1 1164.4,463.1 1164.7,463.1 1164.9,463.1 1165.2,463.1 1165.4,463.1 1165.7,463.1 1165.9,463.1 1166.2,463.1 1166.5,463.1 1166.7,463.1 1167.0,463.0 1167.2,462.9 1167.5,462.8 1167.8,462.7 1168.0,462.6 1168.3,462.5 1168.5,462.4 1168.8,462.2 1169.0,462.1 1169.3,461.9 1169.6,461.8 1169.8,461.6 1170.1,461.4 1170.3,461.3 1170.6,461.1 1170.8,460.9 1171.1,460.7 1171.4,460.5 1171.6,460.4 1171.9,460.2 1172.1,460.0 1172.4,459.8 1172.7,459.6 1172.9,459.4 1173.2,459.2 1173.4,459.0 1173.7,458.8 1174.0,458.6 1174.2,458.4 1174.5,458.2 1174.7,458.0 1175.0,457.8 1175.2,457.6 1175.5,457.4 1175.8,457.2 1176.0,457.0 1176.3,456.8 1176.5,456.6 1176.8,456.5 1177.0,456.3 1177.3,456.1 1177.6,455.9 1177.8,455.7 1178.1,455.5 1178.3,455.3 1178.6,455.2 1178.9,455.0 1179.1,454.8 1179.4,454.6 1179.6,454.4 1179.9,454.3 1180.2,454.1 1180.4,453.9 1180.7,453.8 1180.9,453.6 1181.2,453.5 1181.4,453.3 1181.7,453.1 1182.0,453.0 1182.2,452.8 1182.5,452.7 1182.7,452.5 1183.0,452.4 1183.2,452.3 1183.5,452.1 1183.8,452.0 1184.0,451.8 1184.3,451.7 1184.5,451.6 1184.8,451.4 1185.1,451.3 1185.3,451.2 1185.6,451.1 1185.8,451.0 1186.1,450.8 1186.3,450.7 1186.6,450.6 1186.9,450.5 1187.1,450.4 1187.4,450.3 1187.6,450.2 1187.9,450.1 1188.2,450.0 1188.4,449.9 1188.7,449.8 1188.9,449.7 1189.2,449.6 1189.5,449.5 1189.7,449.5 1190.0,449.4 1190.2,449.3 1190.5,449.2 1190.7,449.1 1191.0,449.0 1191.3,449.0 1191.5,448.9 1191.8,448.8 1192.0,448.8 1192.3,448.7 1192.5,448.6 1192.8,448.6 1193.1,448.5 1193.3,448.4 1193.6,448.4 1193.8,448.3 1194.1,448.3 1194.4,448.2 1194.6,448.2 1194.9,448.1 1195.1,448.1 1195.4,448.0 1195.7,448.0 1195.9,447.9 1196.2,447.9 1196.4,447.8 1196.7,447.8 1196.9,447.7 1197.2,447.7 1197.5,447.7 1197.7,447.6 1198.0,447.6 1198.2,447.6 1198.5,447.5 1198.8,447.5 1199.0,447.4 1199.3,447.4 1199.5,447.4 1199.8,447.4 1200.0,447.3 1200.3,447.3 1200.6,447.3 1200.8,447.2 1201.1,447.2 1201.3,447.2 1201.6,447.2 1201.8,447.1 1202.1,447.1 1202.4,447.1 1202.6,447.1 1202.9,447.1 1203.1,447.0 1203.4,447.0 1203.7,447.0 1203.9,447.0 1204.2,447.0 1204.4,447.0 1204.7,446.9 1205.0,446.9 1205.2,446.9 1205.5,446.9 1205.7,446.9 1206.0,446.9 1206.2,446.8 1206.5,446.8 1206.8,446.8 1207.0,446.8 1207.3,446.8 1207.5,446.8 1207.8,446.8 1208.0,446.8 1208.3,446.8 1208.6,446.7 1208.8,446.7 1209.1,446.7 1209.3,446.7 1209.6,446.7 1209.9,446.7 1210.1,446.7 1210.4,446.7 1210.6,446.7 1210.9,446.7 1211.2,446.7 1211.4,446.7 1211.7,446.7 1211.9,446.6 1212.2,446.6 1212.4,446.6 1212.7,446.6 1213.0,446.6 1213.2,446.6 1213.5,446.6 1213.7,446.6 1214.0,446.6 1214.2,446.6 1214.5,446.6 1214.8,446.6 1215.0,446.6 1215.3,446.6 1215.5,446.6 1215.8,446.6 1216.1,446.6 1216.3,446.6 1216.6,446.6 1216.8,446.6 1217.1,446.6 1217.3,446.6 1217.6,446.6 1217.9,446.6 1218.1,446.6 1218.4,446.6 1218.6,446.5 1218.9,446.5 1219.2,446.5 1219.4,446.5 1219.7,446.5 1219.9,446.5 1220.2,446.5 1220.5,446.5 1220.7,446.5 1221.0,446.5 1221.2,446.5 1221.5,446.5 1221.7,446.5 1222.0,446.5 1222.3,446.5 1222.5,446.5 1222.8,446.5 1223.0,446.5 1223.3,446.5 1223.5,446.5 1223.8,446.5 1224.1,446.5 1224.3,446.5 1224.6,446.5 1224.8,446.5 1225.1,446.5 1225.4,446.5 1225.6,446.5 1225.9,446.5 1226.1,446.5 1226.4,446.5 1226.7,446.5 1226.9,446.5 1227.2,446.5 1227.4,446.5 1227.7,446.5 1227.9,446.5 1228.2,446.5 1228.5,446.5 1228.7,446.5 1229.0,446.5 1229.2,446.5 1229.5,446.5 1229.8,446.5 1230.0,446.5 1230.3,446.5 1230.5,446.5 1230.8,446.5 1231.0,446.5 1231.3,446.5 1231.6,446.5 1231.8,446.5 1232.1,446.5 1232.3,446.5 1232.6,446.5 1232.8,446.5 1233.1,446.5 1233.4,446.5 1233.6,446.5 1233.9,446.5 1234.1,446.5 1234.4,446.5 1234.7,446.5 1234.9,446.5 1235.2,446.5 1235.4,446.5 1235.7,446.5 1236.0,446.5 1236.2,446.5 1236.5,446.5 1236.7,446.5 1237.0,446.5 1237.2,446.5 1237.5,446.5" fill="none" stroke="#ff0000" stroke-width="3.1" stroke-linejoin="round" stroke-linecap="butt"/>
<rect x="772.5" y="355.5" width="465" height="182" fill="none" stroke="#808080" stroke-width="1" shape-rendering="crispEdges"/>
<text x="769.9" y="359.4" fill="#0000ff" font-size="10" class="ui" text-anchor="end" font-weight="normal" letter-spacing="0.45">2.000</text>
<text x="769.9" y="382.1" fill="#0000ff" font-size="10" class="ui" text-anchor="end" font-weight="normal" letter-spacing="0.45">1.500</text>
<text x="769.9" y="404.9" fill="#0000ff" font-size="10" class="ui" text-anchor="end" font-weight="normal" letter-spacing="0.45">1.000</text>
<text x="769.9" y="427.6" fill="#0000ff" font-size="10" class="ui" text-anchor="end" font-weight="normal" letter-spacing="0.45">0.500</text>
<text x="769.9" y="450.4" fill="#0000ff" font-size="10" class="ui" text-anchor="end" font-weight="normal" letter-spacing="0.45">0.000</text>
<text x="769.9" y="473.1" fill="#0000ff" font-size="10" class="ui" text-anchor="end" font-weight="normal" letter-spacing="0.45">-0.500</text>
<text x="769.9" y="495.9" fill="#0000ff" font-size="10" class="ui" text-anchor="end" font-weight="normal" letter-spacing="0.45">-1.000</text>
<text x="769.9" y="518.6" fill="#0000ff" font-size="10" class="ui" text-anchor="end" font-weight="normal" letter-spacing="0.45">-1.500</text>
<text x="769.9" y="541.4" fill="#0000ff" font-size="10" class="ui" text-anchor="end" font-weight="normal" letter-spacing="0.45">-2.000</text>
<text x="772.5" y="548" fill="#0000ff" font-size="10" class="ui" text-anchor="start" font-weight="normal" letter-spacing="0.45">0.000m</text>
<text x="850.0" y="548" fill="#0000ff" font-size="10" class="ui" text-anchor="middle" font-weight="normal" letter-spacing="0.45">60.000m</text>
<text x="927.5" y="548" fill="#0000ff" font-size="10" class="ui" text-anchor="middle" font-weight="normal" letter-spacing="0.45">120.000m</text>
<text x="1005.0" y="548" fill="#0000ff" font-size="10" class="ui" text-anchor="middle" font-weight="normal" letter-spacing="0.45">180.000m</text>
<text x="1082.5" y="548" fill="#0000ff" font-size="10" class="ui" text-anchor="middle" font-weight="normal" letter-spacing="0.45">240.000m</text>
<text x="1160.0" y="548" fill="#0000ff" font-size="10" class="ui" text-anchor="middle" font-weight="normal" letter-spacing="0.45">300.000m</text>
<text x="1237.5" y="548" fill="#0000ff" font-size="10" class="ui" text-anchor="middle" font-weight="normal" letter-spacing="0.45">360.000m</text>
<text x="772" y="561" fill="#ff0000" font-size="10" class="ui" text-anchor="start" font-weight="normal" textLength="49" lengthAdjust="spacingAndGlyphs">v(OUT) (V)</text>
<rect x="772" y="562" width="49" height="1" fill="#ff0000" />
<text x="935" y="574.5" fill="#0000ff" font-size="10" class="ui" text-anchor="start" font-weight="normal" textLength="37.5" lengthAdjust="spacingAndGlyphs">T (Secs)</text>
</g>
</svg>
</body></html>
